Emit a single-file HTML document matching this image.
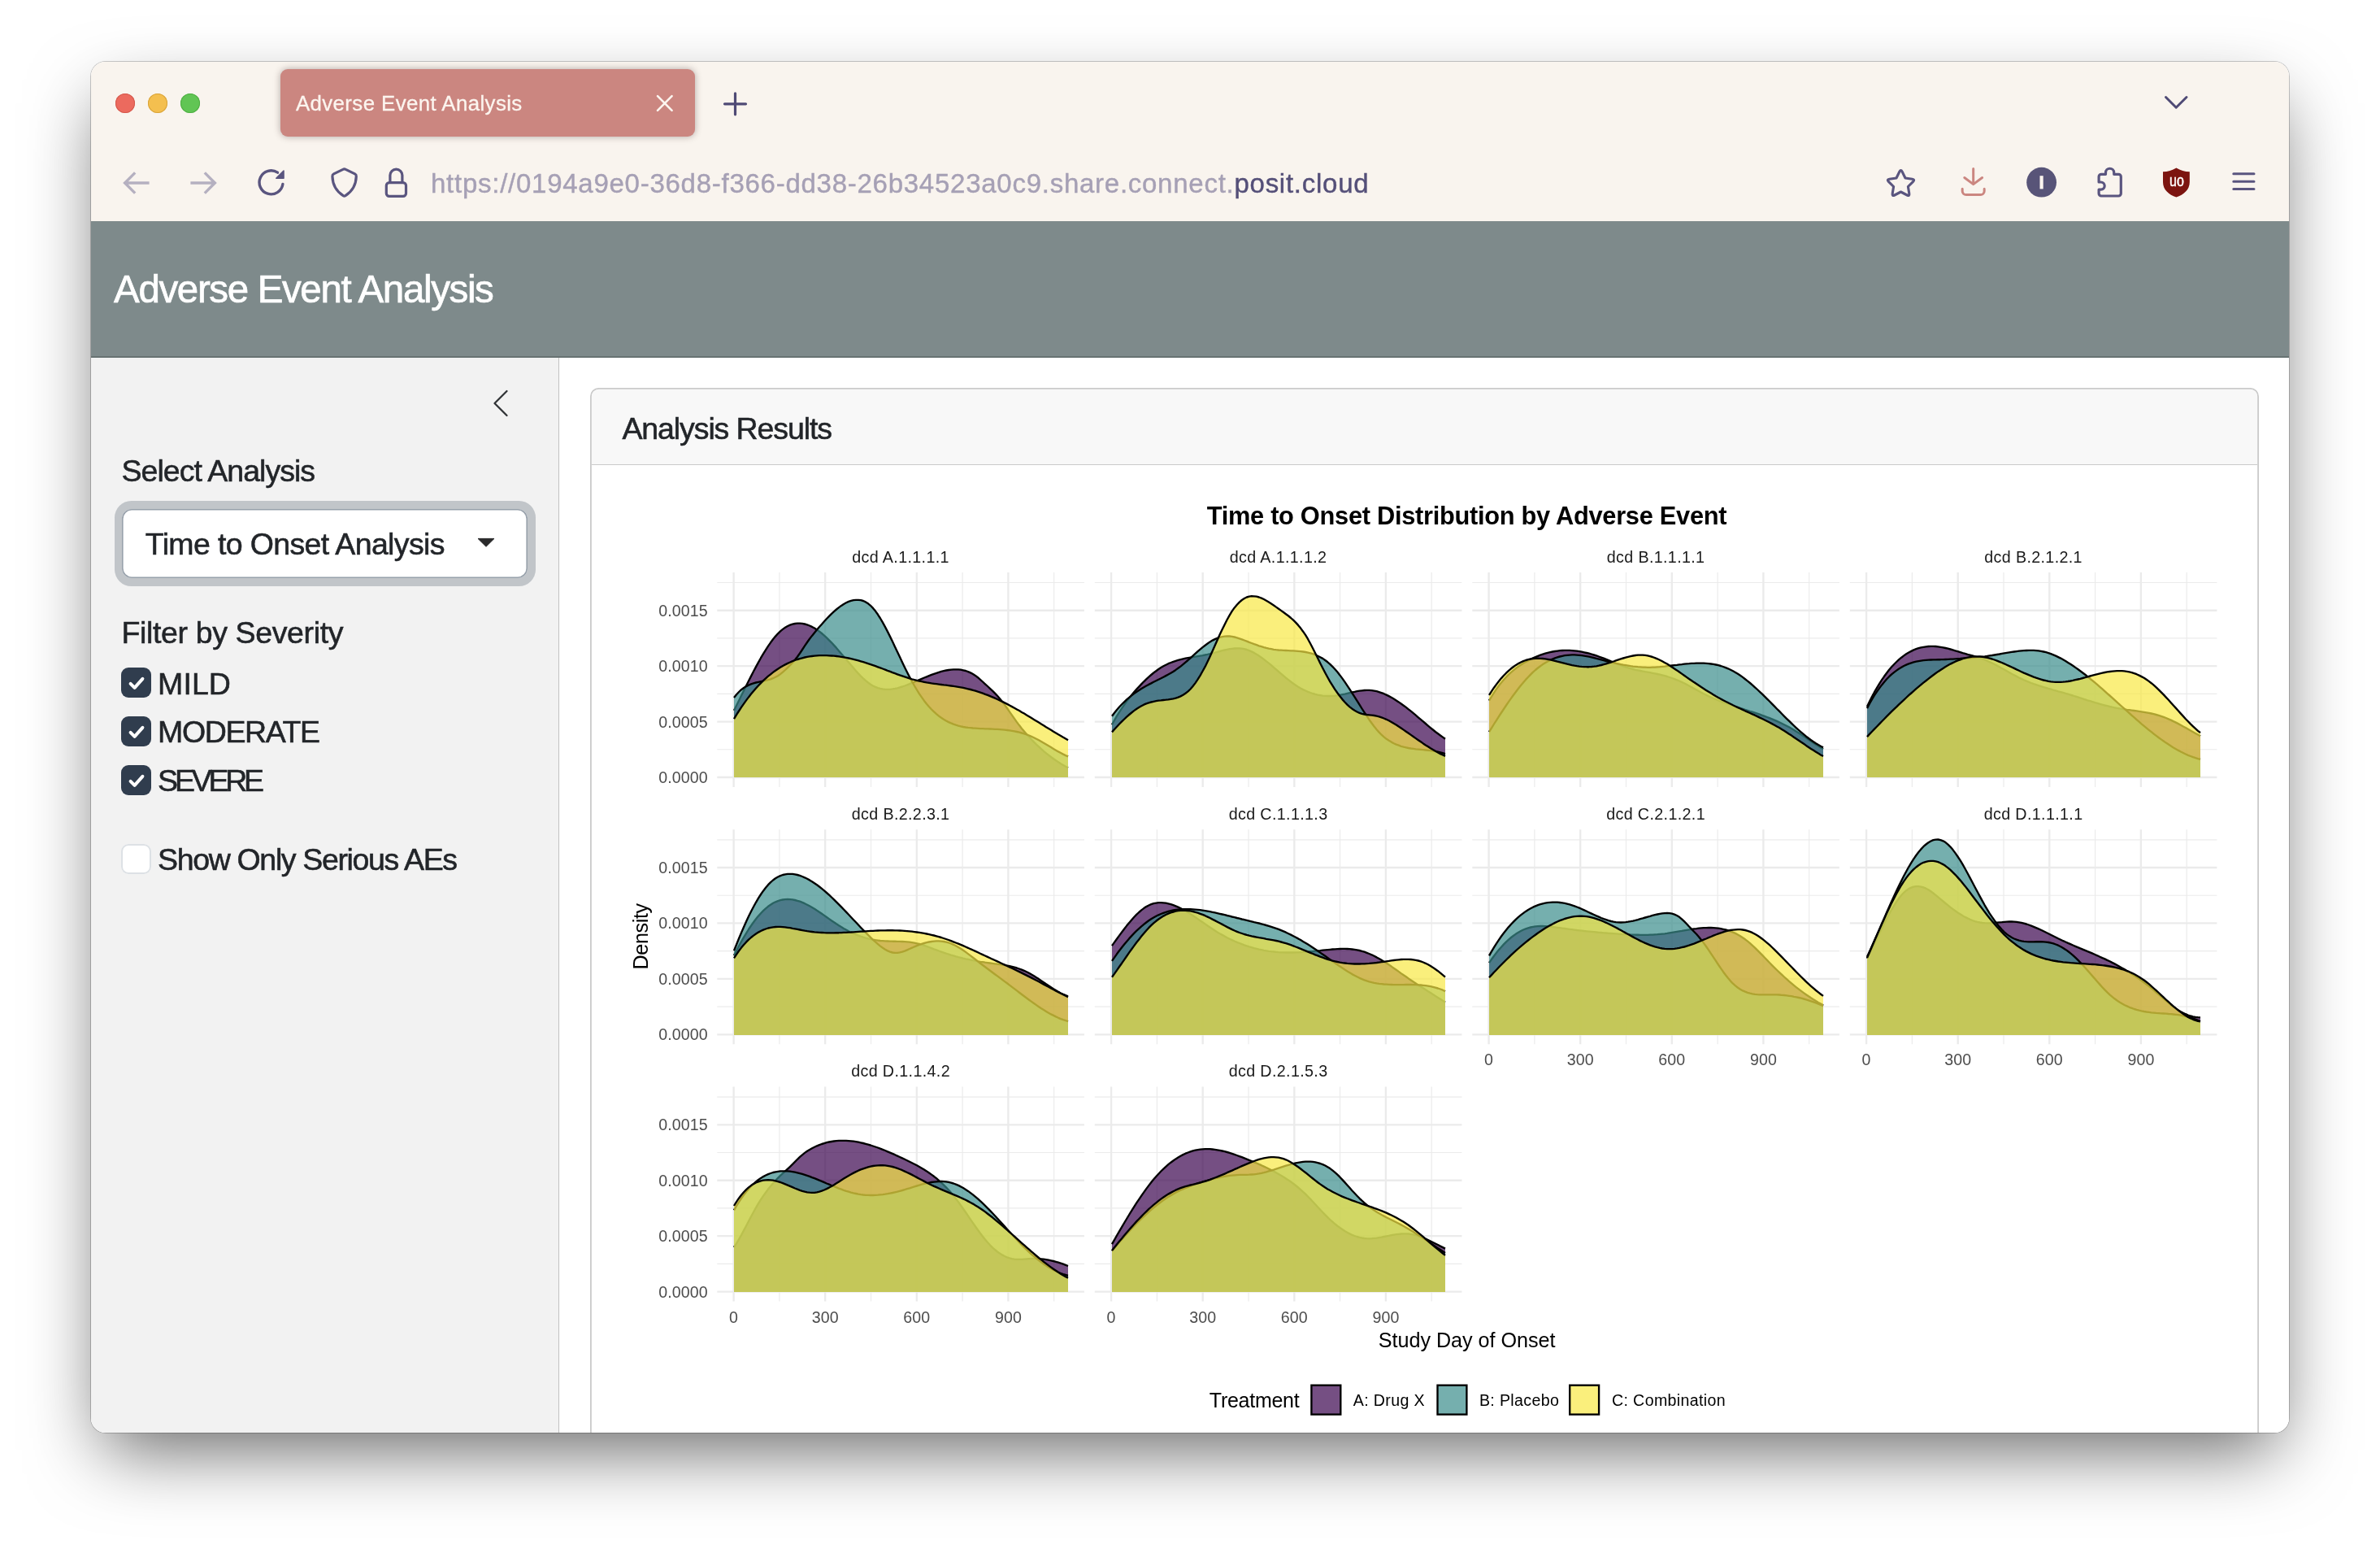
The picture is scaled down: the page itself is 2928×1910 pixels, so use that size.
<!DOCTYPE html>
<html lang="en">
<head>
<meta charset="utf-8">
<title>Adverse Event Analysis</title>
<style>
html,body{margin:0;padding:0;}
body{width:2928px;height:1910px;background:#ffffff;position:relative;overflow:hidden;font-family:"Liberation Sans", Arial, Helvetica, sans-serif;}
.abs{position:absolute;display:block;}
.t{position:absolute;white-space:nowrap;font-family:"Liberation Sans", Arial, Helvetica, sans-serif;}
#shadow{position:absolute;left:112px;top:76px;width:2704px;height:1686px;border-radius:18px;
  box-shadow:0 0 0 1px rgba(0,0,0,0.20),0 36px 90px -15px rgba(0,0,0,0.6);}
#win{position:absolute;left:112px;top:76px;width:2704px;height:1686px;border-radius:18px;overflow:hidden;background:#fff;}
#pg{position:absolute;left:-112px;top:-76px;width:2928px;height:1910px;will-change:transform;}
</style>
</head>
<body>
<div id="shadow"></div>
<div id="win"><div id="pg">
<div class="abs" style="left:112px;top:76px;width:2704px;height:196px;background:#f9f4ee"></div>
<div class="abs" style="left:142px;top:115px;width:24px;height:24px;border-radius:50%;background:#ec6a5e;box-shadow:inset 0 0 0 1px #d4584c"></div>
<div class="abs" style="left:182px;top:115px;width:24px;height:24px;border-radius:50%;background:#f4bf4f;box-shadow:inset 0 0 0 1px #d8a33a"></div>
<div class="abs" style="left:222px;top:115px;width:24px;height:24px;border-radius:50%;background:#61c554;box-shadow:inset 0 0 0 1px #4fae43"></div>
<div class="abs" style="left:345px;top:85px;width:510px;height:83px;border-radius:9px;background:#cb8680;box-shadow:0 0 9px rgba(60,40,40,0.38)"></div>
<div class="t" style="left:363.9px;top:115.3px;font-size:25.80px;line-height:25.80px;color:#fcf5ef;letter-spacing:0.419px;-webkit-text-stroke:0.3px #fcf5ef;">Adverse Event Analysis</div>
<svg class="abs" style="left:112px;top:76px" width="2704" height="196" viewBox="112 76 2704 196" fill="none" stroke-linecap="round" stroke-linejoin="round"><path d="M809 118.2L826.6 135.8M826.6 118.2L809 135.8" stroke="#fcf5ef" stroke-width="2.6"/><path d="M891.5 127.8H917.5M904.5 114.8V140.8" stroke="#4f4a75" stroke-width="3.2"/><path d="M2664.5 119.5L2677.2 132.2L2690 119.5" stroke="#4f4a75" stroke-width="3"/><path d="M183.6 225H154.5M166.2 212.4L153.6 225L166.2 237.6" stroke="#b5b0c0" stroke-width="3.4" stroke-linecap="butt" stroke-linejoin="miter"/><path d="M234.4 225H263.5M251.8 212.4L264.4 225L251.8 237.6" stroke="#b5b0c0" stroke-width="3.4" stroke-linecap="butt" stroke-linejoin="miter"/><path d="M347.9 226.5A14.5 14.5 0 1 1 341.5 212.2" stroke="#5a557f" stroke-width="3.4"/><path d="M349 210V219.2H339.8Z" fill="#5a557f" stroke="#5a557f" stroke-width="1.6"/><path d="M421.9 208.4Q423.6 207.5 425.3 208.4L436.6 213.9Q438.4 214.8 438.3 216.8C438 227.6 433 235.6 425 240.6Q423.6 241.5 422.2 240.6C414.2 235.6 409.2 227.6 408.9 216.8Q408.8 214.8 410.6 213.9Z" stroke="#5a557f" stroke-width="3.2"/><rect x="475.3" y="224.6" width="24.2" height="16.8" rx="3.6" stroke="#5a557f" stroke-width="3.2"/><path d="M479.9 224.3V215.6A7.5 7.5 0 0 1 494.9 215.6V224.3" stroke="#5a557f" stroke-width="3.2"/><path d="M2336.8 211.3Q2338.5 208.0 2340.2 211.3L2344.0 219.0L2352.5 220.3Q2356.2 220.9 2353.6 223.4L2347.4 229.5L2348.8 238.0Q2349.4 241.6 2346.2 240.0L2338.5 236.0L2330.8 240.0Q2327.6 241.6 2328.2 238.0L2329.6 229.5L2323.4 223.4Q2320.8 220.9 2324.5 220.3L2333.0 219.0Z" stroke="#5a557f" stroke-width="3.1"/><path d="M2427.7 207.6V226M2416.8 218.5L2427.7 226.6L2438.6 218.5" stroke="#cb8680" stroke-width="3"/><path d="M2414.2 232.2V235A4.6 4.6 0 0 0 2418.8 239.6H2436.6A4.6 4.6 0 0 0 2441.2 235V232.2" stroke="#cb8680" stroke-width="3"/><circle cx="2511.6" cy="224.2" r="18.4" fill="#585478" stroke="none"/><path d="M2511.6 216.2V232.4" stroke="#fcf5ef" stroke-width="4.2" stroke-linecap="butt"/><path d="M2590.5 214.3V212.3A5.1 5.1 0 0 1 2600.7 212.3V214.3H2606.3A3 3 0 0 1 2609.3 217.3V238A3 3 0 0 1 2606.3 241H2585.1A3 3 0 0 1 2582.1 238V233.2H2584.6A4.6 4.6 0 0 0 2584.6 224H2582.1V217.3A3 3 0 0 1 2585.1 214.3Z" stroke="#5a557f" stroke-width="3.2"/><path d="M2677.4 206.4C2682.5 209.6 2687.8 211 2693.8 211.2V224C2693.8 233.4 2686.6 239.4 2677.4 242.6C2668.2 239.4 2661 233.4 2661 224V211.2C2667 211 2672.3 209.6 2677.4 206.4Z" fill="#7c1410" stroke="none"/><path d="M2747.8 213.7H2773M2747.8 223.3H2773M2747.8 232.6H2773" stroke="#5a557f" stroke-width="3"/></svg>
<div class="t" style="left:2668.6px;top:211.7px;font-size:20.00px;line-height:20.00px;color:#ffffff;letter-spacing:0.000px;-webkit-text-stroke:0.5px #ffffff;transform:scaleX(0.8);transform-origin:0 0;">uo</div>
<div class="t" style="left:530.0px;top:208.9px;font-size:33.00px;line-height:33.00px;color:#a6a0b5;letter-spacing:0.738px;-webkit-text-stroke:0.4px #a6a0b5;">https://0194a9e0-36d8-f366-dd38-26b34523a0c9.share.connect.<span style="color:#544f78;-webkit-text-stroke:0.4px #544f78">posit.cloud</span></div>
<div class="abs" style="left:112px;top:272px;width:2704px;height:167.8px;background:#7e8a8b;box-shadow:inset 0 -2px 0 rgba(60,70,70,0.35)"></div>
<div class="t" style="left:140.1px;top:331.9px;font-size:47.50px;line-height:47.50px;color:#ffffff;letter-spacing:-1.361px;-webkit-text-stroke:0.7px #ffffff;">Adverse Event Analysis</div>
<div class="abs" style="left:112px;top:439.8px;width:575.2px;height:1330px;background:#f2f2f2;border-right:1.7px solid #c2c2c2"></div>
<div class="abs" style="left:688.9px;top:439.8px;width:2127.1px;height:1330px;background:#ffffff"></div>
<svg class="abs" style="left:600px;top:475px" width="40" height="44" viewBox="600 475 40 44" fill="none"><path d="M623.5 481L608.5 496L623.5 511" stroke="#2f3235" stroke-width="2.2" stroke-linecap="round" stroke-linejoin="round"/></svg>
<div class="t" style="left:149.5px;top:561.3px;font-size:37.50px;line-height:37.50px;color:#222529;letter-spacing:-0.973px;-webkit-text-stroke:0.55px #222529;">Select Analysis</div>
<div class="abs" style="left:140.5px;top:616px;width:518px;height:105px;border-radius:20.5px;background:#c1c5c9"></div>
<div class="abs" style="left:150px;top:625.6px;width:499px;height:85.6px;border-radius:12px;background:#fff;box-shadow:inset 0 0 0 1.6px #98a1ab"></div>
<div class="t" style="left:178.8px;top:651.2px;font-size:37.50px;line-height:37.50px;color:#222529;letter-spacing:-0.638px;-webkit-text-stroke:0.55px #222529;">Time to Onset Analysis</div>
<svg class="abs" style="left:580px;top:655px" width="36" height="24" viewBox="580 655 36 24"><path d="M588 662.4H608L598 672.3Z" fill="#2a2a2b" stroke="#2a2a2b" stroke-width="1" stroke-linejoin="round"/></svg>
<div class="t" style="left:149.5px;top:759.6px;font-size:37.50px;line-height:37.50px;color:#222529;letter-spacing:-0.367px;-webkit-text-stroke:0.55px #222529;">Filter by Severity</div>
<div class="abs" style="left:149.1px;top:821.1px;width:36.9px;height:36.9px;border-radius:9px;background:#303d4e"></div>
<svg class="abs" style="left:149.6px;top:821.6px" width="36" height="36" viewBox="0 0 36 36" fill="none"><path d="M10.6 18.8L15.6 23.8L25.4 12.8" stroke="#fff" stroke-width="4" stroke-linecap="round" stroke-linejoin="round"/></svg>
<div class="t" style="left:194.1px;top:822.5px;font-size:37.50px;line-height:37.50px;color:#222529;letter-spacing:0.068px;-webkit-text-stroke:0.55px #222529;">MILD</div>
<div class="abs" style="left:149.1px;top:881.1px;width:36.9px;height:36.9px;border-radius:9px;background:#303d4e"></div>
<svg class="abs" style="left:149.6px;top:881.6px" width="36" height="36" viewBox="0 0 36 36" fill="none"><path d="M10.6 18.8L15.6 23.8L25.4 12.8" stroke="#fff" stroke-width="4" stroke-linecap="round" stroke-linejoin="round"/></svg>
<div class="t" style="left:194.1px;top:882.4px;font-size:37.50px;line-height:37.50px;color:#222529;letter-spacing:-1.391px;-webkit-text-stroke:0.55px #222529;">MODERATE</div>
<div class="abs" style="left:149.1px;top:941.1px;width:36.9px;height:36.9px;border-radius:9px;background:#303d4e"></div>
<svg class="abs" style="left:149.6px;top:941.6px" width="36" height="36" viewBox="0 0 36 36" fill="none"><path d="M10.6 18.8L15.6 23.8L25.4 12.8" stroke="#fff" stroke-width="4" stroke-linecap="round" stroke-linejoin="round"/></svg>
<div class="t" style="left:194.1px;top:942.3px;font-size:37.50px;line-height:37.50px;color:#222529;letter-spacing:-4.230px;-webkit-text-stroke:0.55px #222529;">SEVERE</div>
<div class="abs" style="left:149.3px;top:1038.2px;width:36.4px;height:36.4px;border-radius:9px;background:#fff;box-shadow:inset 0 0 0 2px #dde1e5"></div>
<div class="t" style="left:194.1px;top:1039.0px;font-size:37.50px;line-height:37.50px;color:#222529;letter-spacing:-1.352px;-webkit-text-stroke:0.55px #222529;">Show Only Serious AEs</div>
<div class="abs" style="left:726.2px;top:477.1px;width:2052.6px;height:1320px;border-radius:10.5px;background:#fff;box-shadow:inset 0 0 0 1.8px #cacaca"></div>
<div class="abs" style="left:728px;top:478.9px;width:2049px;height:92.1px;border-radius:8.7px 8.7px 0 0;background:#f8f8f8;border-bottom:1.8px solid #cacaca"></div>
<div class="t" style="left:765.4px;top:508.7px;font-size:37.50px;line-height:37.50px;color:#222529;letter-spacing:-1.094px;-webkit-text-stroke:0.55px #222529;">Analysis Results</div>
<svg class="abs" style="left:740px;top:590px" width="2030" height="1180" viewBox="740 590 2030 1180" font-family='"Liberation Sans", Arial, Helvetica, sans-serif'>
<text x="1804.6" y="645.3" text-anchor="middle" font-size="30.8" font-weight="700" fill="#000" textLength="639.8" lengthAdjust="spacing">Time to Onset Distribution by Adverse Event</text>
<text x="1804.6" y="1656.8" text-anchor="middle" font-size="25.2" fill="#000" textLength="217.6" lengthAdjust="spacing">Study Day of Onset</text>
<text transform="translate(796.8 1151.7) rotate(-90)" text-anchor="middle" font-size="25.2" fill="#000" textLength="81.6" lengthAdjust="spacing">Density</text>
<g><path d="M958.90 704.0V967.9M1071.50 704.0V967.9M1184.10 704.0V967.9M1296.70 704.0V967.9M882.3 921.78H1333.9M882.3 853.36H1333.9M882.3 784.92H1333.9M882.3 716.50H1333.9" stroke="#ebebeb" stroke-width="1.17" fill="none"/><path d="M902.60 704.0V967.9M1015.20 704.0V967.9M1127.80 704.0V967.9M1240.40 704.0V967.9M882.3 956.00H1333.9M882.3 887.57H1333.9M882.3 819.14H1333.9M882.3 750.71H1333.9" stroke="#ebebeb" stroke-width="2.35" fill="none"/><path d="M903.0 873.8L906.0 867.8L909.0 861.7L912.0 855.6L915.0 849.5L918.0 843.5L921.0 837.5L924.0 831.6L927.0 825.7L930.0 820.1L933.0 814.6L936.0 809.2L939.0 804.1L942.0 799.3L945.0 794.6L948.0 790.3L951.0 786.3L954.0 782.6L957.0 779.3L960.0 776.4L963.0 773.9L966.0 771.8L969.0 770.0L972.0 768.7L975.0 767.6L978.0 767.0L981.0 766.6L984.0 766.6L987.0 766.9L990.0 767.5L993.0 768.3L996.0 769.5L999.0 770.9L1002.0 772.6L1005.0 774.5L1008.0 776.6L1011.0 779.0L1014.0 781.6L1017.0 784.3L1020.0 787.3L1023.0 790.3L1026.0 793.6L1029.0 796.9L1032.0 800.4L1035.0 803.9L1038.0 807.4L1041.0 811.0L1044.0 814.6L1047.0 818.1L1050.0 821.6L1053.0 825.1L1056.0 828.4L1059.0 831.5L1062.0 834.4L1065.0 837.1L1068.0 839.5L1071.0 841.7L1074.0 843.5L1077.0 844.9L1080.0 846.1L1083.0 846.9L1086.0 847.5L1089.0 847.8L1092.0 847.9L1095.0 847.8L1098.0 847.4L1101.0 846.9L1104.0 846.3L1107.0 845.4L1110.0 844.5L1113.0 843.5L1116.0 842.4L1119.0 841.2L1122.0 839.9L1125.0 838.7L1128.0 837.4L1131.0 836.1L1134.0 834.8L1137.0 833.5L1140.0 832.3L1143.0 831.1L1146.0 829.9L1149.0 828.8L1152.0 827.8L1155.0 826.8L1158.0 825.9L1161.0 825.2L1164.0 824.5L1167.0 824.0L1170.0 823.6L1173.0 823.4L1176.0 823.3L1179.0 823.4L1182.0 823.7L1185.0 824.3L1188.0 825.0L1191.0 826.1L1194.0 827.4L1197.0 829.0L1200.0 830.9L1203.0 833.2L1206.0 835.8L1209.0 838.5L1212.0 841.3L1215.0 844.0L1218.0 846.8L1221.0 849.6L1224.0 852.6L1227.0 855.8L1230.0 859.2L1233.0 862.9L1236.0 866.9L1239.0 871.0L1242.0 875.3L1245.0 879.6L1248.0 883.9L1251.0 888.1L1254.0 892.1L1257.0 895.9L1260.0 899.5L1263.0 903.0L1266.0 906.3L1269.0 909.5L1272.0 912.6L1275.0 915.6L1278.0 918.4L1281.0 921.1L1284.0 923.8L1287.0 926.3L1290.0 928.7L1293.0 931.0L1296.0 933.2L1299.0 935.3L1302.0 937.3L1305.0 939.2L1308.0 941.0L1311.0 942.8L1314.0 944.4L1314.0 956.0L903.0 956.0Z" fill="#3a044f" fill-opacity="0.7" stroke="none"/><path d="M903.0 873.8L906.0 867.8L909.0 861.7L912.0 855.6L915.0 849.5L918.0 843.5L921.0 837.5L924.0 831.6L927.0 825.7L930.0 820.1L933.0 814.6L936.0 809.2L939.0 804.1L942.0 799.3L945.0 794.6L948.0 790.3L951.0 786.3L954.0 782.6L957.0 779.3L960.0 776.4L963.0 773.9L966.0 771.8L969.0 770.0L972.0 768.7L975.0 767.6L978.0 767.0L981.0 766.6L984.0 766.6L987.0 766.9L990.0 767.5L993.0 768.3L996.0 769.5L999.0 770.9L1002.0 772.6L1005.0 774.5L1008.0 776.6L1011.0 779.0L1014.0 781.6L1017.0 784.3L1020.0 787.3L1023.0 790.3L1026.0 793.6L1029.0 796.9L1032.0 800.4L1035.0 803.9L1038.0 807.4L1041.0 811.0L1044.0 814.6L1047.0 818.1L1050.0 821.6L1053.0 825.1L1056.0 828.4L1059.0 831.5L1062.0 834.4L1065.0 837.1L1068.0 839.5L1071.0 841.7L1074.0 843.5L1077.0 844.9L1080.0 846.1L1083.0 846.9L1086.0 847.5L1089.0 847.8L1092.0 847.9L1095.0 847.8L1098.0 847.4L1101.0 846.9L1104.0 846.3L1107.0 845.4L1110.0 844.5L1113.0 843.5L1116.0 842.4L1119.0 841.2L1122.0 839.9L1125.0 838.7L1128.0 837.4L1131.0 836.1L1134.0 834.8L1137.0 833.5L1140.0 832.3L1143.0 831.1L1146.0 829.9L1149.0 828.8L1152.0 827.8L1155.0 826.8L1158.0 825.9L1161.0 825.2L1164.0 824.5L1167.0 824.0L1170.0 823.6L1173.0 823.4L1176.0 823.3L1179.0 823.4L1182.0 823.7L1185.0 824.3L1188.0 825.0L1191.0 826.1L1194.0 827.4L1197.0 829.0L1200.0 830.9L1203.0 833.2L1206.0 835.8L1209.0 838.5L1212.0 841.3L1215.0 844.0L1218.0 846.8L1221.0 849.6L1224.0 852.6L1227.0 855.8L1230.0 859.2L1233.0 862.9L1236.0 866.9L1239.0 871.0L1242.0 875.3L1245.0 879.6L1248.0 883.9L1251.0 888.1L1254.0 892.1L1257.0 895.9L1260.0 899.5L1263.0 903.0L1266.0 906.3L1269.0 909.5L1272.0 912.6L1275.0 915.6L1278.0 918.4L1281.0 921.1L1284.0 923.8L1287.0 926.3L1290.0 928.7L1293.0 931.0L1296.0 933.2L1299.0 935.3L1302.0 937.3L1305.0 939.2L1308.0 941.0L1311.0 942.8L1314.0 944.4" fill="none" stroke="#000" stroke-width="2.35" stroke-linejoin="round"/><path d="M903.0 858.0L906.0 854.2L909.0 851.0L912.0 848.2L915.0 846.0L918.0 844.1L921.0 842.6L924.0 841.3L927.0 840.3L930.0 839.5L933.0 838.8L936.0 838.2L939.0 837.6L942.0 836.9L945.0 836.2L948.0 835.3L951.0 834.2L954.0 832.8L957.0 831.2L960.0 829.1L963.0 826.7L966.0 824.0L969.0 821.1L972.0 818.1L975.0 814.9L978.0 811.5L981.0 807.7L984.0 803.5L987.0 799.0L990.0 794.4L993.0 790.0L996.0 785.8L999.0 781.9L1002.0 778.2L1005.0 774.6L1008.0 771.1L1011.0 767.7L1014.0 764.3L1017.0 761.0L1020.0 757.9L1023.0 754.9L1026.0 752.1L1029.0 749.5L1032.0 747.1L1035.0 744.9L1038.0 743.0L1041.0 741.3L1044.0 739.9L1047.0 738.9L1050.0 738.1L1053.0 737.8L1056.0 737.8L1059.0 738.2L1062.0 739.0L1065.0 740.4L1068.0 742.3L1071.0 744.8L1074.0 747.9L1077.0 751.6L1080.0 755.8L1083.0 760.5L1086.0 765.6L1089.0 771.1L1092.0 776.9L1095.0 782.9L1098.0 789.1L1101.0 795.4L1104.0 801.8L1107.0 808.1L1110.0 814.5L1113.0 820.7L1116.0 826.7L1119.0 832.6L1122.0 838.2L1125.0 843.5L1128.0 848.5L1131.0 853.3L1134.0 857.7L1137.0 861.9L1140.0 865.7L1143.0 869.2L1146.0 872.5L1149.0 875.4L1152.0 878.1L1155.0 880.6L1158.0 882.8L1161.0 884.8L1164.0 886.5L1167.0 888.1L1170.0 889.4L1173.0 890.6L1176.0 891.7L1179.0 892.6L1182.0 893.3L1185.0 894.0L1188.0 894.5L1191.0 894.9L1194.0 895.2L1197.0 895.5L1200.0 895.7L1203.0 895.9L1206.0 896.1L1209.0 896.2L1212.0 896.3L1215.0 896.4L1218.0 896.5L1221.0 896.6L1224.0 896.8L1227.0 896.9L1230.0 897.1L1233.0 897.4L1236.0 897.7L1239.0 898.0L1242.0 898.4L1245.0 898.8L1248.0 899.4L1251.0 900.0L1254.0 900.7L1257.0 901.5L1260.0 902.4L1263.0 903.4L1266.0 904.5L1269.0 905.8L1272.0 907.2L1275.0 908.7L1278.0 910.3L1281.0 912.0L1284.0 913.7L1287.0 915.5L1290.0 917.3L1293.0 919.1L1296.0 920.9L1299.0 922.7L1302.0 924.4L1305.0 926.0L1308.0 927.6L1311.0 929.1L1314.0 930.4L1314.0 956.0L903.0 956.0Z" fill="#3b8d8b" fill-opacity="0.7" stroke="none"/><path d="M903.0 858.0L906.0 854.2L909.0 851.0L912.0 848.2L915.0 846.0L918.0 844.1L921.0 842.6L924.0 841.3L927.0 840.3L930.0 839.5L933.0 838.8L936.0 838.2L939.0 837.6L942.0 836.9L945.0 836.2L948.0 835.3L951.0 834.2L954.0 832.8L957.0 831.2L960.0 829.1L963.0 826.7L966.0 824.0L969.0 821.1L972.0 818.1L975.0 814.9L978.0 811.5L981.0 807.7L984.0 803.5L987.0 799.0L990.0 794.4L993.0 790.0L996.0 785.8L999.0 781.9L1002.0 778.2L1005.0 774.6L1008.0 771.1L1011.0 767.7L1014.0 764.3L1017.0 761.0L1020.0 757.9L1023.0 754.9L1026.0 752.1L1029.0 749.5L1032.0 747.1L1035.0 744.9L1038.0 743.0L1041.0 741.3L1044.0 739.9L1047.0 738.9L1050.0 738.1L1053.0 737.8L1056.0 737.8L1059.0 738.2L1062.0 739.0L1065.0 740.4L1068.0 742.3L1071.0 744.8L1074.0 747.9L1077.0 751.6L1080.0 755.8L1083.0 760.5L1086.0 765.6L1089.0 771.1L1092.0 776.9L1095.0 782.9L1098.0 789.1L1101.0 795.4L1104.0 801.8L1107.0 808.1L1110.0 814.5L1113.0 820.7L1116.0 826.7L1119.0 832.6L1122.0 838.2L1125.0 843.5L1128.0 848.5L1131.0 853.3L1134.0 857.7L1137.0 861.9L1140.0 865.7L1143.0 869.2L1146.0 872.5L1149.0 875.4L1152.0 878.1L1155.0 880.6L1158.0 882.8L1161.0 884.8L1164.0 886.5L1167.0 888.1L1170.0 889.4L1173.0 890.6L1176.0 891.7L1179.0 892.6L1182.0 893.3L1185.0 894.0L1188.0 894.5L1191.0 894.9L1194.0 895.2L1197.0 895.5L1200.0 895.7L1203.0 895.9L1206.0 896.1L1209.0 896.2L1212.0 896.3L1215.0 896.4L1218.0 896.5L1221.0 896.6L1224.0 896.8L1227.0 896.9L1230.0 897.1L1233.0 897.4L1236.0 897.7L1239.0 898.0L1242.0 898.4L1245.0 898.8L1248.0 899.4L1251.0 900.0L1254.0 900.7L1257.0 901.5L1260.0 902.4L1263.0 903.4L1266.0 904.5L1269.0 905.8L1272.0 907.2L1275.0 908.7L1278.0 910.3L1281.0 912.0L1284.0 913.7L1287.0 915.5L1290.0 917.3L1293.0 919.1L1296.0 920.9L1299.0 922.7L1302.0 924.4L1305.0 926.0L1308.0 927.6L1311.0 929.1L1314.0 930.4" fill="none" stroke="#000" stroke-width="2.35" stroke-linejoin="round"/><path d="M903.0 884.2L906.0 879.2L909.0 874.5L912.0 869.9L915.0 865.6L918.0 861.4L921.0 857.4L924.0 853.6L927.0 850.0L930.0 846.5L933.0 843.2L936.0 840.1L939.0 837.2L942.0 834.4L945.0 831.7L948.0 829.3L951.0 826.9L954.0 824.7L957.0 822.7L960.0 820.8L963.0 819.0L966.0 817.4L969.0 815.9L972.0 814.5L975.0 813.2L978.0 812.0L981.0 811.0L984.0 810.1L987.0 809.3L990.0 808.5L993.0 807.9L996.0 807.4L999.0 807.0L1002.0 806.6L1005.0 806.4L1008.0 806.2L1011.0 806.1L1014.0 806.1L1017.0 806.1L1020.0 806.3L1023.0 806.5L1026.0 806.7L1029.0 807.0L1032.0 807.4L1035.0 807.8L1038.0 808.3L1041.0 808.9L1044.0 809.5L1047.0 810.2L1050.0 810.9L1053.0 811.6L1056.0 812.4L1059.0 813.3L1062.0 814.2L1065.0 815.1L1068.0 816.1L1071.0 817.1L1074.0 818.1L1077.0 819.2L1080.0 820.3L1083.0 821.4L1086.0 822.5L1089.0 823.6L1092.0 824.8L1095.0 825.9L1098.0 827.1L1101.0 828.2L1104.0 829.3L1107.0 830.4L1110.0 831.4L1113.0 832.4L1116.0 833.4L1119.0 834.4L1122.0 835.3L1125.0 836.1L1128.0 836.9L1131.0 837.6L1134.0 838.2L1137.0 838.8L1140.0 839.4L1143.0 839.9L1146.0 840.4L1149.0 840.8L1152.0 841.2L1155.0 841.6L1158.0 842.0L1161.0 842.4L1164.0 842.7L1167.0 843.1L1170.0 843.5L1173.0 843.9L1176.0 844.3L1179.0 844.8L1182.0 845.3L1185.0 845.9L1188.0 846.6L1191.0 847.3L1194.0 848.0L1197.0 848.8L1200.0 849.7L1203.0 850.7L1206.0 851.6L1209.0 852.7L1212.0 853.8L1215.0 854.9L1218.0 856.1L1221.0 857.4L1224.0 858.7L1227.0 860.0L1230.0 861.4L1233.0 862.9L1236.0 864.4L1239.0 865.9L1242.0 867.5L1245.0 869.1L1248.0 870.7L1251.0 872.4L1254.0 874.1L1257.0 875.9L1260.0 877.6L1263.0 879.4L1266.0 881.2L1269.0 883.1L1272.0 884.9L1275.0 886.7L1278.0 888.6L1281.0 890.4L1284.0 892.3L1287.0 894.2L1290.0 896.0L1293.0 897.8L1296.0 899.7L1299.0 901.5L1302.0 903.3L1305.0 905.0L1308.0 906.8L1311.0 908.5L1314.0 910.2L1314.0 956.0L903.0 956.0Z" fill="#f8e845" fill-opacity="0.7" stroke="none"/><path d="M903.0 884.2L906.0 879.2L909.0 874.5L912.0 869.9L915.0 865.6L918.0 861.4L921.0 857.4L924.0 853.6L927.0 850.0L930.0 846.5L933.0 843.2L936.0 840.1L939.0 837.2L942.0 834.4L945.0 831.7L948.0 829.3L951.0 826.9L954.0 824.7L957.0 822.7L960.0 820.8L963.0 819.0L966.0 817.4L969.0 815.9L972.0 814.5L975.0 813.2L978.0 812.0L981.0 811.0L984.0 810.1L987.0 809.3L990.0 808.5L993.0 807.9L996.0 807.4L999.0 807.0L1002.0 806.6L1005.0 806.4L1008.0 806.2L1011.0 806.1L1014.0 806.1L1017.0 806.1L1020.0 806.3L1023.0 806.5L1026.0 806.7L1029.0 807.0L1032.0 807.4L1035.0 807.8L1038.0 808.3L1041.0 808.9L1044.0 809.5L1047.0 810.2L1050.0 810.9L1053.0 811.6L1056.0 812.4L1059.0 813.3L1062.0 814.2L1065.0 815.1L1068.0 816.1L1071.0 817.1L1074.0 818.1L1077.0 819.2L1080.0 820.3L1083.0 821.4L1086.0 822.5L1089.0 823.6L1092.0 824.8L1095.0 825.9L1098.0 827.1L1101.0 828.2L1104.0 829.3L1107.0 830.4L1110.0 831.4L1113.0 832.4L1116.0 833.4L1119.0 834.4L1122.0 835.3L1125.0 836.1L1128.0 836.9L1131.0 837.6L1134.0 838.2L1137.0 838.8L1140.0 839.4L1143.0 839.9L1146.0 840.4L1149.0 840.8L1152.0 841.2L1155.0 841.6L1158.0 842.0L1161.0 842.4L1164.0 842.7L1167.0 843.1L1170.0 843.5L1173.0 843.9L1176.0 844.3L1179.0 844.8L1182.0 845.3L1185.0 845.9L1188.0 846.6L1191.0 847.3L1194.0 848.0L1197.0 848.8L1200.0 849.7L1203.0 850.7L1206.0 851.6L1209.0 852.7L1212.0 853.8L1215.0 854.9L1218.0 856.1L1221.0 857.4L1224.0 858.7L1227.0 860.0L1230.0 861.4L1233.0 862.9L1236.0 864.4L1239.0 865.9L1242.0 867.5L1245.0 869.1L1248.0 870.7L1251.0 872.4L1254.0 874.1L1257.0 875.9L1260.0 877.6L1263.0 879.4L1266.0 881.2L1269.0 883.1L1272.0 884.9L1275.0 886.7L1278.0 888.6L1281.0 890.4L1284.0 892.3L1287.0 894.2L1290.0 896.0L1293.0 897.8L1296.0 899.7L1299.0 901.5L1302.0 903.3L1305.0 905.0L1308.0 906.8L1311.0 908.5L1314.0 910.2" fill="none" stroke="#000" stroke-width="2.35" stroke-linejoin="round"/><text x="1108.1" y="691.8" text-anchor="middle" font-size="19.7" letter-spacing="0.36" fill="#1a1a1a">dcd A.1.1.1.1</text><text x="870.7" y="963.0" text-anchor="end" font-size="19.6" letter-spacing="0.1" fill="#4d4d4d">0.0000</text><text x="870.7" y="894.6" text-anchor="end" font-size="19.6" letter-spacing="0.1" fill="#4d4d4d">0.0005</text><text x="870.7" y="826.1" text-anchor="end" font-size="19.6" letter-spacing="0.1" fill="#4d4d4d">0.0010</text><text x="870.7" y="757.7" text-anchor="end" font-size="19.6" letter-spacing="0.1" fill="#4d4d4d">0.0015</text></g>
<g><path d="M1423.40 704.0V967.9M1536.00 704.0V967.9M1648.60 704.0V967.9M1761.20 704.0V967.9M1346.8 921.78H1798.4M1346.8 853.36H1798.4M1346.8 784.92H1798.4M1346.8 716.50H1798.4" stroke="#ebebeb" stroke-width="1.17" fill="none"/><path d="M1367.10 704.0V967.9M1479.70 704.0V967.9M1592.30 704.0V967.9M1704.90 704.0V967.9M1346.8 956.00H1798.4M1346.8 887.57H1798.4M1346.8 819.14H1798.4M1346.8 750.71H1798.4" stroke="#ebebeb" stroke-width="2.35" fill="none"/><path d="M1368.0 891.3L1371.0 885.9L1374.0 880.7L1377.0 875.8L1380.1 871.2L1383.1 866.8L1386.1 862.6L1389.1 858.7L1392.1 854.9L1395.1 851.3L1398.1 847.9L1401.2 844.6L1404.2 841.4L1407.2 838.3L1410.2 835.4L1413.2 832.6L1416.2 830.0L1419.2 827.5L1422.3 825.2L1425.3 823.0L1428.3 821.0L1431.3 819.3L1434.3 817.7L1437.3 816.2L1440.4 815.0L1443.4 813.8L1446.4 812.8L1449.4 811.9L1452.4 811.1L1455.4 810.4L1458.4 809.7L1461.5 809.1L1464.5 808.6L1467.5 808.1L1470.5 807.6L1473.5 807.1L1476.5 806.6L1479.5 806.1L1482.6 805.5L1485.6 804.9L1488.6 804.2L1491.6 803.4L1494.6 802.7L1497.6 801.8L1500.6 801.0L1503.7 800.2L1506.7 799.5L1509.7 798.8L1512.7 798.2L1515.7 797.8L1518.7 797.5L1521.8 797.4L1524.8 797.4L1527.8 797.7L1530.8 798.2L1533.8 799.0L1536.8 800.1L1539.8 801.4L1542.9 802.9L1545.9 804.7L1548.9 806.6L1551.9 808.7L1554.9 810.9L1557.9 813.3L1560.9 815.7L1564.0 818.2L1567.0 820.8L1570.0 823.4L1573.0 826.0L1576.0 828.6L1579.0 831.2L1582.0 833.7L1585.1 836.1L1588.1 838.5L1591.1 840.7L1594.1 842.8L1597.1 844.7L1600.1 846.5L1603.1 848.1L1606.2 849.5L1609.2 850.8L1612.2 852.0L1615.2 853.0L1618.2 853.9L1621.2 854.6L1624.2 855.1L1627.3 855.6L1630.3 855.9L1633.3 856.0L1636.3 856.0L1639.3 855.9L1642.3 855.7L1645.4 855.3L1648.4 854.8L1651.4 854.2L1654.4 853.6L1657.4 852.9L1660.4 852.2L1663.4 851.5L1666.5 850.9L1669.5 850.2L1672.5 849.7L1675.5 849.3L1678.5 849.0L1681.5 848.9L1684.5 848.9L1687.6 849.1L1690.6 849.6L1693.6 850.2L1696.6 851.1L1699.6 852.1L1702.6 853.2L1705.6 854.6L1708.7 856.1L1711.7 857.7L1714.7 859.5L1717.7 861.4L1720.7 863.4L1723.7 865.5L1726.8 867.7L1729.8 869.9L1732.8 872.3L1735.8 874.7L1738.8 877.2L1741.8 879.7L1744.8 882.3L1747.9 884.9L1750.9 887.4L1753.9 890.0L1756.9 892.6L1759.9 895.1L1762.9 897.5L1765.9 900.0L1769.0 902.3L1772.0 904.5L1775.0 906.6L1778.0 908.7L1778.0 956.0L1368.0 956.0Z" fill="#3a044f" fill-opacity="0.7" stroke="none"/><path d="M1368.0 891.3L1371.0 885.9L1374.0 880.7L1377.0 875.8L1380.1 871.2L1383.1 866.8L1386.1 862.6L1389.1 858.7L1392.1 854.9L1395.1 851.3L1398.1 847.9L1401.2 844.6L1404.2 841.4L1407.2 838.3L1410.2 835.4L1413.2 832.6L1416.2 830.0L1419.2 827.5L1422.3 825.2L1425.3 823.0L1428.3 821.0L1431.3 819.3L1434.3 817.7L1437.3 816.2L1440.4 815.0L1443.4 813.8L1446.4 812.8L1449.4 811.9L1452.4 811.1L1455.4 810.4L1458.4 809.7L1461.5 809.1L1464.5 808.6L1467.5 808.1L1470.5 807.6L1473.5 807.1L1476.5 806.6L1479.5 806.1L1482.6 805.5L1485.6 804.9L1488.6 804.2L1491.6 803.4L1494.6 802.7L1497.6 801.8L1500.6 801.0L1503.7 800.2L1506.7 799.5L1509.7 798.8L1512.7 798.2L1515.7 797.8L1518.7 797.5L1521.8 797.4L1524.8 797.4L1527.8 797.7L1530.8 798.2L1533.8 799.0L1536.8 800.1L1539.8 801.4L1542.9 802.9L1545.9 804.7L1548.9 806.6L1551.9 808.7L1554.9 810.9L1557.9 813.3L1560.9 815.7L1564.0 818.2L1567.0 820.8L1570.0 823.4L1573.0 826.0L1576.0 828.6L1579.0 831.2L1582.0 833.7L1585.1 836.1L1588.1 838.5L1591.1 840.7L1594.1 842.8L1597.1 844.7L1600.1 846.5L1603.1 848.1L1606.2 849.5L1609.2 850.8L1612.2 852.0L1615.2 853.0L1618.2 853.9L1621.2 854.6L1624.2 855.1L1627.3 855.6L1630.3 855.9L1633.3 856.0L1636.3 856.0L1639.3 855.9L1642.3 855.7L1645.4 855.3L1648.4 854.8L1651.4 854.2L1654.4 853.6L1657.4 852.9L1660.4 852.2L1663.4 851.5L1666.5 850.9L1669.5 850.2L1672.5 849.7L1675.5 849.3L1678.5 849.0L1681.5 848.9L1684.5 848.9L1687.6 849.1L1690.6 849.6L1693.6 850.2L1696.6 851.1L1699.6 852.1L1702.6 853.2L1705.6 854.6L1708.7 856.1L1711.7 857.7L1714.7 859.5L1717.7 861.4L1720.7 863.4L1723.7 865.5L1726.8 867.7L1729.8 869.9L1732.8 872.3L1735.8 874.7L1738.8 877.2L1741.8 879.7L1744.8 882.3L1747.9 884.9L1750.9 887.4L1753.9 890.0L1756.9 892.6L1759.9 895.1L1762.9 897.5L1765.9 900.0L1769.0 902.3L1772.0 904.5L1775.0 906.6L1778.0 908.7" fill="none" stroke="#000" stroke-width="2.35" stroke-linejoin="round"/><path d="M1368.0 880.8L1371.0 876.7L1374.0 873.0L1377.0 869.5L1380.1 866.3L1383.1 863.3L1386.1 860.4L1389.1 857.8L1392.1 855.4L1395.1 853.1L1398.1 851.0L1401.2 849.0L1404.2 847.1L1407.2 845.3L1410.2 843.6L1413.2 841.9L1416.2 840.4L1419.2 838.8L1422.3 837.3L1425.3 835.8L1428.3 834.3L1431.3 832.7L1434.3 831.1L1437.3 829.5L1440.4 827.8L1443.4 825.9L1446.4 823.9L1449.4 821.8L1452.4 819.6L1455.4 817.2L1458.4 814.6L1461.5 812.0L1464.5 809.3L1467.5 806.6L1470.5 803.9L1473.5 801.2L1476.5 798.6L1479.5 796.1L1482.6 793.7L1485.6 791.5L1488.6 789.4L1491.6 787.6L1494.6 786.1L1497.6 784.8L1500.6 783.8L1503.7 783.1L1506.7 782.6L1509.7 782.4L1512.7 782.5L1515.7 782.9L1518.7 783.5L1521.8 784.3L1524.8 785.3L1527.8 786.3L1530.8 787.5L1533.8 788.7L1536.8 789.9L1539.8 791.0L1542.9 792.2L1545.9 793.2L1548.9 794.3L1551.9 795.2L1554.9 796.1L1557.9 796.9L1560.9 797.6L1564.0 798.2L1567.0 798.8L1570.0 799.2L1573.0 799.5L1576.0 799.7L1579.0 799.9L1582.0 800.0L1585.1 800.1L1588.1 800.3L1591.1 800.4L1594.1 800.6L1597.1 800.8L1600.1 801.1L1603.1 801.5L1606.2 802.0L1609.2 802.6L1612.2 803.3L1615.2 804.2L1618.2 805.3L1621.2 806.7L1624.2 808.2L1627.3 809.9L1630.3 812.0L1633.3 814.3L1636.3 816.9L1639.3 819.8L1642.3 823.0L1645.4 826.6L1648.4 830.4L1651.4 834.4L1654.4 838.7L1657.4 843.1L1660.4 847.7L1663.4 852.4L1666.5 857.1L1669.5 861.9L1672.5 866.7L1675.5 871.5L1678.5 876.2L1681.5 880.7L1684.5 885.2L1687.6 889.5L1690.6 893.5L1693.6 897.2L1696.6 900.6L1699.6 903.7L1702.6 906.4L1705.6 908.8L1708.7 910.8L1711.7 912.6L1714.7 914.2L1717.7 915.6L1720.7 916.7L1723.7 917.8L1726.8 918.6L1729.8 919.3L1732.8 920.0L1735.8 920.5L1738.8 920.9L1741.8 921.3L1744.8 921.6L1747.9 921.9L1750.9 922.2L1753.9 922.5L1756.9 922.8L1759.9 923.2L1762.9 923.6L1765.9 924.1L1769.0 924.7L1772.0 925.3L1775.0 926.2L1778.0 927.1L1778.0 956.0L1368.0 956.0Z" fill="#3b8d8b" fill-opacity="0.7" stroke="none"/><path d="M1368.0 880.8L1371.0 876.7L1374.0 873.0L1377.0 869.5L1380.1 866.3L1383.1 863.3L1386.1 860.4L1389.1 857.8L1392.1 855.4L1395.1 853.1L1398.1 851.0L1401.2 849.0L1404.2 847.1L1407.2 845.3L1410.2 843.6L1413.2 841.9L1416.2 840.4L1419.2 838.8L1422.3 837.3L1425.3 835.8L1428.3 834.3L1431.3 832.7L1434.3 831.1L1437.3 829.5L1440.4 827.8L1443.4 825.9L1446.4 823.9L1449.4 821.8L1452.4 819.6L1455.4 817.2L1458.4 814.6L1461.5 812.0L1464.5 809.3L1467.5 806.6L1470.5 803.9L1473.5 801.2L1476.5 798.6L1479.5 796.1L1482.6 793.7L1485.6 791.5L1488.6 789.4L1491.6 787.6L1494.6 786.1L1497.6 784.8L1500.6 783.8L1503.7 783.1L1506.7 782.6L1509.7 782.4L1512.7 782.5L1515.7 782.9L1518.7 783.5L1521.8 784.3L1524.8 785.3L1527.8 786.3L1530.8 787.5L1533.8 788.7L1536.8 789.9L1539.8 791.0L1542.9 792.2L1545.9 793.2L1548.9 794.3L1551.9 795.2L1554.9 796.1L1557.9 796.9L1560.9 797.6L1564.0 798.2L1567.0 798.8L1570.0 799.2L1573.0 799.5L1576.0 799.7L1579.0 799.9L1582.0 800.0L1585.1 800.1L1588.1 800.3L1591.1 800.4L1594.1 800.6L1597.1 800.8L1600.1 801.1L1603.1 801.5L1606.2 802.0L1609.2 802.6L1612.2 803.3L1615.2 804.2L1618.2 805.3L1621.2 806.7L1624.2 808.2L1627.3 809.9L1630.3 812.0L1633.3 814.3L1636.3 816.9L1639.3 819.8L1642.3 823.0L1645.4 826.6L1648.4 830.4L1651.4 834.4L1654.4 838.7L1657.4 843.1L1660.4 847.7L1663.4 852.4L1666.5 857.1L1669.5 861.9L1672.5 866.7L1675.5 871.5L1678.5 876.2L1681.5 880.7L1684.5 885.2L1687.6 889.5L1690.6 893.5L1693.6 897.2L1696.6 900.6L1699.6 903.7L1702.6 906.4L1705.6 908.8L1708.7 910.8L1711.7 912.6L1714.7 914.2L1717.7 915.6L1720.7 916.7L1723.7 917.8L1726.8 918.6L1729.8 919.3L1732.8 920.0L1735.8 920.5L1738.8 920.9L1741.8 921.3L1744.8 921.6L1747.9 921.9L1750.9 922.2L1753.9 922.5L1756.9 922.8L1759.9 923.2L1762.9 923.6L1765.9 924.1L1769.0 924.7L1772.0 925.3L1775.0 926.2L1778.0 927.1" fill="none" stroke="#000" stroke-width="2.35" stroke-linejoin="round"/><path d="M1368.0 900.4L1371.0 897.0L1374.0 893.7L1377.0 890.5L1380.1 887.4L1383.1 884.5L1386.1 881.6L1389.1 879.0L1392.1 876.5L1395.1 874.1L1398.1 872.0L1401.2 870.0L1404.2 868.3L1407.2 866.7L1410.2 865.4L1413.2 864.3L1416.2 863.5L1419.2 862.8L1422.3 862.2L1425.3 861.7L1428.3 861.4L1431.3 861.0L1434.3 860.7L1437.3 860.3L1440.4 859.8L1443.4 859.3L1446.4 858.6L1449.4 857.6L1452.4 856.4L1455.4 854.8L1458.4 852.8L1461.5 850.4L1464.5 847.5L1467.5 844.0L1470.5 840.1L1473.5 835.7L1476.5 830.8L1479.5 825.5L1482.6 819.9L1485.6 813.8L1488.6 807.4L1491.6 800.8L1494.6 794.1L1497.6 787.3L1500.6 780.6L1503.7 774.1L1506.7 767.9L1509.7 762.0L1512.7 756.6L1515.7 751.7L1518.7 747.4L1521.8 743.7L1524.8 740.6L1527.8 738.0L1530.8 736.0L1533.8 734.5L1536.8 733.6L1539.8 733.2L1542.9 733.3L1545.9 733.7L1548.9 734.5L1551.9 735.6L1554.9 737.0L1557.9 738.7L1560.9 740.5L1564.0 742.5L1567.0 744.5L1570.0 746.6L1573.0 748.8L1576.0 750.9L1579.0 753.0L1582.0 755.2L1585.1 757.5L1588.1 760.0L1591.1 762.7L1594.1 765.6L1597.1 768.9L1600.1 772.6L1603.1 776.7L1606.2 781.2L1609.2 786.2L1612.2 791.7L1615.2 797.5L1618.2 803.5L1621.2 809.6L1624.2 815.7L1627.3 821.7L1630.3 827.5L1633.3 833.0L1636.3 838.3L1639.3 843.2L1642.3 847.9L1645.4 852.3L1648.4 856.3L1651.4 860.1L1654.4 863.5L1657.4 866.6L1660.4 869.3L1663.4 871.7L1666.5 873.8L1669.5 875.5L1672.5 876.8L1675.5 877.8L1678.5 878.5L1681.5 879.0L1684.5 879.3L1687.6 879.6L1690.6 880.0L1693.6 880.6L1696.6 881.3L1699.6 882.3L1702.6 883.5L1705.6 884.8L1708.7 886.3L1711.7 888.0L1714.7 889.8L1717.7 891.6L1720.7 893.6L1723.7 895.5L1726.8 897.6L1729.8 899.7L1732.8 901.8L1735.8 903.9L1738.8 906.0L1741.8 908.1L1744.8 910.2L1747.9 912.3L1750.9 914.4L1753.9 916.4L1756.9 918.3L1759.9 920.3L1762.9 922.1L1765.9 923.8L1769.0 925.5L1772.0 927.1L1775.0 928.5L1778.0 929.9L1778.0 956.0L1368.0 956.0Z" fill="#f8e845" fill-opacity="0.7" stroke="none"/><path d="M1368.0 900.4L1371.0 897.0L1374.0 893.7L1377.0 890.5L1380.1 887.4L1383.1 884.5L1386.1 881.6L1389.1 879.0L1392.1 876.5L1395.1 874.1L1398.1 872.0L1401.2 870.0L1404.2 868.3L1407.2 866.7L1410.2 865.4L1413.2 864.3L1416.2 863.5L1419.2 862.8L1422.3 862.2L1425.3 861.7L1428.3 861.4L1431.3 861.0L1434.3 860.7L1437.3 860.3L1440.4 859.8L1443.4 859.3L1446.4 858.6L1449.4 857.6L1452.4 856.4L1455.4 854.8L1458.4 852.8L1461.5 850.4L1464.5 847.5L1467.5 844.0L1470.5 840.1L1473.5 835.7L1476.5 830.8L1479.5 825.5L1482.6 819.9L1485.6 813.8L1488.6 807.4L1491.6 800.8L1494.6 794.1L1497.6 787.3L1500.6 780.6L1503.7 774.1L1506.7 767.9L1509.7 762.0L1512.7 756.6L1515.7 751.7L1518.7 747.4L1521.8 743.7L1524.8 740.6L1527.8 738.0L1530.8 736.0L1533.8 734.5L1536.8 733.6L1539.8 733.2L1542.9 733.3L1545.9 733.7L1548.9 734.5L1551.9 735.6L1554.9 737.0L1557.9 738.7L1560.9 740.5L1564.0 742.5L1567.0 744.5L1570.0 746.6L1573.0 748.8L1576.0 750.9L1579.0 753.0L1582.0 755.2L1585.1 757.5L1588.1 760.0L1591.1 762.7L1594.1 765.6L1597.1 768.9L1600.1 772.6L1603.1 776.7L1606.2 781.2L1609.2 786.2L1612.2 791.7L1615.2 797.5L1618.2 803.5L1621.2 809.6L1624.2 815.7L1627.3 821.7L1630.3 827.5L1633.3 833.0L1636.3 838.3L1639.3 843.2L1642.3 847.9L1645.4 852.3L1648.4 856.3L1651.4 860.1L1654.4 863.5L1657.4 866.6L1660.4 869.3L1663.4 871.7L1666.5 873.8L1669.5 875.5L1672.5 876.8L1675.5 877.8L1678.5 878.5L1681.5 879.0L1684.5 879.3L1687.6 879.6L1690.6 880.0L1693.6 880.6L1696.6 881.3L1699.6 882.3L1702.6 883.5L1705.6 884.8L1708.7 886.3L1711.7 888.0L1714.7 889.8L1717.7 891.6L1720.7 893.6L1723.7 895.5L1726.8 897.6L1729.8 899.7L1732.8 901.8L1735.8 903.9L1738.8 906.0L1741.8 908.1L1744.8 910.2L1747.9 912.3L1750.9 914.4L1753.9 916.4L1756.9 918.3L1759.9 920.3L1762.9 922.1L1765.9 923.8L1769.0 925.5L1772.0 927.1L1775.0 928.5L1778.0 929.9" fill="none" stroke="#000" stroke-width="2.35" stroke-linejoin="round"/><text x="1572.6" y="691.8" text-anchor="middle" font-size="19.7" letter-spacing="0.36" fill="#1a1a1a">dcd A.1.1.1.2</text></g>
<g><path d="M1887.90 704.0V967.9M2000.50 704.0V967.9M2113.10 704.0V967.9M2225.70 704.0V967.9M1811.3 921.78H2262.9M1811.3 853.36H2262.9M1811.3 784.92H2262.9M1811.3 716.50H2262.9" stroke="#ebebeb" stroke-width="1.17" fill="none"/><path d="M1831.60 704.0V967.9M1944.20 704.0V967.9M2056.80 704.0V967.9M2169.40 704.0V967.9M1811.3 956.00H2262.9M1811.3 887.57H2262.9M1811.3 819.14H2262.9M1811.3 750.71H2262.9" stroke="#ebebeb" stroke-width="2.35" fill="none"/><path d="M1832.0 861.7L1835.0 856.6L1838.0 851.9L1841.0 847.4L1844.0 843.3L1847.0 839.5L1850.0 836.0L1853.0 832.7L1856.0 829.7L1859.0 826.9L1862.0 824.3L1865.0 821.9L1868.0 819.7L1871.0 817.7L1874.0 815.8L1877.0 814.0L1880.0 812.4L1883.0 810.8L1886.0 809.4L1889.0 808.1L1892.0 806.8L1895.0 805.7L1898.0 804.6L1901.0 803.7L1904.0 802.9L1907.0 802.1L1910.0 801.5L1913.0 801.0L1916.0 800.6L1919.0 800.2L1922.0 800.0L1925.0 799.9L1928.0 799.9L1931.0 799.9L1934.0 800.1L1937.0 800.4L1940.0 800.7L1943.0 801.2L1946.0 801.7L1949.0 802.3L1952.0 803.0L1955.0 803.7L1958.0 804.6L1961.0 805.5L1964.0 806.4L1967.0 807.5L1970.0 808.6L1973.0 809.7L1976.0 810.9L1979.0 812.1L1982.0 813.4L1985.0 814.6L1988.0 815.8L1991.0 817.0L1994.0 818.2L1997.0 819.3L2000.0 820.4L2003.0 821.3L2006.0 822.2L2009.0 823.0L2012.0 823.8L2015.0 824.4L2018.0 825.0L2021.0 825.6L2024.0 826.2L2027.0 826.7L2030.0 827.2L2033.0 827.8L2036.0 828.4L2039.0 829.0L2042.0 829.6L2045.0 830.4L2048.0 831.2L2051.0 832.0L2054.0 833.0L2057.0 834.0L2060.0 835.1L2063.0 836.3L2066.0 837.5L2069.0 838.9L2072.0 840.3L2075.0 841.9L2078.0 843.5L2081.0 845.1L2084.0 846.7L2087.0 848.4L2090.0 850.0L2093.0 851.7L2096.0 853.3L2099.0 854.8L2102.0 856.2L2105.0 857.6L2108.0 859.0L2111.0 860.2L2114.0 861.5L2117.0 862.6L2120.0 863.8L2123.0 864.9L2126.0 866.0L2129.0 867.0L2132.0 868.0L2135.0 869.0L2138.0 870.0L2141.0 870.9L2144.0 871.9L2147.0 872.9L2150.0 873.8L2153.0 874.8L2156.0 875.7L2159.0 876.7L2162.0 877.7L2165.0 878.7L2168.0 879.8L2171.0 880.9L2174.0 882.0L2177.0 883.1L2180.0 884.3L2183.0 885.6L2186.0 886.9L2189.0 888.3L2192.0 889.7L2195.0 891.2L2198.0 892.7L2201.0 894.3L2204.0 896.1L2207.0 897.8L2210.0 899.7L2213.0 901.6L2216.0 903.6L2219.0 905.6L2222.0 907.6L2225.0 909.7L2228.0 911.7L2231.0 913.7L2234.0 915.7L2237.0 917.6L2240.0 919.5L2243.0 921.3L2243.0 956.0L1832.0 956.0Z" fill="#3a044f" fill-opacity="0.7" stroke="none"/><path d="M1832.0 861.7L1835.0 856.6L1838.0 851.9L1841.0 847.4L1844.0 843.3L1847.0 839.5L1850.0 836.0L1853.0 832.7L1856.0 829.7L1859.0 826.9L1862.0 824.3L1865.0 821.9L1868.0 819.7L1871.0 817.7L1874.0 815.8L1877.0 814.0L1880.0 812.4L1883.0 810.8L1886.0 809.4L1889.0 808.1L1892.0 806.8L1895.0 805.7L1898.0 804.6L1901.0 803.7L1904.0 802.9L1907.0 802.1L1910.0 801.5L1913.0 801.0L1916.0 800.6L1919.0 800.2L1922.0 800.0L1925.0 799.9L1928.0 799.9L1931.0 799.9L1934.0 800.1L1937.0 800.4L1940.0 800.7L1943.0 801.2L1946.0 801.7L1949.0 802.3L1952.0 803.0L1955.0 803.7L1958.0 804.6L1961.0 805.5L1964.0 806.4L1967.0 807.5L1970.0 808.6L1973.0 809.7L1976.0 810.9L1979.0 812.1L1982.0 813.4L1985.0 814.6L1988.0 815.8L1991.0 817.0L1994.0 818.2L1997.0 819.3L2000.0 820.4L2003.0 821.3L2006.0 822.2L2009.0 823.0L2012.0 823.8L2015.0 824.4L2018.0 825.0L2021.0 825.6L2024.0 826.2L2027.0 826.7L2030.0 827.2L2033.0 827.8L2036.0 828.4L2039.0 829.0L2042.0 829.6L2045.0 830.4L2048.0 831.2L2051.0 832.0L2054.0 833.0L2057.0 834.0L2060.0 835.1L2063.0 836.3L2066.0 837.5L2069.0 838.9L2072.0 840.3L2075.0 841.9L2078.0 843.5L2081.0 845.1L2084.0 846.7L2087.0 848.4L2090.0 850.0L2093.0 851.7L2096.0 853.3L2099.0 854.8L2102.0 856.2L2105.0 857.6L2108.0 859.0L2111.0 860.2L2114.0 861.5L2117.0 862.6L2120.0 863.8L2123.0 864.9L2126.0 866.0L2129.0 867.0L2132.0 868.0L2135.0 869.0L2138.0 870.0L2141.0 870.9L2144.0 871.9L2147.0 872.9L2150.0 873.8L2153.0 874.8L2156.0 875.7L2159.0 876.7L2162.0 877.7L2165.0 878.7L2168.0 879.8L2171.0 880.9L2174.0 882.0L2177.0 883.1L2180.0 884.3L2183.0 885.6L2186.0 886.9L2189.0 888.3L2192.0 889.7L2195.0 891.2L2198.0 892.7L2201.0 894.3L2204.0 896.1L2207.0 897.8L2210.0 899.7L2213.0 901.6L2216.0 903.6L2219.0 905.6L2222.0 907.6L2225.0 909.7L2228.0 911.7L2231.0 913.7L2234.0 915.7L2237.0 917.6L2240.0 919.5L2243.0 921.3" fill="none" stroke="#000" stroke-width="2.35" stroke-linejoin="round"/><path d="M1832.0 900.1L1835.0 895.3L1838.0 890.5L1841.0 885.8L1844.0 881.1L1847.0 876.5L1850.0 872.0L1853.0 867.5L1856.0 863.1L1859.0 858.9L1862.0 854.7L1865.0 850.7L1868.0 846.8L1871.0 843.0L1874.0 839.4L1877.0 835.9L1880.0 832.7L1883.0 829.6L1886.0 826.7L1889.0 824.0L1892.0 821.5L1895.0 819.2L1898.0 817.1L1901.0 815.2L1904.0 813.5L1907.0 811.9L1910.0 810.6L1913.0 809.4L1916.0 808.4L1919.0 807.5L1922.0 806.8L1925.0 806.2L1928.0 805.8L1931.0 805.6L1934.0 805.4L1937.0 805.4L1940.0 805.6L1943.0 805.8L1946.0 806.2L1949.0 806.6L1952.0 807.1L1955.0 807.7L1958.0 808.4L1961.0 809.1L1964.0 809.9L1967.0 810.6L1970.0 811.4L1973.0 812.2L1976.0 813.0L1979.0 813.8L1982.0 814.5L1985.0 815.2L1988.0 815.9L1991.0 816.5L1994.0 817.1L1997.0 817.7L2000.0 818.2L2003.0 818.7L2006.0 819.2L2009.0 819.6L2012.0 819.9L2015.0 820.2L2018.0 820.4L2021.0 820.6L2024.0 820.7L2027.0 820.8L2030.0 820.8L2033.0 820.7L2036.0 820.6L2039.0 820.4L2042.0 820.2L2045.0 819.9L2048.0 819.6L2051.0 819.2L2054.0 818.9L2057.0 818.5L2060.0 818.1L2063.0 817.8L2066.0 817.4L2069.0 817.1L2072.0 816.7L2075.0 816.4L2078.0 816.2L2081.0 815.9L2084.0 815.8L2087.0 815.6L2090.0 815.6L2093.0 815.6L2096.0 815.7L2099.0 815.8L2102.0 816.1L2105.0 816.5L2108.0 816.9L2111.0 817.5L2114.0 818.2L2117.0 819.0L2120.0 820.0L2123.0 821.1L2126.0 822.3L2129.0 823.7L2132.0 825.2L2135.0 826.9L2138.0 828.8L2141.0 830.8L2144.0 832.9L2147.0 835.2L2150.0 837.6L2153.0 840.0L2156.0 842.6L2159.0 845.3L2162.0 848.0L2165.0 850.8L2168.0 853.7L2171.0 856.6L2174.0 859.6L2177.0 862.5L2180.0 865.6L2183.0 868.6L2186.0 871.7L2189.0 874.7L2192.0 877.8L2195.0 880.8L2198.0 883.8L2201.0 886.7L2204.0 889.6L2207.0 892.5L2210.0 895.3L2213.0 898.0L2216.0 900.7L2219.0 903.2L2222.0 905.7L2225.0 908.0L2228.0 910.2L2231.0 912.3L2234.0 914.3L2237.0 916.1L2240.0 917.8L2243.0 919.3L2243.0 956.0L1832.0 956.0Z" fill="#3b8d8b" fill-opacity="0.7" stroke="none"/><path d="M1832.0 900.1L1835.0 895.3L1838.0 890.5L1841.0 885.8L1844.0 881.1L1847.0 876.5L1850.0 872.0L1853.0 867.5L1856.0 863.1L1859.0 858.9L1862.0 854.7L1865.0 850.7L1868.0 846.8L1871.0 843.0L1874.0 839.4L1877.0 835.9L1880.0 832.7L1883.0 829.6L1886.0 826.7L1889.0 824.0L1892.0 821.5L1895.0 819.2L1898.0 817.1L1901.0 815.2L1904.0 813.5L1907.0 811.9L1910.0 810.6L1913.0 809.4L1916.0 808.4L1919.0 807.5L1922.0 806.8L1925.0 806.2L1928.0 805.8L1931.0 805.6L1934.0 805.4L1937.0 805.4L1940.0 805.6L1943.0 805.8L1946.0 806.2L1949.0 806.6L1952.0 807.1L1955.0 807.7L1958.0 808.4L1961.0 809.1L1964.0 809.9L1967.0 810.6L1970.0 811.4L1973.0 812.2L1976.0 813.0L1979.0 813.8L1982.0 814.5L1985.0 815.2L1988.0 815.9L1991.0 816.5L1994.0 817.1L1997.0 817.7L2000.0 818.2L2003.0 818.7L2006.0 819.2L2009.0 819.6L2012.0 819.9L2015.0 820.2L2018.0 820.4L2021.0 820.6L2024.0 820.7L2027.0 820.8L2030.0 820.8L2033.0 820.7L2036.0 820.6L2039.0 820.4L2042.0 820.2L2045.0 819.9L2048.0 819.6L2051.0 819.2L2054.0 818.9L2057.0 818.5L2060.0 818.1L2063.0 817.8L2066.0 817.4L2069.0 817.1L2072.0 816.7L2075.0 816.4L2078.0 816.2L2081.0 815.9L2084.0 815.8L2087.0 815.6L2090.0 815.6L2093.0 815.6L2096.0 815.7L2099.0 815.8L2102.0 816.1L2105.0 816.5L2108.0 816.9L2111.0 817.5L2114.0 818.2L2117.0 819.0L2120.0 820.0L2123.0 821.1L2126.0 822.3L2129.0 823.7L2132.0 825.2L2135.0 826.9L2138.0 828.8L2141.0 830.8L2144.0 832.9L2147.0 835.2L2150.0 837.6L2153.0 840.0L2156.0 842.6L2159.0 845.3L2162.0 848.0L2165.0 850.8L2168.0 853.7L2171.0 856.6L2174.0 859.6L2177.0 862.5L2180.0 865.6L2183.0 868.6L2186.0 871.7L2189.0 874.7L2192.0 877.8L2195.0 880.8L2198.0 883.8L2201.0 886.7L2204.0 889.6L2207.0 892.5L2210.0 895.3L2213.0 898.0L2216.0 900.7L2219.0 903.2L2222.0 905.7L2225.0 908.0L2228.0 910.2L2231.0 912.3L2234.0 914.3L2237.0 916.1L2240.0 917.8L2243.0 919.3" fill="none" stroke="#000" stroke-width="2.35" stroke-linejoin="round"/><path d="M1832.0 854.8L1835.0 850.1L1838.0 845.7L1841.0 841.6L1844.0 837.7L1847.0 834.1L1850.0 830.8L1853.0 827.7L1856.0 824.9L1859.0 822.3L1862.0 820.0L1865.0 817.9L1868.0 816.1L1871.0 814.5L1874.0 813.1L1877.0 812.0L1880.0 811.1L1883.0 810.5L1886.0 810.0L1889.0 809.8L1892.0 809.7L1895.0 809.8L1898.0 810.0L1901.0 810.4L1904.0 810.9L1907.0 811.4L1910.0 812.1L1913.0 812.8L1916.0 813.6L1919.0 814.3L1922.0 815.1L1925.0 815.9L1928.0 816.7L1931.0 817.4L1934.0 818.1L1937.0 818.7L1940.0 819.2L1943.0 819.6L1946.0 819.9L1949.0 820.1L1952.0 820.2L1955.0 820.2L1958.0 820.0L1961.0 819.7L1964.0 819.3L1967.0 818.7L1970.0 818.0L1973.0 817.2L1976.0 816.4L1979.0 815.4L1982.0 814.5L1985.0 813.5L1988.0 812.4L1991.0 811.4L1994.0 810.4L1997.0 809.5L2000.0 808.6L2003.0 807.8L2006.0 807.1L2009.0 806.5L2012.0 806.0L2015.0 805.7L2018.0 805.6L2021.0 805.7L2024.0 805.9L2027.0 806.4L2030.0 807.1L2033.0 808.0L2036.0 809.1L2039.0 810.3L2042.0 811.7L2045.0 813.2L2048.0 814.9L2051.0 816.6L2054.0 818.5L2057.0 820.4L2060.0 822.4L2063.0 824.4L2066.0 826.5L2069.0 828.6L2072.0 830.7L2075.0 832.9L2078.0 835.0L2081.0 837.0L2084.0 839.1L2087.0 841.1L2090.0 843.1L2093.0 845.1L2096.0 847.0L2099.0 848.9L2102.0 850.8L2105.0 852.6L2108.0 854.4L2111.0 856.2L2114.0 857.9L2117.0 859.6L2120.0 861.2L2123.0 862.8L2126.0 864.3L2129.0 865.8L2132.0 867.3L2135.0 868.7L2138.0 870.1L2141.0 871.5L2144.0 872.9L2147.0 874.3L2150.0 875.6L2153.0 877.0L2156.0 878.4L2159.0 879.7L2162.0 881.1L2165.0 882.6L2168.0 884.0L2171.0 885.5L2174.0 887.0L2177.0 888.5L2180.0 890.1L2183.0 891.7L2186.0 893.4L2189.0 895.1L2192.0 896.9L2195.0 898.8L2198.0 900.7L2201.0 902.7L2204.0 904.6L2207.0 906.7L2210.0 908.7L2213.0 910.7L2216.0 912.8L2219.0 914.8L2222.0 916.9L2225.0 918.9L2228.0 920.9L2231.0 922.8L2234.0 924.7L2237.0 926.6L2240.0 928.4L2243.0 930.1L2243.0 956.0L1832.0 956.0Z" fill="#f8e845" fill-opacity="0.7" stroke="none"/><path d="M1832.0 854.8L1835.0 850.1L1838.0 845.7L1841.0 841.6L1844.0 837.7L1847.0 834.1L1850.0 830.8L1853.0 827.7L1856.0 824.9L1859.0 822.3L1862.0 820.0L1865.0 817.9L1868.0 816.1L1871.0 814.5L1874.0 813.1L1877.0 812.0L1880.0 811.1L1883.0 810.5L1886.0 810.0L1889.0 809.8L1892.0 809.7L1895.0 809.8L1898.0 810.0L1901.0 810.4L1904.0 810.9L1907.0 811.4L1910.0 812.1L1913.0 812.8L1916.0 813.6L1919.0 814.3L1922.0 815.1L1925.0 815.9L1928.0 816.7L1931.0 817.4L1934.0 818.1L1937.0 818.7L1940.0 819.2L1943.0 819.6L1946.0 819.9L1949.0 820.1L1952.0 820.2L1955.0 820.2L1958.0 820.0L1961.0 819.7L1964.0 819.3L1967.0 818.7L1970.0 818.0L1973.0 817.2L1976.0 816.4L1979.0 815.4L1982.0 814.5L1985.0 813.5L1988.0 812.4L1991.0 811.4L1994.0 810.4L1997.0 809.5L2000.0 808.6L2003.0 807.8L2006.0 807.1L2009.0 806.5L2012.0 806.0L2015.0 805.7L2018.0 805.6L2021.0 805.7L2024.0 805.9L2027.0 806.4L2030.0 807.1L2033.0 808.0L2036.0 809.1L2039.0 810.3L2042.0 811.7L2045.0 813.2L2048.0 814.9L2051.0 816.6L2054.0 818.5L2057.0 820.4L2060.0 822.4L2063.0 824.4L2066.0 826.5L2069.0 828.6L2072.0 830.7L2075.0 832.9L2078.0 835.0L2081.0 837.0L2084.0 839.1L2087.0 841.1L2090.0 843.1L2093.0 845.1L2096.0 847.0L2099.0 848.9L2102.0 850.8L2105.0 852.6L2108.0 854.4L2111.0 856.2L2114.0 857.9L2117.0 859.6L2120.0 861.2L2123.0 862.8L2126.0 864.3L2129.0 865.8L2132.0 867.3L2135.0 868.7L2138.0 870.1L2141.0 871.5L2144.0 872.9L2147.0 874.3L2150.0 875.6L2153.0 877.0L2156.0 878.4L2159.0 879.7L2162.0 881.1L2165.0 882.6L2168.0 884.0L2171.0 885.5L2174.0 887.0L2177.0 888.5L2180.0 890.1L2183.0 891.7L2186.0 893.4L2189.0 895.1L2192.0 896.9L2195.0 898.8L2198.0 900.7L2201.0 902.7L2204.0 904.6L2207.0 906.7L2210.0 908.7L2213.0 910.7L2216.0 912.8L2219.0 914.8L2222.0 916.9L2225.0 918.9L2228.0 920.9L2231.0 922.8L2234.0 924.7L2237.0 926.6L2240.0 928.4L2243.0 930.1" fill="none" stroke="#000" stroke-width="2.35" stroke-linejoin="round"/><text x="2037.1" y="691.8" text-anchor="middle" font-size="19.7" letter-spacing="0.36" fill="#1a1a1a">dcd B.1.1.1.1</text></g>
<g><path d="M2352.40 704.0V967.9M2465.00 704.0V967.9M2577.60 704.0V967.9M2690.20 704.0V967.9M2275.8 921.78H2727.4M2275.8 853.36H2727.4M2275.8 784.92H2727.4M2275.8 716.50H2727.4" stroke="#ebebeb" stroke-width="1.17" fill="none"/><path d="M2296.10 704.0V967.9M2408.70 704.0V967.9M2521.30 704.0V967.9M2633.90 704.0V967.9M2275.8 956.00H2727.4M2275.8 887.57H2727.4M2275.8 819.14H2727.4M2275.8 750.71H2727.4" stroke="#ebebeb" stroke-width="2.35" fill="none"/><path d="M2297.0 869.1L2300.0 862.8L2303.0 856.8L2306.0 851.2L2309.1 845.9L2312.1 840.9L2315.1 836.2L2318.1 831.8L2321.1 827.7L2324.1 823.8L2327.1 820.3L2330.2 817.0L2333.2 814.0L2336.2 811.2L2339.2 808.7L2342.2 806.4L2345.2 804.3L2348.2 802.5L2351.3 800.9L2354.3 799.4L2357.3 798.2L2360.3 797.2L2363.3 796.4L2366.3 795.8L2369.4 795.3L2372.4 795.0L2375.4 794.9L2378.4 794.9L2381.4 795.0L2384.4 795.3L2387.4 795.8L2390.5 796.3L2393.5 797.0L2396.5 797.7L2399.5 798.5L2402.5 799.4L2405.5 800.3L2408.5 801.2L2411.6 802.2L2414.6 803.1L2417.6 803.9L2420.6 804.8L2423.6 805.6L2426.6 806.5L2429.6 807.4L2432.7 808.3L2435.7 809.3L2438.7 810.3L2441.7 811.5L2444.7 812.7L2447.7 814.1L2450.8 815.5L2453.8 817.0L2456.8 818.6L2459.8 820.2L2462.8 821.9L2465.8 823.6L2468.8 825.3L2471.9 827.0L2474.9 828.7L2477.9 830.3L2480.9 831.9L2483.9 833.5L2486.9 834.9L2489.9 836.3L2493.0 837.6L2496.0 838.8L2499.0 840.0L2502.0 841.1L2505.0 842.1L2508.0 843.2L2511.0 844.1L2514.1 845.1L2517.1 846.0L2520.1 846.9L2523.1 847.7L2526.1 848.6L2529.1 849.4L2532.1 850.3L2535.2 851.1L2538.2 851.9L2541.2 852.8L2544.2 853.7L2547.2 854.6L2550.2 855.5L2553.2 856.5L2556.3 857.4L2559.3 858.4L2562.3 859.3L2565.3 860.3L2568.3 861.3L2571.3 862.2L2574.4 863.1L2577.4 864.1L2580.4 864.9L2583.4 865.8L2586.4 866.7L2589.4 867.5L2592.4 868.2L2595.5 869.0L2598.5 869.7L2601.5 870.3L2604.5 870.9L2607.5 871.4L2610.5 871.9L2613.5 872.3L2616.6 872.8L2619.6 873.2L2622.6 873.6L2625.6 874.0L2628.6 874.4L2631.6 874.8L2634.6 875.3L2637.7 875.8L2640.7 876.3L2643.7 876.9L2646.7 877.5L2649.7 878.2L2652.7 879.0L2655.8 879.8L2658.8 880.8L2661.8 881.8L2664.8 883.0L2667.8 884.3L2670.8 885.6L2673.8 887.1L2676.9 888.6L2679.9 890.1L2682.9 891.7L2685.9 893.4L2688.9 895.1L2691.9 896.8L2694.9 898.5L2698.0 900.2L2701.0 901.9L2704.0 903.6L2707.0 905.3L2707.0 956.0L2297.0 956.0Z" fill="#3a044f" fill-opacity="0.7" stroke="none"/><path d="M2297.0 869.1L2300.0 862.8L2303.0 856.8L2306.0 851.2L2309.1 845.9L2312.1 840.9L2315.1 836.2L2318.1 831.8L2321.1 827.7L2324.1 823.8L2327.1 820.3L2330.2 817.0L2333.2 814.0L2336.2 811.2L2339.2 808.7L2342.2 806.4L2345.2 804.3L2348.2 802.5L2351.3 800.9L2354.3 799.4L2357.3 798.2L2360.3 797.2L2363.3 796.4L2366.3 795.8L2369.4 795.3L2372.4 795.0L2375.4 794.9L2378.4 794.9L2381.4 795.0L2384.4 795.3L2387.4 795.8L2390.5 796.3L2393.5 797.0L2396.5 797.7L2399.5 798.5L2402.5 799.4L2405.5 800.3L2408.5 801.2L2411.6 802.2L2414.6 803.1L2417.6 803.9L2420.6 804.8L2423.6 805.6L2426.6 806.5L2429.6 807.4L2432.7 808.3L2435.7 809.3L2438.7 810.3L2441.7 811.5L2444.7 812.7L2447.7 814.1L2450.8 815.5L2453.8 817.0L2456.8 818.6L2459.8 820.2L2462.8 821.9L2465.8 823.6L2468.8 825.3L2471.9 827.0L2474.9 828.7L2477.9 830.3L2480.9 831.9L2483.9 833.5L2486.9 834.9L2489.9 836.3L2493.0 837.6L2496.0 838.8L2499.0 840.0L2502.0 841.1L2505.0 842.1L2508.0 843.2L2511.0 844.1L2514.1 845.1L2517.1 846.0L2520.1 846.9L2523.1 847.7L2526.1 848.6L2529.1 849.4L2532.1 850.3L2535.2 851.1L2538.2 851.9L2541.2 852.8L2544.2 853.7L2547.2 854.6L2550.2 855.5L2553.2 856.5L2556.3 857.4L2559.3 858.4L2562.3 859.3L2565.3 860.3L2568.3 861.3L2571.3 862.2L2574.4 863.1L2577.4 864.1L2580.4 864.9L2583.4 865.8L2586.4 866.7L2589.4 867.5L2592.4 868.2L2595.5 869.0L2598.5 869.7L2601.5 870.3L2604.5 870.9L2607.5 871.4L2610.5 871.9L2613.5 872.3L2616.6 872.8L2619.6 873.2L2622.6 873.6L2625.6 874.0L2628.6 874.4L2631.6 874.8L2634.6 875.3L2637.7 875.8L2640.7 876.3L2643.7 876.9L2646.7 877.5L2649.7 878.2L2652.7 879.0L2655.8 879.8L2658.8 880.8L2661.8 881.8L2664.8 883.0L2667.8 884.3L2670.8 885.6L2673.8 887.1L2676.9 888.6L2679.9 890.1L2682.9 891.7L2685.9 893.4L2688.9 895.1L2691.9 896.8L2694.9 898.5L2698.0 900.2L2701.0 901.9L2704.0 903.6L2707.0 905.3" fill="none" stroke="#000" stroke-width="2.35" stroke-linejoin="round"/><path d="M2297.0 871.1L2300.0 865.4L2303.0 860.1L2306.0 855.2L2309.1 850.6L2312.1 846.3L2315.1 842.4L2318.1 838.7L2321.1 835.3L2324.1 832.2L2327.1 829.4L2330.2 826.9L2333.2 824.6L2336.2 822.5L2339.2 820.7L2342.2 819.0L2345.2 817.6L2348.2 816.4L2351.3 815.3L2354.3 814.4L2357.3 813.7L2360.3 813.1L2363.3 812.6L2366.3 812.2L2369.4 811.9L2372.4 811.7L2375.4 811.5L2378.4 811.4L2381.4 811.3L2384.4 811.2L2387.4 811.2L2390.5 811.1L2393.5 811.0L2396.5 810.9L2399.5 810.7L2402.5 810.6L2405.5 810.4L2408.5 810.2L2411.6 810.0L2414.6 809.7L2417.6 809.5L2420.6 809.3L2423.6 809.0L2426.6 808.8L2429.6 808.5L2432.7 808.2L2435.7 807.9L2438.7 807.6L2441.7 807.3L2444.7 806.9L2447.7 806.4L2450.8 806.0L2453.8 805.5L2456.8 805.0L2459.8 804.5L2462.8 803.9L2465.8 803.4L2468.8 802.9L2471.9 802.4L2474.9 801.9L2477.9 801.5L2480.9 801.1L2483.9 800.7L2486.9 800.4L2489.9 800.2L2493.0 800.0L2496.0 799.9L2499.0 799.9L2502.0 799.9L2505.0 800.1L2508.0 800.4L2511.0 800.9L2514.1 801.5L2517.1 802.2L2520.1 803.1L2523.1 804.1L2526.1 805.3L2529.1 806.6L2532.1 808.1L2535.2 809.6L2538.2 811.3L2541.2 813.0L2544.2 814.9L2547.2 816.8L2550.2 818.8L2553.2 820.9L2556.3 823.0L2559.3 825.2L2562.3 827.5L2565.3 829.8L2568.3 832.2L2571.3 834.7L2574.4 837.1L2577.4 839.7L2580.4 842.2L2583.4 844.8L2586.4 847.4L2589.4 850.1L2592.4 852.8L2595.5 855.5L2598.5 858.2L2601.5 860.9L2604.5 863.6L2607.5 866.3L2610.5 869.0L2613.5 871.7L2616.6 874.4L2619.6 877.1L2622.6 879.8L2625.6 882.4L2628.6 885.1L2631.6 887.7L2634.6 890.3L2637.7 892.8L2640.7 895.3L2643.7 897.8L2646.7 900.2L2649.7 902.6L2652.7 904.9L2655.8 907.2L2658.8 909.4L2661.8 911.5L2664.8 913.6L2667.8 915.6L2670.8 917.5L2673.8 919.4L2676.9 921.2L2679.9 922.9L2682.9 924.5L2685.9 926.0L2688.9 927.5L2691.9 928.8L2694.9 930.0L2698.0 931.2L2701.0 932.2L2704.0 933.1L2707.0 933.9L2707.0 956.0L2297.0 956.0Z" fill="#3b8d8b" fill-opacity="0.7" stroke="none"/><path d="M2297.0 871.1L2300.0 865.4L2303.0 860.1L2306.0 855.2L2309.1 850.6L2312.1 846.3L2315.1 842.4L2318.1 838.7L2321.1 835.3L2324.1 832.2L2327.1 829.4L2330.2 826.9L2333.2 824.6L2336.2 822.5L2339.2 820.7L2342.2 819.0L2345.2 817.6L2348.2 816.4L2351.3 815.3L2354.3 814.4L2357.3 813.7L2360.3 813.1L2363.3 812.6L2366.3 812.2L2369.4 811.9L2372.4 811.7L2375.4 811.5L2378.4 811.4L2381.4 811.3L2384.4 811.2L2387.4 811.2L2390.5 811.1L2393.5 811.0L2396.5 810.9L2399.5 810.7L2402.5 810.6L2405.5 810.4L2408.5 810.2L2411.6 810.0L2414.6 809.7L2417.6 809.5L2420.6 809.3L2423.6 809.0L2426.6 808.8L2429.6 808.5L2432.7 808.2L2435.7 807.9L2438.7 807.6L2441.7 807.3L2444.7 806.9L2447.7 806.4L2450.8 806.0L2453.8 805.5L2456.8 805.0L2459.8 804.5L2462.8 803.9L2465.8 803.4L2468.8 802.9L2471.9 802.4L2474.9 801.9L2477.9 801.5L2480.9 801.1L2483.9 800.7L2486.9 800.4L2489.9 800.2L2493.0 800.0L2496.0 799.9L2499.0 799.9L2502.0 799.9L2505.0 800.1L2508.0 800.4L2511.0 800.9L2514.1 801.5L2517.1 802.2L2520.1 803.1L2523.1 804.1L2526.1 805.3L2529.1 806.6L2532.1 808.1L2535.2 809.6L2538.2 811.3L2541.2 813.0L2544.2 814.9L2547.2 816.8L2550.2 818.8L2553.2 820.9L2556.3 823.0L2559.3 825.2L2562.3 827.5L2565.3 829.8L2568.3 832.2L2571.3 834.7L2574.4 837.1L2577.4 839.7L2580.4 842.2L2583.4 844.8L2586.4 847.4L2589.4 850.1L2592.4 852.8L2595.5 855.5L2598.5 858.2L2601.5 860.9L2604.5 863.6L2607.5 866.3L2610.5 869.0L2613.5 871.7L2616.6 874.4L2619.6 877.1L2622.6 879.8L2625.6 882.4L2628.6 885.1L2631.6 887.7L2634.6 890.3L2637.7 892.8L2640.7 895.3L2643.7 897.8L2646.7 900.2L2649.7 902.6L2652.7 904.9L2655.8 907.2L2658.8 909.4L2661.8 911.5L2664.8 913.6L2667.8 915.6L2670.8 917.5L2673.8 919.4L2676.9 921.2L2679.9 922.9L2682.9 924.5L2685.9 926.0L2688.9 927.5L2691.9 928.8L2694.9 930.0L2698.0 931.2L2701.0 932.2L2704.0 933.1L2707.0 933.9" fill="none" stroke="#000" stroke-width="2.35" stroke-linejoin="round"/><path d="M2297.0 906.1L2300.0 902.9L2303.0 899.8L2306.0 896.6L2309.1 893.5L2312.1 890.4L2315.1 887.3L2318.1 884.2L2321.1 881.2L2324.1 878.2L2327.1 875.2L2330.2 872.2L2333.2 869.3L2336.2 866.4L2339.2 863.6L2342.2 860.8L2345.2 858.0L2348.2 855.2L2351.3 852.5L2354.3 849.9L2357.3 847.2L2360.3 844.7L2363.3 842.1L2366.3 839.6L2369.4 837.2L2372.4 834.8L2375.4 832.5L2378.4 830.2L2381.4 828.0L2384.4 825.9L2387.4 823.9L2390.5 821.9L2393.5 820.0L2396.5 818.3L2399.5 816.6L2402.5 815.1L2405.5 813.7L2408.5 812.4L2411.6 811.3L2414.6 810.2L2417.6 809.4L2420.6 808.7L2423.6 808.1L2426.6 807.7L2429.6 807.5L2432.7 807.4L2435.7 807.5L2438.7 807.9L2441.7 808.3L2444.7 808.9L2447.7 809.7L2450.8 810.5L2453.8 811.5L2456.8 812.6L2459.8 813.8L2462.8 815.0L2465.8 816.3L2468.8 817.7L2471.9 819.1L2474.9 820.5L2477.9 821.9L2480.9 823.4L2483.9 824.8L2486.9 826.2L2489.9 827.6L2493.0 828.9L2496.0 830.2L2499.0 831.4L2502.0 832.6L2505.0 833.7L2508.0 834.7L2511.0 835.6L2514.1 836.5L2517.1 837.2L2520.1 837.8L2523.1 838.3L2526.1 838.6L2529.1 838.8L2532.1 838.9L2535.2 838.8L2538.2 838.7L2541.2 838.4L2544.2 838.0L2547.2 837.5L2550.2 836.9L2553.2 836.2L2556.3 835.5L2559.3 834.8L2562.3 834.0L2565.3 833.2L2568.3 832.3L2571.3 831.5L2574.4 830.7L2577.4 829.9L2580.4 829.1L2583.4 828.3L2586.4 827.6L2589.4 827.0L2592.4 826.4L2595.5 826.0L2598.5 825.6L2601.5 825.3L2604.5 825.1L2607.5 825.1L2610.5 825.2L2613.5 825.4L2616.6 825.8L2619.6 826.4L2622.6 827.1L2625.6 828.1L2628.6 829.2L2631.6 830.6L2634.6 832.1L2637.7 833.8L2640.7 835.8L2643.7 837.9L2646.7 840.2L2649.7 842.7L2652.7 845.4L2655.8 848.3L2658.8 851.3L2661.8 854.4L2664.8 857.6L2667.8 860.8L2670.8 864.2L2673.8 867.5L2676.9 870.9L2679.9 874.3L2682.9 877.6L2685.9 880.9L2688.9 884.2L2691.9 887.3L2694.9 890.4L2698.0 893.3L2701.0 896.1L2704.0 898.8L2707.0 901.2L2707.0 956.0L2297.0 956.0Z" fill="#f8e845" fill-opacity="0.7" stroke="none"/><path d="M2297.0 906.1L2300.0 902.9L2303.0 899.8L2306.0 896.6L2309.1 893.5L2312.1 890.4L2315.1 887.3L2318.1 884.2L2321.1 881.2L2324.1 878.2L2327.1 875.2L2330.2 872.2L2333.2 869.3L2336.2 866.4L2339.2 863.6L2342.2 860.8L2345.2 858.0L2348.2 855.2L2351.3 852.5L2354.3 849.9L2357.3 847.2L2360.3 844.7L2363.3 842.1L2366.3 839.6L2369.4 837.2L2372.4 834.8L2375.4 832.5L2378.4 830.2L2381.4 828.0L2384.4 825.9L2387.4 823.9L2390.5 821.9L2393.5 820.0L2396.5 818.3L2399.5 816.6L2402.5 815.1L2405.5 813.7L2408.5 812.4L2411.6 811.3L2414.6 810.2L2417.6 809.4L2420.6 808.7L2423.6 808.1L2426.6 807.7L2429.6 807.5L2432.7 807.4L2435.7 807.5L2438.7 807.9L2441.7 808.3L2444.7 808.9L2447.7 809.7L2450.8 810.5L2453.8 811.5L2456.8 812.6L2459.8 813.8L2462.8 815.0L2465.8 816.3L2468.8 817.7L2471.9 819.1L2474.9 820.5L2477.9 821.9L2480.9 823.4L2483.9 824.8L2486.9 826.2L2489.9 827.6L2493.0 828.9L2496.0 830.2L2499.0 831.4L2502.0 832.6L2505.0 833.7L2508.0 834.7L2511.0 835.6L2514.1 836.5L2517.1 837.2L2520.1 837.8L2523.1 838.3L2526.1 838.6L2529.1 838.8L2532.1 838.9L2535.2 838.8L2538.2 838.7L2541.2 838.4L2544.2 838.0L2547.2 837.5L2550.2 836.9L2553.2 836.2L2556.3 835.5L2559.3 834.8L2562.3 834.0L2565.3 833.2L2568.3 832.3L2571.3 831.5L2574.4 830.7L2577.4 829.9L2580.4 829.1L2583.4 828.3L2586.4 827.6L2589.4 827.0L2592.4 826.4L2595.5 826.0L2598.5 825.6L2601.5 825.3L2604.5 825.1L2607.5 825.1L2610.5 825.2L2613.5 825.4L2616.6 825.8L2619.6 826.4L2622.6 827.1L2625.6 828.1L2628.6 829.2L2631.6 830.6L2634.6 832.1L2637.7 833.8L2640.7 835.8L2643.7 837.9L2646.7 840.2L2649.7 842.7L2652.7 845.4L2655.8 848.3L2658.8 851.3L2661.8 854.4L2664.8 857.6L2667.8 860.8L2670.8 864.2L2673.8 867.5L2676.9 870.9L2679.9 874.3L2682.9 877.6L2685.9 880.9L2688.9 884.2L2691.9 887.3L2694.9 890.4L2698.0 893.3L2701.0 896.1L2704.0 898.8L2707.0 901.2" fill="none" stroke="#000" stroke-width="2.35" stroke-linejoin="round"/><text x="2501.6" y="691.8" text-anchor="middle" font-size="19.7" letter-spacing="0.36" fill="#1a1a1a">dcd B.2.1.2.1</text></g>
<g><path d="M958.90 1020.3V1284.2M1071.50 1020.3V1284.2M1184.10 1020.3V1284.2M1296.70 1020.3V1284.2M882.3 1238.09H1333.9M882.3 1169.65H1333.9M882.3 1101.22H1333.9M882.3 1032.79H1333.9" stroke="#ebebeb" stroke-width="1.17" fill="none"/><path d="M902.60 1020.3V1284.2M1015.20 1020.3V1284.2M1127.80 1020.3V1284.2M1240.40 1020.3V1284.2M882.3 1272.30H1333.9M882.3 1203.87H1333.9M882.3 1135.44H1333.9M882.3 1067.01H1333.9" stroke="#ebebeb" stroke-width="2.35" fill="none"/><path d="M903.0 1175.1L906.0 1169.2L909.0 1163.5L912.0 1158.0L915.0 1152.8L918.0 1147.8L921.0 1143.0L924.0 1138.5L927.0 1134.3L930.0 1130.3L933.0 1126.6L936.0 1123.2L939.0 1120.1L942.0 1117.3L945.0 1114.8L948.0 1112.7L951.0 1110.8L954.0 1109.3L957.0 1108.1L960.0 1107.2L963.0 1106.5L966.0 1106.1L969.0 1106.0L972.0 1106.1L975.0 1106.4L978.0 1107.0L981.0 1107.8L984.0 1108.7L987.0 1109.9L990.0 1111.2L993.0 1112.7L996.0 1114.3L999.0 1116.0L1002.0 1117.8L1005.0 1119.8L1008.0 1121.7L1011.0 1123.8L1014.0 1125.9L1017.0 1128.0L1020.0 1130.1L1023.0 1132.2L1026.0 1134.2L1029.0 1136.3L1032.0 1138.2L1035.0 1140.1L1038.0 1141.9L1041.0 1143.6L1044.0 1145.2L1047.0 1146.7L1050.0 1148.1L1053.0 1149.4L1056.0 1150.6L1059.0 1151.7L1062.0 1152.7L1065.0 1153.6L1068.0 1154.4L1071.0 1155.1L1074.0 1155.7L1077.0 1156.2L1080.0 1156.6L1083.0 1157.0L1086.0 1157.2L1089.0 1157.4L1092.0 1157.5L1095.0 1157.6L1098.0 1157.7L1101.0 1157.7L1104.0 1157.8L1107.0 1157.9L1110.0 1158.0L1113.0 1158.2L1116.0 1158.4L1119.0 1158.7L1122.0 1159.1L1125.0 1159.6L1128.0 1160.3L1131.0 1161.0L1134.0 1161.9L1137.0 1162.9L1140.0 1163.9L1143.0 1165.0L1146.0 1166.1L1149.0 1167.3L1152.0 1168.4L1155.0 1169.5L1158.0 1170.6L1161.0 1171.7L1164.0 1172.7L1167.0 1173.6L1170.0 1174.6L1173.0 1175.4L1176.0 1176.3L1179.0 1177.1L1182.0 1177.8L1185.0 1178.6L1188.0 1179.3L1191.0 1179.9L1194.0 1180.6L1197.0 1181.2L1200.0 1181.7L1203.0 1182.3L1206.0 1182.8L1209.0 1183.2L1212.0 1183.7L1215.0 1184.1L1218.0 1184.5L1221.0 1184.9L1224.0 1185.3L1227.0 1185.7L1230.0 1186.1L1233.0 1186.5L1236.0 1187.0L1239.0 1187.6L1242.0 1188.2L1245.0 1188.8L1248.0 1189.6L1251.0 1190.5L1254.0 1191.5L1257.0 1192.6L1260.0 1193.8L1263.0 1195.2L1266.0 1196.8L1269.0 1198.5L1272.0 1200.3L1275.0 1202.2L1278.0 1204.1L1281.0 1206.2L1284.0 1208.2L1287.0 1210.3L1290.0 1212.3L1293.0 1214.3L1296.0 1216.3L1299.0 1218.1L1302.0 1219.9L1305.0 1221.5L1308.0 1222.9L1311.0 1224.2L1314.0 1225.3L1314.0 1273.0L903.0 1273.0Z" fill="#3a044f" fill-opacity="0.7" stroke="none"/><path d="M903.0 1175.1L906.0 1169.2L909.0 1163.5L912.0 1158.0L915.0 1152.8L918.0 1147.8L921.0 1143.0L924.0 1138.5L927.0 1134.3L930.0 1130.3L933.0 1126.6L936.0 1123.2L939.0 1120.1L942.0 1117.3L945.0 1114.8L948.0 1112.7L951.0 1110.8L954.0 1109.3L957.0 1108.1L960.0 1107.2L963.0 1106.5L966.0 1106.1L969.0 1106.0L972.0 1106.1L975.0 1106.4L978.0 1107.0L981.0 1107.8L984.0 1108.7L987.0 1109.9L990.0 1111.2L993.0 1112.7L996.0 1114.3L999.0 1116.0L1002.0 1117.8L1005.0 1119.8L1008.0 1121.7L1011.0 1123.8L1014.0 1125.9L1017.0 1128.0L1020.0 1130.1L1023.0 1132.2L1026.0 1134.2L1029.0 1136.3L1032.0 1138.2L1035.0 1140.1L1038.0 1141.9L1041.0 1143.6L1044.0 1145.2L1047.0 1146.7L1050.0 1148.1L1053.0 1149.4L1056.0 1150.6L1059.0 1151.7L1062.0 1152.7L1065.0 1153.6L1068.0 1154.4L1071.0 1155.1L1074.0 1155.7L1077.0 1156.2L1080.0 1156.6L1083.0 1157.0L1086.0 1157.2L1089.0 1157.4L1092.0 1157.5L1095.0 1157.6L1098.0 1157.7L1101.0 1157.7L1104.0 1157.8L1107.0 1157.9L1110.0 1158.0L1113.0 1158.2L1116.0 1158.4L1119.0 1158.7L1122.0 1159.1L1125.0 1159.6L1128.0 1160.3L1131.0 1161.0L1134.0 1161.9L1137.0 1162.9L1140.0 1163.9L1143.0 1165.0L1146.0 1166.1L1149.0 1167.3L1152.0 1168.4L1155.0 1169.5L1158.0 1170.6L1161.0 1171.7L1164.0 1172.7L1167.0 1173.6L1170.0 1174.6L1173.0 1175.4L1176.0 1176.3L1179.0 1177.1L1182.0 1177.8L1185.0 1178.6L1188.0 1179.3L1191.0 1179.9L1194.0 1180.6L1197.0 1181.2L1200.0 1181.7L1203.0 1182.3L1206.0 1182.8L1209.0 1183.2L1212.0 1183.7L1215.0 1184.1L1218.0 1184.5L1221.0 1184.9L1224.0 1185.3L1227.0 1185.7L1230.0 1186.1L1233.0 1186.5L1236.0 1187.0L1239.0 1187.6L1242.0 1188.2L1245.0 1188.8L1248.0 1189.6L1251.0 1190.5L1254.0 1191.5L1257.0 1192.6L1260.0 1193.8L1263.0 1195.2L1266.0 1196.8L1269.0 1198.5L1272.0 1200.3L1275.0 1202.2L1278.0 1204.1L1281.0 1206.2L1284.0 1208.2L1287.0 1210.3L1290.0 1212.3L1293.0 1214.3L1296.0 1216.3L1299.0 1218.1L1302.0 1219.9L1305.0 1221.5L1308.0 1222.9L1311.0 1224.2L1314.0 1225.3" fill="none" stroke="#000" stroke-width="2.35" stroke-linejoin="round"/><path d="M903.0 1169.3L906.0 1161.7L909.0 1154.3L912.0 1147.1L915.0 1140.2L918.0 1133.5L921.0 1127.1L924.0 1121.0L927.0 1115.3L930.0 1109.8L933.0 1104.7L936.0 1100.0L939.0 1095.7L942.0 1091.8L945.0 1088.2L948.0 1085.2L951.0 1082.5L954.0 1080.3L957.0 1078.5L960.0 1077.1L963.0 1076.0L966.0 1075.3L969.0 1074.9L972.0 1074.8L975.0 1074.9L978.0 1075.4L981.0 1076.0L984.0 1076.9L987.0 1078.0L990.0 1079.3L993.0 1080.8L996.0 1082.4L999.0 1084.2L1002.0 1086.2L1005.0 1088.3L1008.0 1090.5L1011.0 1092.9L1014.0 1095.4L1017.0 1098.0L1020.0 1100.7L1023.0 1103.5L1026.0 1106.4L1029.0 1109.3L1032.0 1112.3L1035.0 1115.4L1038.0 1118.5L1041.0 1121.6L1044.0 1124.8L1047.0 1128.0L1050.0 1131.2L1053.0 1134.3L1056.0 1137.5L1059.0 1140.7L1062.0 1143.8L1065.0 1146.9L1068.0 1149.9L1071.0 1152.9L1074.0 1155.8L1077.0 1158.5L1080.0 1161.2L1083.0 1163.6L1086.0 1165.8L1089.0 1167.8L1092.0 1169.4L1095.0 1170.6L1098.0 1171.5L1101.0 1171.9L1104.0 1171.8L1107.0 1171.4L1110.0 1170.6L1113.0 1169.6L1116.0 1168.3L1119.0 1167.0L1122.0 1165.7L1125.0 1164.3L1128.0 1163.1L1131.0 1162.0L1134.0 1160.9L1137.0 1160.0L1140.0 1159.2L1143.0 1158.5L1146.0 1158.0L1149.0 1157.6L1152.0 1157.4L1155.0 1157.4L1158.0 1157.6L1161.0 1158.0L1164.0 1158.6L1167.0 1159.4L1170.0 1160.5L1173.0 1161.8L1176.0 1163.3L1179.0 1165.0L1182.0 1166.8L1185.0 1168.8L1188.0 1170.9L1191.0 1173.1L1194.0 1175.4L1197.0 1177.7L1200.0 1180.0L1203.0 1182.4L1206.0 1184.7L1209.0 1187.0L1212.0 1189.3L1215.0 1191.5L1218.0 1193.7L1221.0 1196.0L1224.0 1198.2L1227.0 1200.4L1230.0 1202.6L1233.0 1204.9L1236.0 1207.1L1239.0 1209.3L1242.0 1211.6L1245.0 1213.9L1248.0 1216.1L1251.0 1218.4L1254.0 1220.7L1257.0 1223.0L1260.0 1225.3L1263.0 1227.5L1266.0 1229.7L1269.0 1231.9L1272.0 1234.0L1275.0 1236.1L1278.0 1238.2L1281.0 1240.2L1284.0 1242.1L1287.0 1243.9L1290.0 1245.7L1293.0 1247.4L1296.0 1248.9L1299.0 1250.4L1302.0 1251.8L1305.0 1253.1L1308.0 1254.2L1311.0 1255.2L1314.0 1256.1L1314.0 1273.0L903.0 1273.0Z" fill="#3b8d8b" fill-opacity="0.7" stroke="none"/><path d="M903.0 1169.3L906.0 1161.7L909.0 1154.3L912.0 1147.1L915.0 1140.2L918.0 1133.5L921.0 1127.1L924.0 1121.0L927.0 1115.3L930.0 1109.8L933.0 1104.7L936.0 1100.0L939.0 1095.7L942.0 1091.8L945.0 1088.2L948.0 1085.2L951.0 1082.5L954.0 1080.3L957.0 1078.5L960.0 1077.1L963.0 1076.0L966.0 1075.3L969.0 1074.9L972.0 1074.8L975.0 1074.9L978.0 1075.4L981.0 1076.0L984.0 1076.9L987.0 1078.0L990.0 1079.3L993.0 1080.8L996.0 1082.4L999.0 1084.2L1002.0 1086.2L1005.0 1088.3L1008.0 1090.5L1011.0 1092.9L1014.0 1095.4L1017.0 1098.0L1020.0 1100.7L1023.0 1103.5L1026.0 1106.4L1029.0 1109.3L1032.0 1112.3L1035.0 1115.4L1038.0 1118.5L1041.0 1121.6L1044.0 1124.8L1047.0 1128.0L1050.0 1131.2L1053.0 1134.3L1056.0 1137.5L1059.0 1140.7L1062.0 1143.8L1065.0 1146.9L1068.0 1149.9L1071.0 1152.9L1074.0 1155.8L1077.0 1158.5L1080.0 1161.2L1083.0 1163.6L1086.0 1165.8L1089.0 1167.8L1092.0 1169.4L1095.0 1170.6L1098.0 1171.5L1101.0 1171.9L1104.0 1171.8L1107.0 1171.4L1110.0 1170.6L1113.0 1169.6L1116.0 1168.3L1119.0 1167.0L1122.0 1165.7L1125.0 1164.3L1128.0 1163.1L1131.0 1162.0L1134.0 1160.9L1137.0 1160.0L1140.0 1159.2L1143.0 1158.5L1146.0 1158.0L1149.0 1157.6L1152.0 1157.4L1155.0 1157.4L1158.0 1157.6L1161.0 1158.0L1164.0 1158.6L1167.0 1159.4L1170.0 1160.5L1173.0 1161.8L1176.0 1163.3L1179.0 1165.0L1182.0 1166.8L1185.0 1168.8L1188.0 1170.9L1191.0 1173.1L1194.0 1175.4L1197.0 1177.7L1200.0 1180.0L1203.0 1182.4L1206.0 1184.7L1209.0 1187.0L1212.0 1189.3L1215.0 1191.5L1218.0 1193.7L1221.0 1196.0L1224.0 1198.2L1227.0 1200.4L1230.0 1202.6L1233.0 1204.9L1236.0 1207.1L1239.0 1209.3L1242.0 1211.6L1245.0 1213.9L1248.0 1216.1L1251.0 1218.4L1254.0 1220.7L1257.0 1223.0L1260.0 1225.3L1263.0 1227.5L1266.0 1229.7L1269.0 1231.9L1272.0 1234.0L1275.0 1236.1L1278.0 1238.2L1281.0 1240.2L1284.0 1242.1L1287.0 1243.9L1290.0 1245.7L1293.0 1247.4L1296.0 1248.9L1299.0 1250.4L1302.0 1251.8L1305.0 1253.1L1308.0 1254.2L1311.0 1255.2L1314.0 1256.1" fill="none" stroke="#000" stroke-width="2.35" stroke-linejoin="round"/><path d="M903.0 1178.4L906.0 1173.8L909.0 1169.5L912.0 1165.6L915.0 1162.0L918.0 1158.7L921.0 1155.7L924.0 1153.0L927.0 1150.6L930.0 1148.5L933.0 1146.6L936.0 1145.0L939.0 1143.6L942.0 1142.5L945.0 1141.5L948.0 1140.8L951.0 1140.3L954.0 1140.0L957.0 1139.9L960.0 1139.9L963.0 1140.1L966.0 1140.4L969.0 1140.8L972.0 1141.2L975.0 1141.8L978.0 1142.3L981.0 1142.9L984.0 1143.5L987.0 1144.1L990.0 1144.7L993.0 1145.2L996.0 1145.6L999.0 1146.0L1002.0 1146.4L1005.0 1146.6L1008.0 1146.9L1011.0 1147.0L1014.0 1147.2L1017.0 1147.3L1020.0 1147.3L1023.0 1147.3L1026.0 1147.3L1029.0 1147.2L1032.0 1147.2L1035.0 1147.1L1038.0 1146.9L1041.0 1146.8L1044.0 1146.6L1047.0 1146.5L1050.0 1146.3L1053.0 1146.1L1056.0 1145.9L1059.0 1145.7L1062.0 1145.5L1065.0 1145.3L1068.0 1145.1L1071.0 1144.9L1074.0 1144.8L1077.0 1144.6L1080.0 1144.5L1083.0 1144.4L1086.0 1144.3L1089.0 1144.3L1092.0 1144.2L1095.0 1144.2L1098.0 1144.2L1101.0 1144.3L1104.0 1144.4L1107.0 1144.5L1110.0 1144.7L1113.0 1144.9L1116.0 1145.1L1119.0 1145.4L1122.0 1145.7L1125.0 1146.1L1128.0 1146.5L1131.0 1146.9L1134.0 1147.4L1137.0 1147.9L1140.0 1148.5L1143.0 1149.1L1146.0 1149.8L1149.0 1150.5L1152.0 1151.3L1155.0 1152.1L1158.0 1153.0L1161.0 1154.0L1164.0 1155.0L1167.0 1156.0L1170.0 1157.1L1173.0 1158.3L1176.0 1159.5L1179.0 1160.7L1182.0 1161.9L1185.0 1163.2L1188.0 1164.5L1191.0 1165.8L1194.0 1167.2L1197.0 1168.5L1200.0 1169.9L1203.0 1171.3L1206.0 1172.7L1209.0 1174.1L1212.0 1175.5L1215.0 1176.9L1218.0 1178.3L1221.0 1179.7L1224.0 1181.0L1227.0 1182.4L1230.0 1183.8L1233.0 1185.2L1236.0 1186.6L1239.0 1188.0L1242.0 1189.4L1245.0 1190.8L1248.0 1192.2L1251.0 1193.7L1254.0 1195.1L1257.0 1196.6L1260.0 1198.1L1263.0 1199.6L1266.0 1201.1L1269.0 1202.6L1272.0 1204.2L1275.0 1205.8L1278.0 1207.3L1281.0 1209.0L1284.0 1210.6L1287.0 1212.2L1290.0 1213.8L1293.0 1215.4L1296.0 1217.0L1299.0 1218.6L1302.0 1220.1L1305.0 1221.7L1308.0 1223.2L1311.0 1224.7L1314.0 1226.2L1314.0 1273.0L903.0 1273.0Z" fill="#f8e845" fill-opacity="0.7" stroke="none"/><path d="M903.0 1178.4L906.0 1173.8L909.0 1169.5L912.0 1165.6L915.0 1162.0L918.0 1158.7L921.0 1155.7L924.0 1153.0L927.0 1150.6L930.0 1148.5L933.0 1146.6L936.0 1145.0L939.0 1143.6L942.0 1142.5L945.0 1141.5L948.0 1140.8L951.0 1140.3L954.0 1140.0L957.0 1139.9L960.0 1139.9L963.0 1140.1L966.0 1140.4L969.0 1140.8L972.0 1141.2L975.0 1141.8L978.0 1142.3L981.0 1142.9L984.0 1143.5L987.0 1144.1L990.0 1144.7L993.0 1145.2L996.0 1145.6L999.0 1146.0L1002.0 1146.4L1005.0 1146.6L1008.0 1146.9L1011.0 1147.0L1014.0 1147.2L1017.0 1147.3L1020.0 1147.3L1023.0 1147.3L1026.0 1147.3L1029.0 1147.2L1032.0 1147.2L1035.0 1147.1L1038.0 1146.9L1041.0 1146.8L1044.0 1146.6L1047.0 1146.5L1050.0 1146.3L1053.0 1146.1L1056.0 1145.9L1059.0 1145.7L1062.0 1145.5L1065.0 1145.3L1068.0 1145.1L1071.0 1144.9L1074.0 1144.8L1077.0 1144.6L1080.0 1144.5L1083.0 1144.4L1086.0 1144.3L1089.0 1144.3L1092.0 1144.2L1095.0 1144.2L1098.0 1144.2L1101.0 1144.3L1104.0 1144.4L1107.0 1144.5L1110.0 1144.7L1113.0 1144.9L1116.0 1145.1L1119.0 1145.4L1122.0 1145.7L1125.0 1146.1L1128.0 1146.5L1131.0 1146.9L1134.0 1147.4L1137.0 1147.9L1140.0 1148.5L1143.0 1149.1L1146.0 1149.8L1149.0 1150.5L1152.0 1151.3L1155.0 1152.1L1158.0 1153.0L1161.0 1154.0L1164.0 1155.0L1167.0 1156.0L1170.0 1157.1L1173.0 1158.3L1176.0 1159.5L1179.0 1160.7L1182.0 1161.9L1185.0 1163.2L1188.0 1164.5L1191.0 1165.8L1194.0 1167.2L1197.0 1168.5L1200.0 1169.9L1203.0 1171.3L1206.0 1172.7L1209.0 1174.1L1212.0 1175.5L1215.0 1176.9L1218.0 1178.3L1221.0 1179.7L1224.0 1181.0L1227.0 1182.4L1230.0 1183.8L1233.0 1185.2L1236.0 1186.6L1239.0 1188.0L1242.0 1189.4L1245.0 1190.8L1248.0 1192.2L1251.0 1193.7L1254.0 1195.1L1257.0 1196.6L1260.0 1198.1L1263.0 1199.6L1266.0 1201.1L1269.0 1202.6L1272.0 1204.2L1275.0 1205.8L1278.0 1207.3L1281.0 1209.0L1284.0 1210.6L1287.0 1212.2L1290.0 1213.8L1293.0 1215.4L1296.0 1217.0L1299.0 1218.6L1302.0 1220.1L1305.0 1221.7L1308.0 1223.2L1311.0 1224.7L1314.0 1226.2" fill="none" stroke="#000" stroke-width="2.35" stroke-linejoin="round"/><text x="1108.1" y="1008.1" text-anchor="middle" font-size="19.7" letter-spacing="0.36" fill="#1a1a1a">dcd B.2.2.3.1</text><text x="870.7" y="1279.3" text-anchor="end" font-size="19.6" letter-spacing="0.1" fill="#4d4d4d">0.0000</text><text x="870.7" y="1210.9" text-anchor="end" font-size="19.6" letter-spacing="0.1" fill="#4d4d4d">0.0005</text><text x="870.7" y="1142.4" text-anchor="end" font-size="19.6" letter-spacing="0.1" fill="#4d4d4d">0.0010</text><text x="870.7" y="1074.0" text-anchor="end" font-size="19.6" letter-spacing="0.1" fill="#4d4d4d">0.0015</text></g>
<g><path d="M1423.40 1020.3V1284.2M1536.00 1020.3V1284.2M1648.60 1020.3V1284.2M1761.20 1020.3V1284.2M1346.8 1238.09H1798.4M1346.8 1169.65H1798.4M1346.8 1101.22H1798.4M1346.8 1032.79H1798.4" stroke="#ebebeb" stroke-width="1.17" fill="none"/><path d="M1367.10 1020.3V1284.2M1479.70 1020.3V1284.2M1592.30 1020.3V1284.2M1704.90 1020.3V1284.2M1346.8 1272.30H1798.4M1346.8 1203.87H1798.4M1346.8 1135.44H1798.4M1346.8 1067.01H1798.4" stroke="#ebebeb" stroke-width="2.35" fill="none"/><path d="M1368.0 1163.1L1371.0 1158.9L1374.0 1154.7L1377.0 1150.6L1380.1 1146.5L1383.1 1142.5L1386.1 1138.6L1389.1 1134.9L1392.1 1131.4L1395.1 1128.0L1398.1 1124.9L1401.2 1122.0L1404.2 1119.4L1407.2 1117.1L1410.2 1115.1L1413.2 1113.5L1416.2 1112.2L1419.2 1111.2L1422.3 1110.6L1425.3 1110.2L1428.3 1110.1L1431.3 1110.3L1434.3 1110.6L1437.3 1111.3L1440.4 1112.1L1443.4 1113.1L1446.4 1114.3L1449.4 1115.6L1452.4 1117.1L1455.4 1118.7L1458.4 1120.4L1461.5 1122.2L1464.5 1124.1L1467.5 1126.0L1470.5 1128.0L1473.5 1130.1L1476.5 1132.2L1479.5 1134.3L1482.6 1136.4L1485.6 1138.5L1488.6 1140.5L1491.6 1142.5L1494.6 1144.5L1497.6 1146.4L1500.6 1148.2L1503.7 1149.9L1506.7 1151.6L1509.7 1153.2L1512.7 1154.7L1515.7 1156.1L1518.7 1157.5L1521.8 1158.8L1524.8 1160.0L1527.8 1161.2L1530.8 1162.3L1533.8 1163.3L1536.8 1164.3L1539.8 1165.2L1542.9 1166.1L1545.9 1166.8L1548.9 1167.6L1551.9 1168.2L1554.9 1168.8L1557.9 1169.3L1560.9 1169.8L1564.0 1170.2L1567.0 1170.5L1570.0 1170.8L1573.0 1171.1L1576.0 1171.3L1579.0 1171.4L1582.0 1171.5L1585.1 1171.5L1588.1 1171.5L1591.1 1171.5L1594.1 1171.4L1597.1 1171.3L1600.1 1171.1L1603.1 1170.9L1606.2 1170.7L1609.2 1170.5L1612.2 1170.2L1615.2 1170.0L1618.2 1169.7L1621.2 1169.4L1624.2 1169.1L1627.3 1168.7L1630.3 1168.4L1633.3 1168.1L1636.3 1167.8L1639.3 1167.5L1642.3 1167.3L1645.4 1167.1L1648.4 1167.0L1651.4 1166.9L1654.4 1166.9L1657.4 1167.0L1660.4 1167.2L1663.4 1167.5L1666.5 1167.9L1669.5 1168.4L1672.5 1169.0L1675.5 1169.8L1678.5 1170.7L1681.5 1171.8L1684.5 1173.0L1687.6 1174.3L1690.6 1175.8L1693.6 1177.4L1696.6 1179.1L1699.6 1180.8L1702.6 1182.7L1705.6 1184.6L1708.7 1186.6L1711.7 1188.6L1714.7 1190.7L1717.7 1192.8L1720.7 1194.9L1723.7 1197.1L1726.8 1199.2L1729.8 1201.3L1732.8 1203.4L1735.8 1205.4L1738.8 1207.4L1741.8 1209.4L1744.8 1211.4L1747.9 1213.4L1750.9 1215.3L1753.9 1217.2L1756.9 1219.2L1759.9 1221.1L1762.9 1223.0L1765.9 1224.9L1769.0 1226.9L1772.0 1228.8L1775.0 1230.8L1778.0 1232.8L1778.0 1273.0L1368.0 1273.0Z" fill="#3a044f" fill-opacity="0.7" stroke="none"/><path d="M1368.0 1163.1L1371.0 1158.9L1374.0 1154.7L1377.0 1150.6L1380.1 1146.5L1383.1 1142.5L1386.1 1138.6L1389.1 1134.9L1392.1 1131.4L1395.1 1128.0L1398.1 1124.9L1401.2 1122.0L1404.2 1119.4L1407.2 1117.1L1410.2 1115.1L1413.2 1113.5L1416.2 1112.2L1419.2 1111.2L1422.3 1110.6L1425.3 1110.2L1428.3 1110.1L1431.3 1110.3L1434.3 1110.6L1437.3 1111.3L1440.4 1112.1L1443.4 1113.1L1446.4 1114.3L1449.4 1115.6L1452.4 1117.1L1455.4 1118.7L1458.4 1120.4L1461.5 1122.2L1464.5 1124.1L1467.5 1126.0L1470.5 1128.0L1473.5 1130.1L1476.5 1132.2L1479.5 1134.3L1482.6 1136.4L1485.6 1138.5L1488.6 1140.5L1491.6 1142.5L1494.6 1144.5L1497.6 1146.4L1500.6 1148.2L1503.7 1149.9L1506.7 1151.6L1509.7 1153.2L1512.7 1154.7L1515.7 1156.1L1518.7 1157.5L1521.8 1158.8L1524.8 1160.0L1527.8 1161.2L1530.8 1162.3L1533.8 1163.3L1536.8 1164.3L1539.8 1165.2L1542.9 1166.1L1545.9 1166.8L1548.9 1167.6L1551.9 1168.2L1554.9 1168.8L1557.9 1169.3L1560.9 1169.8L1564.0 1170.2L1567.0 1170.5L1570.0 1170.8L1573.0 1171.1L1576.0 1171.3L1579.0 1171.4L1582.0 1171.5L1585.1 1171.5L1588.1 1171.5L1591.1 1171.5L1594.1 1171.4L1597.1 1171.3L1600.1 1171.1L1603.1 1170.9L1606.2 1170.7L1609.2 1170.5L1612.2 1170.2L1615.2 1170.0L1618.2 1169.7L1621.2 1169.4L1624.2 1169.1L1627.3 1168.7L1630.3 1168.4L1633.3 1168.1L1636.3 1167.8L1639.3 1167.5L1642.3 1167.3L1645.4 1167.1L1648.4 1167.0L1651.4 1166.9L1654.4 1166.9L1657.4 1167.0L1660.4 1167.2L1663.4 1167.5L1666.5 1167.9L1669.5 1168.4L1672.5 1169.0L1675.5 1169.8L1678.5 1170.7L1681.5 1171.8L1684.5 1173.0L1687.6 1174.3L1690.6 1175.8L1693.6 1177.4L1696.6 1179.1L1699.6 1180.8L1702.6 1182.7L1705.6 1184.6L1708.7 1186.6L1711.7 1188.6L1714.7 1190.7L1717.7 1192.8L1720.7 1194.9L1723.7 1197.1L1726.8 1199.2L1729.8 1201.3L1732.8 1203.4L1735.8 1205.4L1738.8 1207.4L1741.8 1209.4L1744.8 1211.4L1747.9 1213.4L1750.9 1215.3L1753.9 1217.2L1756.9 1219.2L1759.9 1221.1L1762.9 1223.0L1765.9 1224.9L1769.0 1226.9L1772.0 1228.8L1775.0 1230.8L1778.0 1232.8" fill="none" stroke="#000" stroke-width="2.35" stroke-linejoin="round"/><path d="M1368.0 1181.9L1371.0 1177.6L1374.0 1173.3L1377.0 1169.3L1380.1 1165.3L1383.1 1161.5L1386.1 1157.9L1389.1 1154.4L1392.1 1151.1L1395.1 1147.9L1398.1 1144.9L1401.2 1142.1L1404.2 1139.4L1407.2 1136.9L1410.2 1134.5L1413.2 1132.3L1416.2 1130.3L1419.2 1128.5L1422.3 1126.8L1425.3 1125.3L1428.3 1124.0L1431.3 1122.8L1434.3 1121.8L1437.3 1120.9L1440.4 1120.1L1443.4 1119.5L1446.4 1119.0L1449.4 1118.6L1452.4 1118.3L1455.4 1118.2L1458.4 1118.1L1461.5 1118.1L1464.5 1118.2L1467.5 1118.3L1470.5 1118.6L1473.5 1118.9L1476.5 1119.2L1479.5 1119.6L1482.6 1120.1L1485.6 1120.6L1488.6 1121.2L1491.6 1121.8L1494.6 1122.4L1497.6 1123.1L1500.6 1123.8L1503.7 1124.5L1506.7 1125.2L1509.7 1126.0L1512.7 1126.7L1515.7 1127.5L1518.7 1128.2L1521.8 1129.0L1524.8 1129.7L1527.8 1130.5L1530.8 1131.2L1533.8 1131.9L1536.8 1132.6L1539.8 1133.3L1542.9 1134.1L1545.9 1134.8L1548.9 1135.5L1551.9 1136.3L1554.9 1137.1L1557.9 1138.0L1560.9 1138.8L1564.0 1139.8L1567.0 1140.8L1570.0 1141.8L1573.0 1142.9L1576.0 1144.1L1579.0 1145.4L1582.0 1146.7L1585.1 1148.2L1588.1 1149.6L1591.1 1151.2L1594.1 1152.8L1597.1 1154.4L1600.1 1156.1L1603.1 1157.9L1606.2 1159.7L1609.2 1161.6L1612.2 1163.5L1615.2 1165.5L1618.2 1167.5L1621.2 1169.5L1624.2 1171.6L1627.3 1173.7L1630.3 1175.8L1633.3 1178.0L1636.3 1180.1L1639.3 1182.3L1642.3 1184.4L1645.4 1186.5L1648.4 1188.6L1651.4 1190.6L1654.4 1192.6L1657.4 1194.5L1660.4 1196.3L1663.4 1198.1L1666.5 1199.7L1669.5 1201.3L1672.5 1202.8L1675.5 1204.1L1678.5 1205.3L1681.5 1206.4L1684.5 1207.3L1687.6 1208.1L1690.6 1208.8L1693.6 1209.4L1696.6 1209.9L1699.6 1210.2L1702.6 1210.5L1705.6 1210.7L1708.7 1210.9L1711.7 1211.0L1714.7 1211.1L1717.7 1211.1L1720.7 1211.1L1723.7 1211.1L1726.8 1211.1L1729.8 1211.0L1732.8 1211.0L1735.8 1211.0L1738.8 1211.1L1741.8 1211.2L1744.8 1211.3L1747.9 1211.5L1750.9 1211.8L1753.9 1212.2L1756.9 1212.6L1759.9 1213.2L1762.9 1213.8L1765.9 1214.6L1769.0 1215.5L1772.0 1216.5L1775.0 1217.7L1778.0 1219.1L1778.0 1273.0L1368.0 1273.0Z" fill="#3b8d8b" fill-opacity="0.7" stroke="none"/><path d="M1368.0 1181.9L1371.0 1177.6L1374.0 1173.3L1377.0 1169.3L1380.1 1165.3L1383.1 1161.5L1386.1 1157.9L1389.1 1154.4L1392.1 1151.1L1395.1 1147.9L1398.1 1144.9L1401.2 1142.1L1404.2 1139.4L1407.2 1136.9L1410.2 1134.5L1413.2 1132.3L1416.2 1130.3L1419.2 1128.5L1422.3 1126.8L1425.3 1125.3L1428.3 1124.0L1431.3 1122.8L1434.3 1121.8L1437.3 1120.9L1440.4 1120.1L1443.4 1119.5L1446.4 1119.0L1449.4 1118.6L1452.4 1118.3L1455.4 1118.2L1458.4 1118.1L1461.5 1118.1L1464.5 1118.2L1467.5 1118.3L1470.5 1118.6L1473.5 1118.9L1476.5 1119.2L1479.5 1119.6L1482.6 1120.1L1485.6 1120.6L1488.6 1121.2L1491.6 1121.8L1494.6 1122.4L1497.6 1123.1L1500.6 1123.8L1503.7 1124.5L1506.7 1125.2L1509.7 1126.0L1512.7 1126.7L1515.7 1127.5L1518.7 1128.2L1521.8 1129.0L1524.8 1129.7L1527.8 1130.5L1530.8 1131.2L1533.8 1131.9L1536.8 1132.6L1539.8 1133.3L1542.9 1134.1L1545.9 1134.8L1548.9 1135.5L1551.9 1136.3L1554.9 1137.1L1557.9 1138.0L1560.9 1138.8L1564.0 1139.8L1567.0 1140.8L1570.0 1141.8L1573.0 1142.9L1576.0 1144.1L1579.0 1145.4L1582.0 1146.7L1585.1 1148.2L1588.1 1149.6L1591.1 1151.2L1594.1 1152.8L1597.1 1154.4L1600.1 1156.1L1603.1 1157.9L1606.2 1159.7L1609.2 1161.6L1612.2 1163.5L1615.2 1165.5L1618.2 1167.5L1621.2 1169.5L1624.2 1171.6L1627.3 1173.7L1630.3 1175.8L1633.3 1178.0L1636.3 1180.1L1639.3 1182.3L1642.3 1184.4L1645.4 1186.5L1648.4 1188.6L1651.4 1190.6L1654.4 1192.6L1657.4 1194.5L1660.4 1196.3L1663.4 1198.1L1666.5 1199.7L1669.5 1201.3L1672.5 1202.8L1675.5 1204.1L1678.5 1205.3L1681.5 1206.4L1684.5 1207.3L1687.6 1208.1L1690.6 1208.8L1693.6 1209.4L1696.6 1209.9L1699.6 1210.2L1702.6 1210.5L1705.6 1210.7L1708.7 1210.9L1711.7 1211.0L1714.7 1211.1L1717.7 1211.1L1720.7 1211.1L1723.7 1211.1L1726.8 1211.1L1729.8 1211.0L1732.8 1211.0L1735.8 1211.0L1738.8 1211.1L1741.8 1211.2L1744.8 1211.3L1747.9 1211.5L1750.9 1211.8L1753.9 1212.2L1756.9 1212.6L1759.9 1213.2L1762.9 1213.8L1765.9 1214.6L1769.0 1215.5L1772.0 1216.5L1775.0 1217.7L1778.0 1219.1" fill="none" stroke="#000" stroke-width="2.35" stroke-linejoin="round"/><path d="M1368.0 1201.7L1371.0 1197.6L1374.0 1193.3L1377.0 1189.0L1380.1 1184.7L1383.1 1180.3L1386.1 1176.0L1389.1 1171.7L1392.1 1167.5L1395.1 1163.4L1398.1 1159.3L1401.2 1155.4L1404.2 1151.6L1407.2 1148.0L1410.2 1144.5L1413.2 1141.2L1416.2 1138.2L1419.2 1135.4L1422.3 1132.8L1425.3 1130.5L1428.3 1128.5L1431.3 1126.6L1434.3 1125.0L1437.3 1123.6L1440.4 1122.4L1443.4 1121.5L1446.4 1120.7L1449.4 1120.2L1452.4 1119.9L1455.4 1119.7L1458.4 1119.8L1461.5 1120.0L1464.5 1120.4L1467.5 1121.0L1470.5 1121.8L1473.5 1122.7L1476.5 1123.8L1479.5 1124.9L1482.6 1126.2L1485.6 1127.6L1488.6 1129.0L1491.6 1130.6L1494.6 1132.1L1497.6 1133.7L1500.6 1135.3L1503.7 1136.9L1506.7 1138.5L1509.7 1140.1L1512.7 1141.6L1515.7 1143.1L1518.7 1144.5L1521.8 1145.8L1524.8 1147.0L1527.8 1148.0L1530.8 1149.0L1533.8 1149.9L1536.8 1150.7L1539.8 1151.4L1542.9 1152.0L1545.9 1152.6L1548.9 1153.2L1551.9 1153.7L1554.9 1154.2L1557.9 1154.8L1560.9 1155.3L1564.0 1155.8L1567.0 1156.4L1570.0 1157.0L1573.0 1157.7L1576.0 1158.5L1579.0 1159.3L1582.0 1160.2L1585.1 1161.2L1588.1 1162.2L1591.1 1163.3L1594.1 1164.5L1597.1 1165.6L1600.1 1166.8L1603.1 1168.1L1606.2 1169.3L1609.2 1170.6L1612.2 1171.8L1615.2 1173.0L1618.2 1174.3L1621.2 1175.4L1624.2 1176.6L1627.3 1177.7L1630.3 1178.8L1633.3 1179.8L1636.3 1180.7L1639.3 1181.6L1642.3 1182.3L1645.4 1183.0L1648.4 1183.6L1651.4 1184.1L1654.4 1184.5L1657.4 1184.9L1660.4 1185.1L1663.4 1185.3L1666.5 1185.5L1669.5 1185.5L1672.5 1185.5L1675.5 1185.4L1678.5 1185.3L1681.5 1185.1L1684.5 1184.9L1687.6 1184.6L1690.6 1184.3L1693.6 1184.0L1696.6 1183.6L1699.6 1183.2L1702.6 1182.8L1705.6 1182.3L1708.7 1181.9L1711.7 1181.4L1714.7 1181.0L1717.7 1180.6L1720.7 1180.3L1723.7 1180.0L1726.8 1179.8L1729.8 1179.8L1732.8 1179.8L1735.8 1180.0L1738.8 1180.3L1741.8 1180.8L1744.8 1181.5L1747.9 1182.4L1750.9 1183.5L1753.9 1184.8L1756.9 1186.3L1759.9 1188.0L1762.9 1189.9L1765.9 1192.0L1769.0 1194.2L1772.0 1196.6L1775.0 1199.1L1778.0 1201.6L1778.0 1273.0L1368.0 1273.0Z" fill="#f8e845" fill-opacity="0.7" stroke="none"/><path d="M1368.0 1201.7L1371.0 1197.6L1374.0 1193.3L1377.0 1189.0L1380.1 1184.7L1383.1 1180.3L1386.1 1176.0L1389.1 1171.7L1392.1 1167.5L1395.1 1163.4L1398.1 1159.3L1401.2 1155.4L1404.2 1151.6L1407.2 1148.0L1410.2 1144.5L1413.2 1141.2L1416.2 1138.2L1419.2 1135.4L1422.3 1132.8L1425.3 1130.5L1428.3 1128.5L1431.3 1126.6L1434.3 1125.0L1437.3 1123.6L1440.4 1122.4L1443.4 1121.5L1446.4 1120.7L1449.4 1120.2L1452.4 1119.9L1455.4 1119.7L1458.4 1119.8L1461.5 1120.0L1464.5 1120.4L1467.5 1121.0L1470.5 1121.8L1473.5 1122.7L1476.5 1123.8L1479.5 1124.9L1482.6 1126.2L1485.6 1127.6L1488.6 1129.0L1491.6 1130.6L1494.6 1132.1L1497.6 1133.7L1500.6 1135.3L1503.7 1136.9L1506.7 1138.5L1509.7 1140.1L1512.7 1141.6L1515.7 1143.1L1518.7 1144.5L1521.8 1145.8L1524.8 1147.0L1527.8 1148.0L1530.8 1149.0L1533.8 1149.9L1536.8 1150.7L1539.8 1151.4L1542.9 1152.0L1545.9 1152.6L1548.9 1153.2L1551.9 1153.7L1554.9 1154.2L1557.9 1154.8L1560.9 1155.3L1564.0 1155.8L1567.0 1156.4L1570.0 1157.0L1573.0 1157.7L1576.0 1158.5L1579.0 1159.3L1582.0 1160.2L1585.1 1161.2L1588.1 1162.2L1591.1 1163.3L1594.1 1164.5L1597.1 1165.6L1600.1 1166.8L1603.1 1168.1L1606.2 1169.3L1609.2 1170.6L1612.2 1171.8L1615.2 1173.0L1618.2 1174.3L1621.2 1175.4L1624.2 1176.6L1627.3 1177.7L1630.3 1178.8L1633.3 1179.8L1636.3 1180.7L1639.3 1181.6L1642.3 1182.3L1645.4 1183.0L1648.4 1183.6L1651.4 1184.1L1654.4 1184.5L1657.4 1184.9L1660.4 1185.1L1663.4 1185.3L1666.5 1185.5L1669.5 1185.5L1672.5 1185.5L1675.5 1185.4L1678.5 1185.3L1681.5 1185.1L1684.5 1184.9L1687.6 1184.6L1690.6 1184.3L1693.6 1184.0L1696.6 1183.6L1699.6 1183.2L1702.6 1182.8L1705.6 1182.3L1708.7 1181.9L1711.7 1181.4L1714.7 1181.0L1717.7 1180.6L1720.7 1180.3L1723.7 1180.0L1726.8 1179.8L1729.8 1179.8L1732.8 1179.8L1735.8 1180.0L1738.8 1180.3L1741.8 1180.8L1744.8 1181.5L1747.9 1182.4L1750.9 1183.5L1753.9 1184.8L1756.9 1186.3L1759.9 1188.0L1762.9 1189.9L1765.9 1192.0L1769.0 1194.2L1772.0 1196.6L1775.0 1199.1L1778.0 1201.6" fill="none" stroke="#000" stroke-width="2.35" stroke-linejoin="round"/><text x="1572.6" y="1008.1" text-anchor="middle" font-size="19.7" letter-spacing="0.36" fill="#1a1a1a">dcd C.1.1.1.3</text></g>
<g><path d="M1887.90 1020.3V1284.2M2000.50 1020.3V1284.2M2113.10 1020.3V1284.2M2225.70 1020.3V1284.2M1811.3 1238.09H2262.9M1811.3 1169.65H2262.9M1811.3 1101.22H2262.9M1811.3 1032.79H2262.9" stroke="#ebebeb" stroke-width="1.17" fill="none"/><path d="M1831.60 1020.3V1284.2M1944.20 1020.3V1284.2M2056.80 1020.3V1284.2M2169.40 1020.3V1284.2M1811.3 1272.30H2262.9M1811.3 1203.87H2262.9M1811.3 1135.44H2262.9M1811.3 1067.01H2262.9" stroke="#ebebeb" stroke-width="2.35" fill="none"/><path d="M1832.0 1184.1L1835.0 1179.8L1838.0 1175.7L1841.0 1171.8L1844.0 1168.1L1847.0 1164.7L1850.0 1161.4L1853.0 1158.4L1856.0 1155.6L1859.0 1153.0L1862.0 1150.7L1865.0 1148.6L1868.0 1146.7L1871.0 1145.0L1874.0 1143.5L1877.0 1142.3L1880.0 1141.3L1883.0 1140.5L1886.0 1139.9L1889.0 1139.4L1892.0 1139.2L1895.0 1139.0L1898.0 1139.0L1901.0 1139.1L1904.0 1139.4L1907.0 1139.6L1910.0 1140.0L1913.0 1140.4L1916.0 1140.8L1919.0 1141.2L1922.0 1141.6L1925.0 1142.0L1928.0 1142.4L1931.0 1142.8L1934.0 1143.2L1937.0 1143.6L1940.0 1144.0L1943.0 1144.3L1946.0 1144.6L1949.0 1145.0L1952.0 1145.3L1955.0 1145.6L1958.0 1145.9L1961.0 1146.2L1964.0 1146.5L1967.0 1146.8L1970.0 1147.0L1973.0 1147.3L1976.0 1147.5L1979.0 1147.8L1982.0 1148.0L1985.0 1148.2L1988.0 1148.4L1991.0 1148.6L1994.0 1148.8L1997.0 1149.0L2000.0 1149.2L2003.0 1149.3L2006.0 1149.5L2009.0 1149.6L2012.0 1149.7L2015.0 1149.7L2018.0 1149.8L2021.0 1149.8L2024.0 1149.8L2027.0 1149.8L2030.0 1149.7L2033.0 1149.6L2036.0 1149.4L2039.0 1149.2L2042.0 1148.9L2045.0 1148.6L2048.0 1148.3L2051.0 1147.9L2054.0 1147.4L2057.0 1146.9L2060.0 1146.4L2063.0 1145.9L2066.0 1145.4L2069.0 1144.9L2072.0 1144.3L2075.0 1143.8L2078.0 1143.3L2081.0 1142.9L2084.0 1142.4L2087.0 1142.1L2090.0 1141.7L2093.0 1141.4L2096.0 1141.2L2099.0 1141.1L2102.0 1141.0L2105.0 1141.0L2108.0 1141.2L2111.0 1141.4L2114.0 1141.7L2117.0 1142.2L2120.0 1142.8L2123.0 1143.5L2126.0 1144.3L2129.0 1145.4L2132.0 1146.6L2135.0 1147.9L2138.0 1149.5L2141.0 1151.2L2144.0 1153.2L2147.0 1155.3L2150.0 1157.7L2153.0 1160.2L2156.0 1162.9L2159.0 1165.7L2162.0 1168.7L2165.0 1171.7L2168.0 1174.7L2171.0 1177.8L2174.0 1180.9L2177.0 1184.0L2180.0 1187.1L2183.0 1190.1L2186.0 1193.0L2189.0 1195.9L2192.0 1198.7L2195.0 1201.5L2198.0 1204.2L2201.0 1206.8L2204.0 1209.4L2207.0 1211.9L2210.0 1214.3L2213.0 1216.6L2216.0 1218.9L2219.0 1221.1L2222.0 1223.2L2225.0 1225.3L2228.0 1227.3L2231.0 1229.2L2234.0 1231.1L2237.0 1232.9L2240.0 1234.6L2243.0 1236.3L2243.0 1273.0L1832.0 1273.0Z" fill="#3a044f" fill-opacity="0.7" stroke="none"/><path d="M1832.0 1184.1L1835.0 1179.8L1838.0 1175.7L1841.0 1171.8L1844.0 1168.1L1847.0 1164.7L1850.0 1161.4L1853.0 1158.4L1856.0 1155.6L1859.0 1153.0L1862.0 1150.7L1865.0 1148.6L1868.0 1146.7L1871.0 1145.0L1874.0 1143.5L1877.0 1142.3L1880.0 1141.3L1883.0 1140.5L1886.0 1139.9L1889.0 1139.4L1892.0 1139.2L1895.0 1139.0L1898.0 1139.0L1901.0 1139.1L1904.0 1139.4L1907.0 1139.6L1910.0 1140.0L1913.0 1140.4L1916.0 1140.8L1919.0 1141.2L1922.0 1141.6L1925.0 1142.0L1928.0 1142.4L1931.0 1142.8L1934.0 1143.2L1937.0 1143.6L1940.0 1144.0L1943.0 1144.3L1946.0 1144.6L1949.0 1145.0L1952.0 1145.3L1955.0 1145.6L1958.0 1145.9L1961.0 1146.2L1964.0 1146.5L1967.0 1146.8L1970.0 1147.0L1973.0 1147.3L1976.0 1147.5L1979.0 1147.8L1982.0 1148.0L1985.0 1148.2L1988.0 1148.4L1991.0 1148.6L1994.0 1148.8L1997.0 1149.0L2000.0 1149.2L2003.0 1149.3L2006.0 1149.5L2009.0 1149.6L2012.0 1149.7L2015.0 1149.7L2018.0 1149.8L2021.0 1149.8L2024.0 1149.8L2027.0 1149.8L2030.0 1149.7L2033.0 1149.6L2036.0 1149.4L2039.0 1149.2L2042.0 1148.9L2045.0 1148.6L2048.0 1148.3L2051.0 1147.9L2054.0 1147.4L2057.0 1146.9L2060.0 1146.4L2063.0 1145.9L2066.0 1145.4L2069.0 1144.9L2072.0 1144.3L2075.0 1143.8L2078.0 1143.3L2081.0 1142.9L2084.0 1142.4L2087.0 1142.1L2090.0 1141.7L2093.0 1141.4L2096.0 1141.2L2099.0 1141.1L2102.0 1141.0L2105.0 1141.0L2108.0 1141.2L2111.0 1141.4L2114.0 1141.7L2117.0 1142.2L2120.0 1142.8L2123.0 1143.5L2126.0 1144.3L2129.0 1145.4L2132.0 1146.6L2135.0 1147.9L2138.0 1149.5L2141.0 1151.2L2144.0 1153.2L2147.0 1155.3L2150.0 1157.7L2153.0 1160.2L2156.0 1162.9L2159.0 1165.7L2162.0 1168.7L2165.0 1171.7L2168.0 1174.7L2171.0 1177.8L2174.0 1180.9L2177.0 1184.0L2180.0 1187.1L2183.0 1190.1L2186.0 1193.0L2189.0 1195.9L2192.0 1198.7L2195.0 1201.5L2198.0 1204.2L2201.0 1206.8L2204.0 1209.4L2207.0 1211.9L2210.0 1214.3L2213.0 1216.6L2216.0 1218.9L2219.0 1221.1L2222.0 1223.2L2225.0 1225.3L2228.0 1227.3L2231.0 1229.2L2234.0 1231.1L2237.0 1232.9L2240.0 1234.6L2243.0 1236.3" fill="none" stroke="#000" stroke-width="2.35" stroke-linejoin="round"/><path d="M1832.0 1175.3L1835.0 1170.1L1838.0 1165.1L1841.0 1160.3L1844.0 1155.8L1847.0 1151.5L1850.0 1147.5L1853.0 1143.7L1856.0 1140.1L1859.0 1136.7L1862.0 1133.6L1865.0 1130.6L1868.0 1127.9L1871.0 1125.4L1874.0 1123.1L1877.0 1120.9L1880.0 1119.0L1883.0 1117.3L1886.0 1115.7L1889.0 1114.4L1892.0 1113.2L1895.0 1112.2L1898.0 1111.3L1901.0 1110.7L1904.0 1110.2L1907.0 1109.8L1910.0 1109.6L1913.0 1109.6L1916.0 1109.7L1919.0 1110.0L1922.0 1110.4L1925.0 1110.9L1928.0 1111.6L1931.0 1112.4L1934.0 1113.3L1937.0 1114.3L1940.0 1115.5L1943.0 1116.7L1946.0 1118.0L1949.0 1119.4L1952.0 1120.8L1955.0 1122.2L1958.0 1123.6L1961.0 1125.0L1964.0 1126.4L1967.0 1127.7L1970.0 1129.0L1973.0 1130.2L1976.0 1131.2L1979.0 1132.2L1982.0 1133.0L1985.0 1133.6L1988.0 1134.1L1991.0 1134.4L1994.0 1134.5L1997.0 1134.4L2000.0 1134.1L2003.0 1133.7L2006.0 1133.2L2009.0 1132.6L2012.0 1131.9L2015.0 1131.1L2018.0 1130.2L2021.0 1129.4L2024.0 1128.5L2027.0 1127.6L2030.0 1126.8L2033.0 1125.9L2036.0 1125.2L2039.0 1124.5L2042.0 1123.9L2045.0 1123.4L2048.0 1123.1L2051.0 1123.0L2054.0 1123.2L2057.0 1123.7L2060.0 1124.6L2063.0 1126.0L2066.0 1127.8L2069.0 1130.3L2072.0 1133.1L2075.0 1136.2L2078.0 1139.5L2081.0 1142.6L2084.0 1145.7L2087.0 1148.8L2090.0 1152.2L2093.0 1155.9L2096.0 1159.9L2099.0 1164.0L2102.0 1168.4L2105.0 1172.9L2108.0 1177.4L2111.0 1181.9L2114.0 1186.5L2117.0 1190.9L2120.0 1195.2L2123.0 1199.3L2126.0 1203.1L2129.0 1206.6L2132.0 1209.7L2135.0 1212.4L2138.0 1214.7L2141.0 1216.7L2144.0 1218.4L2147.0 1219.7L2150.0 1220.8L2153.0 1221.7L2156.0 1222.3L2159.0 1222.8L2162.0 1223.1L2165.0 1223.3L2168.0 1223.4L2171.0 1223.4L2174.0 1223.4L2177.0 1223.3L2180.0 1223.3L2183.0 1223.3L2186.0 1223.4L2189.0 1223.5L2192.0 1223.8L2195.0 1224.0L2198.0 1224.4L2201.0 1224.8L2204.0 1225.2L2207.0 1225.8L2210.0 1226.3L2213.0 1227.0L2216.0 1227.7L2219.0 1228.5L2222.0 1229.4L2225.0 1230.3L2228.0 1231.3L2231.0 1232.3L2234.0 1233.4L2237.0 1234.6L2240.0 1235.9L2243.0 1237.2L2243.0 1273.0L1832.0 1273.0Z" fill="#3b8d8b" fill-opacity="0.7" stroke="none"/><path d="M1832.0 1175.3L1835.0 1170.1L1838.0 1165.1L1841.0 1160.3L1844.0 1155.8L1847.0 1151.5L1850.0 1147.5L1853.0 1143.7L1856.0 1140.1L1859.0 1136.7L1862.0 1133.6L1865.0 1130.6L1868.0 1127.9L1871.0 1125.4L1874.0 1123.1L1877.0 1120.9L1880.0 1119.0L1883.0 1117.3L1886.0 1115.7L1889.0 1114.4L1892.0 1113.2L1895.0 1112.2L1898.0 1111.3L1901.0 1110.7L1904.0 1110.2L1907.0 1109.8L1910.0 1109.6L1913.0 1109.6L1916.0 1109.7L1919.0 1110.0L1922.0 1110.4L1925.0 1110.9L1928.0 1111.6L1931.0 1112.4L1934.0 1113.3L1937.0 1114.3L1940.0 1115.5L1943.0 1116.7L1946.0 1118.0L1949.0 1119.4L1952.0 1120.8L1955.0 1122.2L1958.0 1123.6L1961.0 1125.0L1964.0 1126.4L1967.0 1127.7L1970.0 1129.0L1973.0 1130.2L1976.0 1131.2L1979.0 1132.2L1982.0 1133.0L1985.0 1133.6L1988.0 1134.1L1991.0 1134.4L1994.0 1134.5L1997.0 1134.4L2000.0 1134.1L2003.0 1133.7L2006.0 1133.2L2009.0 1132.6L2012.0 1131.9L2015.0 1131.1L2018.0 1130.2L2021.0 1129.4L2024.0 1128.5L2027.0 1127.6L2030.0 1126.8L2033.0 1125.9L2036.0 1125.2L2039.0 1124.5L2042.0 1123.9L2045.0 1123.4L2048.0 1123.1L2051.0 1123.0L2054.0 1123.2L2057.0 1123.7L2060.0 1124.6L2063.0 1126.0L2066.0 1127.8L2069.0 1130.3L2072.0 1133.1L2075.0 1136.2L2078.0 1139.5L2081.0 1142.6L2084.0 1145.7L2087.0 1148.8L2090.0 1152.2L2093.0 1155.9L2096.0 1159.9L2099.0 1164.0L2102.0 1168.4L2105.0 1172.9L2108.0 1177.4L2111.0 1181.9L2114.0 1186.5L2117.0 1190.9L2120.0 1195.2L2123.0 1199.3L2126.0 1203.1L2129.0 1206.6L2132.0 1209.7L2135.0 1212.4L2138.0 1214.7L2141.0 1216.7L2144.0 1218.4L2147.0 1219.7L2150.0 1220.8L2153.0 1221.7L2156.0 1222.3L2159.0 1222.8L2162.0 1223.1L2165.0 1223.3L2168.0 1223.4L2171.0 1223.4L2174.0 1223.4L2177.0 1223.3L2180.0 1223.3L2183.0 1223.3L2186.0 1223.4L2189.0 1223.5L2192.0 1223.8L2195.0 1224.0L2198.0 1224.4L2201.0 1224.8L2204.0 1225.2L2207.0 1225.8L2210.0 1226.3L2213.0 1227.0L2216.0 1227.7L2219.0 1228.5L2222.0 1229.4L2225.0 1230.3L2228.0 1231.3L2231.0 1232.3L2234.0 1233.4L2237.0 1234.6L2240.0 1235.9L2243.0 1237.2" fill="none" stroke="#000" stroke-width="2.35" stroke-linejoin="round"/><path d="M1832.0 1202.3L1835.0 1199.1L1838.0 1195.8L1841.0 1192.7L1844.0 1189.5L1847.0 1186.5L1850.0 1183.5L1853.0 1180.5L1856.0 1177.6L1859.0 1174.7L1862.0 1171.9L1865.0 1169.2L1868.0 1166.5L1871.0 1163.9L1874.0 1161.4L1877.0 1158.9L1880.0 1156.5L1883.0 1154.1L1886.0 1151.9L1889.0 1149.7L1892.0 1147.5L1895.0 1145.5L1898.0 1143.5L1901.0 1141.6L1904.0 1139.8L1907.0 1138.1L1910.0 1136.5L1913.0 1134.9L1916.0 1133.5L1919.0 1132.2L1922.0 1131.1L1925.0 1130.0L1928.0 1129.1L1931.0 1128.3L1934.0 1127.7L1937.0 1127.2L1940.0 1126.9L1943.0 1126.7L1946.0 1126.7L1949.0 1126.9L1952.0 1127.2L1955.0 1127.7L1958.0 1128.4L1961.0 1129.1L1964.0 1130.1L1967.0 1131.1L1970.0 1132.2L1973.0 1133.5L1976.0 1134.8L1979.0 1136.2L1982.0 1137.7L1985.0 1139.2L1988.0 1140.8L1991.0 1142.4L1994.0 1144.1L1997.0 1145.8L2000.0 1147.4L2003.0 1149.1L2006.0 1150.8L2009.0 1152.4L2012.0 1154.0L2015.0 1155.5L2018.0 1157.1L2021.0 1158.5L2024.0 1159.9L2027.0 1161.1L2030.0 1162.3L2033.0 1163.4L2036.0 1164.4L2039.0 1165.2L2042.0 1165.9L2045.0 1166.5L2048.0 1166.9L2051.0 1167.1L2054.0 1167.2L2057.0 1167.1L2060.0 1166.8L2063.0 1166.4L2066.0 1165.9L2069.0 1165.2L2072.0 1164.5L2075.0 1163.6L2078.0 1162.7L2081.0 1161.6L2084.0 1160.6L2087.0 1159.4L2090.0 1158.2L2093.0 1157.0L2096.0 1155.7L2099.0 1154.5L2102.0 1153.2L2105.0 1152.0L2108.0 1150.7L2111.0 1149.5L2114.0 1148.4L2117.0 1147.3L2120.0 1146.3L2123.0 1145.4L2126.0 1144.7L2129.0 1144.0L2132.0 1143.6L2135.0 1143.3L2138.0 1143.1L2141.0 1143.2L2144.0 1143.5L2147.0 1144.0L2150.0 1144.8L2153.0 1145.9L2156.0 1147.2L2159.0 1148.8L2162.0 1150.5L2165.0 1152.5L2168.0 1154.7L2171.0 1157.1L2174.0 1159.6L2177.0 1162.2L2180.0 1165.0L2183.0 1167.9L2186.0 1170.8L2189.0 1173.8L2192.0 1176.9L2195.0 1180.0L2198.0 1183.1L2201.0 1186.2L2204.0 1189.3L2207.0 1192.4L2210.0 1195.5L2213.0 1198.5L2216.0 1201.5L2219.0 1204.4L2222.0 1207.3L2225.0 1210.1L2228.0 1212.8L2231.0 1215.4L2234.0 1218.0L2237.0 1220.4L2240.0 1222.7L2243.0 1224.9L2243.0 1273.0L1832.0 1273.0Z" fill="#f8e845" fill-opacity="0.7" stroke="none"/><path d="M1832.0 1202.3L1835.0 1199.1L1838.0 1195.8L1841.0 1192.7L1844.0 1189.5L1847.0 1186.5L1850.0 1183.5L1853.0 1180.5L1856.0 1177.6L1859.0 1174.7L1862.0 1171.9L1865.0 1169.2L1868.0 1166.5L1871.0 1163.9L1874.0 1161.4L1877.0 1158.9L1880.0 1156.5L1883.0 1154.1L1886.0 1151.9L1889.0 1149.7L1892.0 1147.5L1895.0 1145.5L1898.0 1143.5L1901.0 1141.6L1904.0 1139.8L1907.0 1138.1L1910.0 1136.5L1913.0 1134.9L1916.0 1133.5L1919.0 1132.2L1922.0 1131.1L1925.0 1130.0L1928.0 1129.1L1931.0 1128.3L1934.0 1127.7L1937.0 1127.2L1940.0 1126.9L1943.0 1126.7L1946.0 1126.7L1949.0 1126.9L1952.0 1127.2L1955.0 1127.7L1958.0 1128.4L1961.0 1129.1L1964.0 1130.1L1967.0 1131.1L1970.0 1132.2L1973.0 1133.5L1976.0 1134.8L1979.0 1136.2L1982.0 1137.7L1985.0 1139.2L1988.0 1140.8L1991.0 1142.4L1994.0 1144.1L1997.0 1145.8L2000.0 1147.4L2003.0 1149.1L2006.0 1150.8L2009.0 1152.4L2012.0 1154.0L2015.0 1155.5L2018.0 1157.1L2021.0 1158.5L2024.0 1159.9L2027.0 1161.1L2030.0 1162.3L2033.0 1163.4L2036.0 1164.4L2039.0 1165.2L2042.0 1165.9L2045.0 1166.5L2048.0 1166.9L2051.0 1167.1L2054.0 1167.2L2057.0 1167.1L2060.0 1166.8L2063.0 1166.4L2066.0 1165.9L2069.0 1165.2L2072.0 1164.5L2075.0 1163.6L2078.0 1162.7L2081.0 1161.6L2084.0 1160.6L2087.0 1159.4L2090.0 1158.2L2093.0 1157.0L2096.0 1155.7L2099.0 1154.5L2102.0 1153.2L2105.0 1152.0L2108.0 1150.7L2111.0 1149.5L2114.0 1148.4L2117.0 1147.3L2120.0 1146.3L2123.0 1145.4L2126.0 1144.7L2129.0 1144.0L2132.0 1143.6L2135.0 1143.3L2138.0 1143.1L2141.0 1143.2L2144.0 1143.5L2147.0 1144.0L2150.0 1144.8L2153.0 1145.9L2156.0 1147.2L2159.0 1148.8L2162.0 1150.5L2165.0 1152.5L2168.0 1154.7L2171.0 1157.1L2174.0 1159.6L2177.0 1162.2L2180.0 1165.0L2183.0 1167.9L2186.0 1170.8L2189.0 1173.8L2192.0 1176.9L2195.0 1180.0L2198.0 1183.1L2201.0 1186.2L2204.0 1189.3L2207.0 1192.4L2210.0 1195.5L2213.0 1198.5L2216.0 1201.5L2219.0 1204.4L2222.0 1207.3L2225.0 1210.1L2228.0 1212.8L2231.0 1215.4L2234.0 1218.0L2237.0 1220.4L2240.0 1222.7L2243.0 1224.9" fill="none" stroke="#000" stroke-width="2.35" stroke-linejoin="round"/><text x="2037.1" y="1008.1" text-anchor="middle" font-size="19.7" letter-spacing="0.36" fill="#1a1a1a">dcd C.2.1.2.1</text><text x="1831.6" y="1310.2" text-anchor="middle" font-size="19.6" letter-spacing="0.1" fill="#4d4d4d">0</text><text x="1944.2" y="1310.2" text-anchor="middle" font-size="19.6" letter-spacing="0.1" fill="#4d4d4d">300</text><text x="2056.8" y="1310.2" text-anchor="middle" font-size="19.6" letter-spacing="0.1" fill="#4d4d4d">600</text><text x="2169.4" y="1310.2" text-anchor="middle" font-size="19.6" letter-spacing="0.1" fill="#4d4d4d">900</text></g>
<g><path d="M2352.40 1020.3V1284.2M2465.00 1020.3V1284.2M2577.60 1020.3V1284.2M2690.20 1020.3V1284.2M2275.8 1238.09H2727.4M2275.8 1169.65H2727.4M2275.8 1101.22H2727.4M2275.8 1032.79H2727.4" stroke="#ebebeb" stroke-width="1.17" fill="none"/><path d="M2296.10 1020.3V1284.2M2408.70 1020.3V1284.2M2521.30 1020.3V1284.2M2633.90 1020.3V1284.2M2275.8 1272.30H2727.4M2275.8 1203.87H2727.4M2275.8 1135.44H2727.4M2275.8 1067.01H2727.4" stroke="#ebebeb" stroke-width="2.35" fill="none"/><path d="M2297.0 1178.8L2300.0 1172.8L2303.0 1166.7L2306.0 1160.5L2309.1 1154.2L2312.1 1148.0L2315.1 1141.8L2318.1 1135.7L2321.1 1129.8L2324.1 1124.2L2327.1 1118.8L2330.2 1113.7L2333.2 1109.0L2336.2 1104.8L2339.2 1101.0L2342.2 1097.8L2345.2 1095.2L2348.2 1093.1L2351.3 1091.6L2354.3 1090.6L2357.3 1090.1L2360.3 1090.1L2363.3 1090.6L2366.3 1091.4L2369.4 1092.7L2372.4 1094.3L2375.4 1096.3L2378.4 1098.5L2381.4 1100.9L2384.4 1103.4L2387.4 1105.9L2390.5 1108.5L2393.5 1111.0L2396.5 1113.4L2399.5 1115.8L2402.5 1118.1L2405.5 1120.3L2408.5 1122.4L2411.6 1124.3L2414.6 1126.2L2417.6 1127.9L2420.6 1129.4L2423.6 1130.8L2426.6 1132.0L2429.6 1133.1L2432.7 1133.9L2435.7 1134.5L2438.7 1135.0L2441.7 1135.2L2444.7 1135.3L2447.7 1135.3L2450.8 1135.1L2453.8 1134.9L2456.8 1134.6L2459.8 1134.3L2462.8 1134.1L2465.8 1133.8L2468.8 1133.6L2471.9 1133.5L2474.9 1133.5L2477.9 1133.6L2480.9 1133.9L2483.9 1134.3L2486.9 1134.9L2489.9 1135.7L2493.0 1136.5L2496.0 1137.5L2499.0 1138.6L2502.0 1139.8L2505.0 1141.1L2508.0 1142.4L2511.0 1143.8L2514.1 1145.3L2517.1 1146.8L2520.1 1148.3L2523.1 1149.8L2526.1 1151.3L2529.1 1152.8L2532.1 1154.3L2535.2 1155.7L2538.2 1157.2L2541.2 1158.5L2544.2 1159.9L2547.2 1161.2L2550.2 1162.5L2553.2 1163.8L2556.3 1165.1L2559.3 1166.4L2562.3 1167.6L2565.3 1168.9L2568.3 1170.2L2571.3 1171.4L2574.4 1172.7L2577.4 1174.0L2580.4 1175.3L2583.4 1176.7L2586.4 1178.1L2589.4 1179.4L2592.4 1180.9L2595.5 1182.3L2598.5 1183.9L2601.5 1185.4L2604.5 1187.0L2607.5 1188.7L2610.5 1190.4L2613.5 1192.1L2616.6 1193.9L2619.6 1195.8L2622.6 1197.7L2625.6 1199.7L2628.6 1201.7L2631.6 1203.8L2634.6 1206.0L2637.7 1208.2L2640.7 1210.5L2643.7 1212.9L2646.7 1215.4L2649.7 1217.9L2652.7 1220.5L2655.8 1223.1L2658.8 1225.7L2661.8 1228.4L2664.8 1230.9L2667.8 1233.4L2670.8 1235.9L2673.8 1238.2L2676.9 1240.4L2679.9 1242.4L2682.9 1244.2L2685.9 1245.8L2688.9 1247.2L2691.9 1248.5L2694.9 1249.5L2698.0 1250.3L2701.0 1250.8L2704.0 1251.2L2707.0 1251.3L2707.0 1273.0L2297.0 1273.0Z" fill="#3a044f" fill-opacity="0.7" stroke="none"/><path d="M2297.0 1178.8L2300.0 1172.8L2303.0 1166.7L2306.0 1160.5L2309.1 1154.2L2312.1 1148.0L2315.1 1141.8L2318.1 1135.7L2321.1 1129.8L2324.1 1124.2L2327.1 1118.8L2330.2 1113.7L2333.2 1109.0L2336.2 1104.8L2339.2 1101.0L2342.2 1097.8L2345.2 1095.2L2348.2 1093.1L2351.3 1091.6L2354.3 1090.6L2357.3 1090.1L2360.3 1090.1L2363.3 1090.6L2366.3 1091.4L2369.4 1092.7L2372.4 1094.3L2375.4 1096.3L2378.4 1098.5L2381.4 1100.9L2384.4 1103.4L2387.4 1105.9L2390.5 1108.5L2393.5 1111.0L2396.5 1113.4L2399.5 1115.8L2402.5 1118.1L2405.5 1120.3L2408.5 1122.4L2411.6 1124.3L2414.6 1126.2L2417.6 1127.9L2420.6 1129.4L2423.6 1130.8L2426.6 1132.0L2429.6 1133.1L2432.7 1133.9L2435.7 1134.5L2438.7 1135.0L2441.7 1135.2L2444.7 1135.3L2447.7 1135.3L2450.8 1135.1L2453.8 1134.9L2456.8 1134.6L2459.8 1134.3L2462.8 1134.1L2465.8 1133.8L2468.8 1133.6L2471.9 1133.5L2474.9 1133.5L2477.9 1133.6L2480.9 1133.9L2483.9 1134.3L2486.9 1134.9L2489.9 1135.7L2493.0 1136.5L2496.0 1137.5L2499.0 1138.6L2502.0 1139.8L2505.0 1141.1L2508.0 1142.4L2511.0 1143.8L2514.1 1145.3L2517.1 1146.8L2520.1 1148.3L2523.1 1149.8L2526.1 1151.3L2529.1 1152.8L2532.1 1154.3L2535.2 1155.7L2538.2 1157.2L2541.2 1158.5L2544.2 1159.9L2547.2 1161.2L2550.2 1162.5L2553.2 1163.8L2556.3 1165.1L2559.3 1166.4L2562.3 1167.6L2565.3 1168.9L2568.3 1170.2L2571.3 1171.4L2574.4 1172.7L2577.4 1174.0L2580.4 1175.3L2583.4 1176.7L2586.4 1178.1L2589.4 1179.4L2592.4 1180.9L2595.5 1182.3L2598.5 1183.9L2601.5 1185.4L2604.5 1187.0L2607.5 1188.7L2610.5 1190.4L2613.5 1192.1L2616.6 1193.9L2619.6 1195.8L2622.6 1197.7L2625.6 1199.7L2628.6 1201.7L2631.6 1203.8L2634.6 1206.0L2637.7 1208.2L2640.7 1210.5L2643.7 1212.9L2646.7 1215.4L2649.7 1217.9L2652.7 1220.5L2655.8 1223.1L2658.8 1225.7L2661.8 1228.4L2664.8 1230.9L2667.8 1233.4L2670.8 1235.9L2673.8 1238.2L2676.9 1240.4L2679.9 1242.4L2682.9 1244.2L2685.9 1245.8L2688.9 1247.2L2691.9 1248.5L2694.9 1249.5L2698.0 1250.3L2701.0 1250.8L2704.0 1251.2L2707.0 1251.3" fill="none" stroke="#000" stroke-width="2.35" stroke-linejoin="round"/><path d="M2297.0 1176.7L2300.0 1170.2L2303.0 1163.5L2306.0 1156.7L2309.1 1149.8L2312.1 1142.9L2315.1 1136.0L2318.1 1129.1L2321.1 1122.2L2324.1 1115.4L2327.1 1108.7L2330.2 1102.1L2333.2 1095.6L2336.2 1089.3L2339.2 1083.2L2342.2 1077.3L2345.2 1071.7L2348.2 1066.3L2351.3 1061.2L2354.3 1056.4L2357.3 1052.0L2360.3 1048.0L2363.3 1044.4L2366.3 1041.2L2369.4 1038.5L2372.4 1036.2L2375.4 1034.5L2378.4 1033.2L2381.4 1032.6L2384.4 1032.5L2387.4 1033.1L2390.5 1034.3L2393.5 1036.1L2396.5 1038.6L2399.5 1041.6L2402.5 1045.1L2405.5 1049.1L2408.5 1053.5L2411.6 1058.2L2414.6 1063.2L2417.6 1068.5L2420.6 1074.0L2423.6 1079.6L2426.6 1085.3L2429.6 1091.0L2432.7 1096.7L2435.7 1102.4L2438.7 1107.9L2441.7 1113.3L2444.7 1118.4L2447.7 1123.3L2450.8 1127.9L2453.8 1132.2L2456.8 1136.2L2459.8 1139.9L2462.8 1143.3L2465.8 1146.3L2468.8 1148.9L2471.9 1151.1L2474.9 1153.0L2477.9 1154.5L2480.9 1155.7L2483.9 1156.7L2486.9 1157.4L2489.9 1157.8L2493.0 1158.1L2496.0 1158.3L2499.0 1158.3L2502.0 1158.3L2505.0 1158.2L2508.0 1158.2L2511.0 1158.2L2514.1 1158.3L2517.1 1158.6L2520.1 1159.0L2523.1 1159.6L2526.1 1160.4L2529.1 1161.5L2532.1 1162.7L2535.2 1164.2L2538.2 1165.9L2541.2 1167.9L2544.2 1170.0L2547.2 1172.4L2550.2 1174.9L2553.2 1177.7L2556.3 1180.6L2559.3 1183.7L2562.3 1186.9L2565.3 1190.2L2568.3 1193.6L2571.3 1197.1L2574.4 1200.6L2577.4 1204.1L2580.4 1207.5L2583.4 1210.9L2586.4 1214.2L2589.4 1217.4L2592.4 1220.4L2595.5 1223.3L2598.5 1225.9L2601.5 1228.3L2604.5 1230.5L2607.5 1232.5L2610.5 1234.3L2613.5 1236.0L2616.6 1237.4L2619.6 1238.8L2622.6 1239.9L2625.6 1241.0L2628.6 1241.9L2631.6 1242.7L2634.6 1243.4L2637.7 1244.0L2640.7 1244.5L2643.7 1244.9L2646.7 1245.3L2649.7 1245.6L2652.7 1245.9L2655.8 1246.1L2658.8 1246.3L2661.8 1246.5L2664.8 1246.7L2667.8 1247.0L2670.8 1247.2L2673.8 1247.5L2676.9 1247.8L2679.9 1248.2L2682.9 1248.7L2685.9 1249.3L2688.9 1250.0L2691.9 1250.7L2694.9 1251.6L2698.0 1252.5L2701.0 1253.6L2704.0 1254.8L2707.0 1256.0L2707.0 1273.0L2297.0 1273.0Z" fill="#3b8d8b" fill-opacity="0.7" stroke="none"/><path d="M2297.0 1176.7L2300.0 1170.2L2303.0 1163.5L2306.0 1156.7L2309.1 1149.8L2312.1 1142.9L2315.1 1136.0L2318.1 1129.1L2321.1 1122.2L2324.1 1115.4L2327.1 1108.7L2330.2 1102.1L2333.2 1095.6L2336.2 1089.3L2339.2 1083.2L2342.2 1077.3L2345.2 1071.7L2348.2 1066.3L2351.3 1061.2L2354.3 1056.4L2357.3 1052.0L2360.3 1048.0L2363.3 1044.4L2366.3 1041.2L2369.4 1038.5L2372.4 1036.2L2375.4 1034.5L2378.4 1033.2L2381.4 1032.6L2384.4 1032.5L2387.4 1033.1L2390.5 1034.3L2393.5 1036.1L2396.5 1038.6L2399.5 1041.6L2402.5 1045.1L2405.5 1049.1L2408.5 1053.5L2411.6 1058.2L2414.6 1063.2L2417.6 1068.5L2420.6 1074.0L2423.6 1079.6L2426.6 1085.3L2429.6 1091.0L2432.7 1096.7L2435.7 1102.4L2438.7 1107.9L2441.7 1113.3L2444.7 1118.4L2447.7 1123.3L2450.8 1127.9L2453.8 1132.2L2456.8 1136.2L2459.8 1139.9L2462.8 1143.3L2465.8 1146.3L2468.8 1148.9L2471.9 1151.1L2474.9 1153.0L2477.9 1154.5L2480.9 1155.7L2483.9 1156.7L2486.9 1157.4L2489.9 1157.8L2493.0 1158.1L2496.0 1158.3L2499.0 1158.3L2502.0 1158.3L2505.0 1158.2L2508.0 1158.2L2511.0 1158.2L2514.1 1158.3L2517.1 1158.6L2520.1 1159.0L2523.1 1159.6L2526.1 1160.4L2529.1 1161.5L2532.1 1162.7L2535.2 1164.2L2538.2 1165.9L2541.2 1167.9L2544.2 1170.0L2547.2 1172.4L2550.2 1174.9L2553.2 1177.7L2556.3 1180.6L2559.3 1183.7L2562.3 1186.9L2565.3 1190.2L2568.3 1193.6L2571.3 1197.1L2574.4 1200.6L2577.4 1204.1L2580.4 1207.5L2583.4 1210.9L2586.4 1214.2L2589.4 1217.4L2592.4 1220.4L2595.5 1223.3L2598.5 1225.9L2601.5 1228.3L2604.5 1230.5L2607.5 1232.5L2610.5 1234.3L2613.5 1236.0L2616.6 1237.4L2619.6 1238.8L2622.6 1239.9L2625.6 1241.0L2628.6 1241.9L2631.6 1242.7L2634.6 1243.4L2637.7 1244.0L2640.7 1244.5L2643.7 1244.9L2646.7 1245.3L2649.7 1245.6L2652.7 1245.9L2655.8 1246.1L2658.8 1246.3L2661.8 1246.5L2664.8 1246.7L2667.8 1247.0L2670.8 1247.2L2673.8 1247.5L2676.9 1247.8L2679.9 1248.2L2682.9 1248.7L2685.9 1249.3L2688.9 1250.0L2691.9 1250.7L2694.9 1251.6L2698.0 1252.5L2701.0 1253.6L2704.0 1254.8L2707.0 1256.0" fill="none" stroke="#000" stroke-width="2.35" stroke-linejoin="round"/><path d="M2297.0 1178.1L2300.0 1171.2L2303.0 1164.3L2306.0 1157.3L2309.1 1150.3L2312.1 1143.4L2315.1 1136.6L2318.1 1129.9L2321.1 1123.3L2324.1 1116.9L2327.1 1110.6L2330.2 1104.7L2333.2 1099.0L2336.2 1093.6L2339.2 1088.5L2342.2 1083.9L2345.2 1079.6L2348.2 1075.7L2351.3 1072.2L2354.3 1069.2L2357.3 1066.5L2360.3 1064.2L2363.3 1062.3L2366.3 1060.8L2369.4 1059.8L2372.4 1059.1L2375.4 1058.8L2378.4 1058.9L2381.4 1059.4L2384.4 1060.2L2387.4 1061.5L2390.5 1063.1L2393.5 1065.1L2396.5 1067.4L2399.5 1069.9L2402.5 1072.8L2405.5 1075.8L2408.5 1079.1L2411.6 1082.6L2414.6 1086.2L2417.6 1089.9L2420.6 1093.8L2423.6 1097.7L2426.6 1101.7L2429.6 1105.7L2432.7 1109.7L2435.7 1113.7L2438.7 1117.6L2441.7 1121.6L2444.7 1125.4L2447.7 1129.2L2450.8 1132.9L2453.8 1136.5L2456.8 1140.0L2459.8 1143.3L2462.8 1146.5L2465.8 1149.6L2468.8 1152.5L2471.9 1155.3L2474.9 1157.8L2477.9 1160.2L2480.9 1162.5L2483.9 1164.6L2486.9 1166.6L2489.9 1168.4L2493.0 1170.1L2496.0 1171.6L2499.0 1173.1L2502.0 1174.4L2505.0 1175.6L2508.0 1176.7L2511.0 1177.7L2514.1 1178.7L2517.1 1179.5L2520.1 1180.2L2523.1 1180.9L2526.1 1181.5L2529.1 1182.0L2532.1 1182.5L2535.2 1182.9L2538.2 1183.3L2541.2 1183.6L2544.2 1183.9L2547.2 1184.2L2550.2 1184.4L2553.2 1184.6L2556.3 1184.8L2559.3 1185.0L2562.3 1185.2L2565.3 1185.4L2568.3 1185.6L2571.3 1185.8L2574.4 1186.0L2577.4 1186.2L2580.4 1186.5L2583.4 1186.8L2586.4 1187.2L2589.4 1187.5L2592.4 1188.0L2595.5 1188.5L2598.5 1189.0L2601.5 1189.7L2604.5 1190.4L2607.5 1191.1L2610.5 1192.0L2613.5 1193.0L2616.6 1194.1L2619.6 1195.2L2622.6 1196.6L2625.6 1198.0L2628.6 1199.7L2631.6 1201.4L2634.6 1203.4L2637.7 1205.5L2640.7 1207.8L2643.7 1210.2L2646.7 1212.8L2649.7 1215.5L2652.7 1218.2L2655.8 1221.0L2658.8 1223.8L2661.8 1226.7L2664.8 1229.5L2667.8 1232.2L2670.8 1235.0L2673.8 1237.6L2676.9 1240.2L2679.9 1242.6L2682.9 1244.9L2685.9 1247.1L2688.9 1249.1L2691.9 1250.9L2694.9 1252.4L2698.0 1253.8L2701.0 1254.9L2704.0 1255.8L2707.0 1256.3L2707.0 1273.0L2297.0 1273.0Z" fill="#f8e845" fill-opacity="0.7" stroke="none"/><path d="M2297.0 1178.1L2300.0 1171.2L2303.0 1164.3L2306.0 1157.3L2309.1 1150.3L2312.1 1143.4L2315.1 1136.6L2318.1 1129.9L2321.1 1123.3L2324.1 1116.9L2327.1 1110.6L2330.2 1104.7L2333.2 1099.0L2336.2 1093.6L2339.2 1088.5L2342.2 1083.9L2345.2 1079.6L2348.2 1075.7L2351.3 1072.2L2354.3 1069.2L2357.3 1066.5L2360.3 1064.2L2363.3 1062.3L2366.3 1060.8L2369.4 1059.8L2372.4 1059.1L2375.4 1058.8L2378.4 1058.9L2381.4 1059.4L2384.4 1060.2L2387.4 1061.5L2390.5 1063.1L2393.5 1065.1L2396.5 1067.4L2399.5 1069.9L2402.5 1072.8L2405.5 1075.8L2408.5 1079.1L2411.6 1082.6L2414.6 1086.2L2417.6 1089.9L2420.6 1093.8L2423.6 1097.7L2426.6 1101.7L2429.6 1105.7L2432.7 1109.7L2435.7 1113.7L2438.7 1117.6L2441.7 1121.6L2444.7 1125.4L2447.7 1129.2L2450.8 1132.9L2453.8 1136.5L2456.8 1140.0L2459.8 1143.3L2462.8 1146.5L2465.8 1149.6L2468.8 1152.5L2471.9 1155.3L2474.9 1157.8L2477.9 1160.2L2480.9 1162.5L2483.9 1164.6L2486.9 1166.6L2489.9 1168.4L2493.0 1170.1L2496.0 1171.6L2499.0 1173.1L2502.0 1174.4L2505.0 1175.6L2508.0 1176.7L2511.0 1177.7L2514.1 1178.7L2517.1 1179.5L2520.1 1180.2L2523.1 1180.9L2526.1 1181.5L2529.1 1182.0L2532.1 1182.5L2535.2 1182.9L2538.2 1183.3L2541.2 1183.6L2544.2 1183.9L2547.2 1184.2L2550.2 1184.4L2553.2 1184.6L2556.3 1184.8L2559.3 1185.0L2562.3 1185.2L2565.3 1185.4L2568.3 1185.6L2571.3 1185.8L2574.4 1186.0L2577.4 1186.2L2580.4 1186.5L2583.4 1186.8L2586.4 1187.2L2589.4 1187.5L2592.4 1188.0L2595.5 1188.5L2598.5 1189.0L2601.5 1189.7L2604.5 1190.4L2607.5 1191.1L2610.5 1192.0L2613.5 1193.0L2616.6 1194.1L2619.6 1195.2L2622.6 1196.6L2625.6 1198.0L2628.6 1199.7L2631.6 1201.4L2634.6 1203.4L2637.7 1205.5L2640.7 1207.8L2643.7 1210.2L2646.7 1212.8L2649.7 1215.5L2652.7 1218.2L2655.8 1221.0L2658.8 1223.8L2661.8 1226.7L2664.8 1229.5L2667.8 1232.2L2670.8 1235.0L2673.8 1237.6L2676.9 1240.2L2679.9 1242.6L2682.9 1244.9L2685.9 1247.1L2688.9 1249.1L2691.9 1250.9L2694.9 1252.4L2698.0 1253.8L2701.0 1254.9L2704.0 1255.8L2707.0 1256.3" fill="none" stroke="#000" stroke-width="2.35" stroke-linejoin="round"/><text x="2501.6" y="1008.1" text-anchor="middle" font-size="19.7" letter-spacing="0.36" fill="#1a1a1a">dcd D.1.1.1.1</text><text x="2296.1" y="1310.2" text-anchor="middle" font-size="19.6" letter-spacing="0.1" fill="#4d4d4d">0</text><text x="2408.7" y="1310.2" text-anchor="middle" font-size="19.6" letter-spacing="0.1" fill="#4d4d4d">300</text><text x="2521.3" y="1310.2" text-anchor="middle" font-size="19.6" letter-spacing="0.1" fill="#4d4d4d">600</text><text x="2633.9" y="1310.2" text-anchor="middle" font-size="19.6" letter-spacing="0.1" fill="#4d4d4d">900</text></g>
<g><path d="M958.90 1336.6V1600.5M1071.50 1336.6V1600.5M1184.10 1336.6V1600.5M1296.70 1336.6V1600.5M882.3 1554.38H1333.9M882.3 1485.95H1333.9M882.3 1417.52H1333.9M882.3 1349.09H1333.9" stroke="#ebebeb" stroke-width="1.17" fill="none"/><path d="M902.60 1336.6V1600.5M1015.20 1336.6V1600.5M1127.80 1336.6V1600.5M1240.40 1336.6V1600.5M882.3 1588.60H1333.9M882.3 1520.17H1333.9M882.3 1451.74H1333.9M882.3 1383.31H1333.9" stroke="#ebebeb" stroke-width="2.35" fill="none"/><path d="M903.0 1533.9L906.0 1529.3L909.0 1524.3L912.0 1519.0L915.0 1513.4L918.0 1507.7L921.0 1502.0L924.0 1496.2L927.0 1490.7L930.0 1485.3L933.0 1480.2L936.0 1475.4L939.0 1470.9L942.0 1466.7L945.0 1462.6L948.0 1458.9L951.0 1455.3L954.0 1452.0L957.0 1448.9L960.0 1445.9L963.0 1443.1L966.0 1440.4L969.0 1437.6L972.0 1434.8L975.0 1431.9L978.0 1428.9L981.0 1425.8L984.0 1422.9L987.0 1420.3L990.0 1417.9L993.0 1415.8L996.0 1413.9L999.0 1412.2L1002.0 1410.7L1005.0 1409.3L1008.0 1408.1L1011.0 1407.0L1014.0 1406.1L1017.0 1405.2L1020.0 1404.5L1023.0 1404.0L1026.0 1403.5L1029.0 1403.2L1032.0 1402.9L1035.0 1402.8L1038.0 1402.8L1041.0 1402.9L1044.0 1403.1L1047.0 1403.3L1050.0 1403.7L1053.0 1404.2L1056.0 1404.7L1059.0 1405.3L1062.0 1406.0L1065.0 1406.8L1068.0 1407.6L1071.0 1408.5L1074.0 1409.5L1077.0 1410.5L1080.0 1411.5L1083.0 1412.7L1086.0 1413.8L1089.0 1415.0L1092.0 1416.3L1095.0 1417.6L1098.0 1418.9L1101.0 1420.2L1104.0 1421.6L1107.0 1423.0L1110.0 1424.4L1113.0 1425.8L1116.0 1427.2L1119.0 1428.7L1122.0 1430.2L1125.0 1431.7L1128.0 1433.3L1131.0 1435.0L1134.0 1436.7L1137.0 1438.5L1140.0 1440.4L1143.0 1442.5L1146.0 1444.6L1149.0 1446.8L1152.0 1449.2L1155.0 1451.8L1158.0 1454.5L1161.0 1457.3L1164.0 1460.3L1167.0 1463.5L1170.0 1466.9L1173.0 1470.5L1176.0 1474.4L1179.0 1478.3L1182.0 1482.5L1185.0 1486.7L1188.0 1491.0L1191.0 1495.4L1194.0 1499.8L1197.0 1504.1L1200.0 1508.5L1203.0 1512.7L1206.0 1516.8L1209.0 1520.7L1212.0 1524.5L1215.0 1528.0L1218.0 1531.3L1221.0 1534.3L1224.0 1537.0L1227.0 1539.5L1230.0 1541.6L1233.0 1543.4L1236.0 1545.0L1239.0 1546.3L1242.0 1547.3L1245.0 1548.1L1248.0 1548.6L1251.0 1548.8L1254.0 1548.9L1257.0 1548.8L1260.0 1548.6L1263.0 1548.4L1266.0 1548.2L1269.0 1548.0L1272.0 1547.9L1275.0 1548.0L1278.0 1548.1L1281.0 1548.4L1284.0 1548.7L1287.0 1549.1L1290.0 1549.7L1293.0 1550.3L1296.0 1551.0L1299.0 1551.8L1302.0 1552.7L1305.0 1553.6L1308.0 1554.7L1311.0 1555.8L1314.0 1557.0L1314.0 1589.0L903.0 1589.0Z" fill="#3a044f" fill-opacity="0.7" stroke="none"/><path d="M903.0 1533.9L906.0 1529.3L909.0 1524.3L912.0 1519.0L915.0 1513.4L918.0 1507.7L921.0 1502.0L924.0 1496.2L927.0 1490.7L930.0 1485.3L933.0 1480.2L936.0 1475.4L939.0 1470.9L942.0 1466.7L945.0 1462.6L948.0 1458.9L951.0 1455.3L954.0 1452.0L957.0 1448.9L960.0 1445.9L963.0 1443.1L966.0 1440.4L969.0 1437.6L972.0 1434.8L975.0 1431.9L978.0 1428.9L981.0 1425.8L984.0 1422.9L987.0 1420.3L990.0 1417.9L993.0 1415.8L996.0 1413.9L999.0 1412.2L1002.0 1410.7L1005.0 1409.3L1008.0 1408.1L1011.0 1407.0L1014.0 1406.1L1017.0 1405.2L1020.0 1404.5L1023.0 1404.0L1026.0 1403.5L1029.0 1403.2L1032.0 1402.9L1035.0 1402.8L1038.0 1402.8L1041.0 1402.9L1044.0 1403.1L1047.0 1403.3L1050.0 1403.7L1053.0 1404.2L1056.0 1404.7L1059.0 1405.3L1062.0 1406.0L1065.0 1406.8L1068.0 1407.6L1071.0 1408.5L1074.0 1409.5L1077.0 1410.5L1080.0 1411.5L1083.0 1412.7L1086.0 1413.8L1089.0 1415.0L1092.0 1416.3L1095.0 1417.6L1098.0 1418.9L1101.0 1420.2L1104.0 1421.6L1107.0 1423.0L1110.0 1424.4L1113.0 1425.8L1116.0 1427.2L1119.0 1428.7L1122.0 1430.2L1125.0 1431.7L1128.0 1433.3L1131.0 1435.0L1134.0 1436.7L1137.0 1438.5L1140.0 1440.4L1143.0 1442.5L1146.0 1444.6L1149.0 1446.8L1152.0 1449.2L1155.0 1451.8L1158.0 1454.5L1161.0 1457.3L1164.0 1460.3L1167.0 1463.5L1170.0 1466.9L1173.0 1470.5L1176.0 1474.4L1179.0 1478.3L1182.0 1482.5L1185.0 1486.7L1188.0 1491.0L1191.0 1495.4L1194.0 1499.8L1197.0 1504.1L1200.0 1508.5L1203.0 1512.7L1206.0 1516.8L1209.0 1520.7L1212.0 1524.5L1215.0 1528.0L1218.0 1531.3L1221.0 1534.3L1224.0 1537.0L1227.0 1539.5L1230.0 1541.6L1233.0 1543.4L1236.0 1545.0L1239.0 1546.3L1242.0 1547.3L1245.0 1548.1L1248.0 1548.6L1251.0 1548.8L1254.0 1548.9L1257.0 1548.8L1260.0 1548.6L1263.0 1548.4L1266.0 1548.2L1269.0 1548.0L1272.0 1547.9L1275.0 1548.0L1278.0 1548.1L1281.0 1548.4L1284.0 1548.7L1287.0 1549.1L1290.0 1549.7L1293.0 1550.3L1296.0 1551.0L1299.0 1551.8L1302.0 1552.7L1305.0 1553.6L1308.0 1554.7L1311.0 1555.8L1314.0 1557.0" fill="none" stroke="#000" stroke-width="2.35" stroke-linejoin="round"/><path d="M903.0 1488.4L906.0 1483.2L909.0 1478.3L912.0 1473.8L915.0 1469.6L918.0 1465.8L921.0 1462.2L924.0 1459.0L927.0 1456.1L930.0 1453.4L933.0 1451.0L936.0 1448.9L939.0 1447.1L942.0 1445.5L945.0 1444.1L948.0 1443.0L951.0 1442.0L954.0 1441.3L957.0 1440.8L960.0 1440.4L963.0 1440.3L966.0 1440.3L969.0 1440.4L972.0 1440.7L975.0 1441.1L978.0 1441.7L981.0 1442.3L984.0 1443.1L987.0 1443.9L990.0 1444.9L993.0 1445.9L996.0 1446.9L999.0 1448.1L1002.0 1449.2L1005.0 1450.4L1008.0 1451.7L1011.0 1452.9L1014.0 1454.2L1017.0 1455.5L1020.0 1456.7L1023.0 1458.0L1026.0 1459.2L1029.0 1460.4L1032.0 1461.6L1035.0 1462.7L1038.0 1463.8L1041.0 1464.8L1044.0 1465.7L1047.0 1466.6L1050.0 1467.4L1053.0 1468.0L1056.0 1468.6L1059.0 1469.1L1062.0 1469.5L1065.0 1469.8L1068.0 1469.9L1071.0 1470.0L1074.0 1470.0L1077.0 1469.9L1080.0 1469.7L1083.0 1469.4L1086.0 1469.1L1089.0 1468.7L1092.0 1468.2L1095.0 1467.6L1098.0 1467.0L1101.0 1466.3L1104.0 1465.6L1107.0 1464.8L1110.0 1464.0L1113.0 1463.1L1116.0 1462.2L1119.0 1461.3L1122.0 1460.3L1125.0 1459.4L1128.0 1458.5L1131.0 1457.6L1134.0 1456.7L1137.0 1455.9L1140.0 1455.2L1143.0 1454.6L1146.0 1454.0L1149.0 1453.6L1152.0 1453.3L1155.0 1453.1L1158.0 1453.0L1161.0 1453.2L1164.0 1453.4L1167.0 1453.9L1170.0 1454.6L1173.0 1455.5L1176.0 1456.6L1179.0 1457.9L1182.0 1459.4L1185.0 1461.1L1188.0 1462.9L1191.0 1464.9L1194.0 1467.1L1197.0 1469.4L1200.0 1471.9L1203.0 1474.4L1206.0 1477.1L1209.0 1479.9L1212.0 1482.8L1215.0 1485.8L1218.0 1488.9L1221.0 1492.0L1224.0 1495.2L1227.0 1498.5L1230.0 1501.8L1233.0 1505.1L1236.0 1508.4L1239.0 1511.7L1242.0 1515.0L1245.0 1518.3L1248.0 1521.6L1251.0 1524.8L1254.0 1528.0L1257.0 1531.1L1260.0 1534.1L1263.0 1537.0L1266.0 1539.9L1269.0 1542.6L1272.0 1545.2L1275.0 1547.7L1278.0 1550.1L1281.0 1552.4L1284.0 1554.5L1287.0 1556.6L1290.0 1558.5L1293.0 1560.2L1296.0 1561.9L1299.0 1563.4L1302.0 1564.8L1305.0 1566.0L1308.0 1567.1L1311.0 1568.0L1314.0 1568.8L1314.0 1589.0L903.0 1589.0Z" fill="#3b8d8b" fill-opacity="0.7" stroke="none"/><path d="M903.0 1488.4L906.0 1483.2L909.0 1478.3L912.0 1473.8L915.0 1469.6L918.0 1465.8L921.0 1462.2L924.0 1459.0L927.0 1456.1L930.0 1453.4L933.0 1451.0L936.0 1448.9L939.0 1447.1L942.0 1445.5L945.0 1444.1L948.0 1443.0L951.0 1442.0L954.0 1441.3L957.0 1440.8L960.0 1440.4L963.0 1440.3L966.0 1440.3L969.0 1440.4L972.0 1440.7L975.0 1441.1L978.0 1441.7L981.0 1442.3L984.0 1443.1L987.0 1443.9L990.0 1444.9L993.0 1445.9L996.0 1446.9L999.0 1448.1L1002.0 1449.2L1005.0 1450.4L1008.0 1451.7L1011.0 1452.9L1014.0 1454.2L1017.0 1455.5L1020.0 1456.7L1023.0 1458.0L1026.0 1459.2L1029.0 1460.4L1032.0 1461.6L1035.0 1462.7L1038.0 1463.8L1041.0 1464.8L1044.0 1465.7L1047.0 1466.6L1050.0 1467.4L1053.0 1468.0L1056.0 1468.6L1059.0 1469.1L1062.0 1469.5L1065.0 1469.8L1068.0 1469.9L1071.0 1470.0L1074.0 1470.0L1077.0 1469.9L1080.0 1469.7L1083.0 1469.4L1086.0 1469.1L1089.0 1468.7L1092.0 1468.2L1095.0 1467.6L1098.0 1467.0L1101.0 1466.3L1104.0 1465.6L1107.0 1464.8L1110.0 1464.0L1113.0 1463.1L1116.0 1462.2L1119.0 1461.3L1122.0 1460.3L1125.0 1459.4L1128.0 1458.5L1131.0 1457.6L1134.0 1456.7L1137.0 1455.9L1140.0 1455.2L1143.0 1454.6L1146.0 1454.0L1149.0 1453.6L1152.0 1453.3L1155.0 1453.1L1158.0 1453.0L1161.0 1453.2L1164.0 1453.4L1167.0 1453.9L1170.0 1454.6L1173.0 1455.5L1176.0 1456.6L1179.0 1457.9L1182.0 1459.4L1185.0 1461.1L1188.0 1462.9L1191.0 1464.9L1194.0 1467.1L1197.0 1469.4L1200.0 1471.9L1203.0 1474.4L1206.0 1477.1L1209.0 1479.9L1212.0 1482.8L1215.0 1485.8L1218.0 1488.9L1221.0 1492.0L1224.0 1495.2L1227.0 1498.5L1230.0 1501.8L1233.0 1505.1L1236.0 1508.4L1239.0 1511.7L1242.0 1515.0L1245.0 1518.3L1248.0 1521.6L1251.0 1524.8L1254.0 1528.0L1257.0 1531.1L1260.0 1534.1L1263.0 1537.0L1266.0 1539.9L1269.0 1542.6L1272.0 1545.2L1275.0 1547.7L1278.0 1550.1L1281.0 1552.4L1284.0 1554.5L1287.0 1556.6L1290.0 1558.5L1293.0 1560.2L1296.0 1561.9L1299.0 1563.4L1302.0 1564.8L1305.0 1566.0L1308.0 1567.1L1311.0 1568.0L1314.0 1568.8" fill="none" stroke="#000" stroke-width="2.35" stroke-linejoin="round"/><path d="M903.0 1483.0L906.0 1478.1L909.0 1473.7L912.0 1469.7L915.0 1466.2L918.0 1463.1L921.0 1460.4L924.0 1458.1L927.0 1456.1L930.0 1454.5L933.0 1453.3L936.0 1452.3L939.0 1451.7L942.0 1451.3L945.0 1451.2L948.0 1451.3L951.0 1451.7L954.0 1452.3L957.0 1453.1L960.0 1454.0L963.0 1455.1L966.0 1456.3L969.0 1457.6L972.0 1458.9L975.0 1460.2L978.0 1461.5L981.0 1462.7L984.0 1463.8L987.0 1464.8L990.0 1465.7L993.0 1466.3L996.0 1466.7L999.0 1466.9L1002.0 1466.8L1005.0 1466.3L1008.0 1465.6L1011.0 1464.7L1014.0 1463.5L1017.0 1462.1L1020.0 1460.6L1023.0 1458.9L1026.0 1457.2L1029.0 1455.3L1032.0 1453.4L1035.0 1451.5L1038.0 1449.6L1041.0 1447.7L1044.0 1445.9L1047.0 1444.2L1050.0 1442.6L1053.0 1441.1L1056.0 1439.7L1059.0 1438.4L1062.0 1437.3L1065.0 1436.3L1068.0 1435.4L1071.0 1434.6L1074.0 1434.0L1077.0 1433.6L1080.0 1433.3L1083.0 1433.2L1086.0 1433.2L1089.0 1433.4L1092.0 1433.8L1095.0 1434.3L1098.0 1435.0L1101.0 1435.9L1104.0 1436.9L1107.0 1438.0L1110.0 1439.2L1113.0 1440.6L1116.0 1442.0L1119.0 1443.4L1122.0 1444.9L1125.0 1446.5L1128.0 1448.1L1131.0 1449.7L1134.0 1451.3L1137.0 1452.9L1140.0 1454.5L1143.0 1456.0L1146.0 1457.5L1149.0 1458.9L1152.0 1460.2L1155.0 1461.5L1158.0 1462.8L1161.0 1464.1L1164.0 1465.3L1167.0 1466.6L1170.0 1467.8L1173.0 1469.1L1176.0 1470.4L1179.0 1471.7L1182.0 1473.0L1185.0 1474.4L1188.0 1475.8L1191.0 1477.4L1194.0 1479.0L1197.0 1480.6L1200.0 1482.4L1203.0 1484.3L1206.0 1486.2L1209.0 1488.3L1212.0 1490.4L1215.0 1492.7L1218.0 1495.0L1221.0 1497.3L1224.0 1499.8L1227.0 1502.3L1230.0 1504.8L1233.0 1507.4L1236.0 1510.0L1239.0 1512.6L1242.0 1515.3L1245.0 1518.0L1248.0 1520.7L1251.0 1523.4L1254.0 1526.1L1257.0 1528.8L1260.0 1531.4L1263.0 1534.1L1266.0 1536.7L1269.0 1539.3L1272.0 1541.9L1275.0 1544.5L1278.0 1547.0L1281.0 1549.4L1284.0 1551.8L1287.0 1554.1L1290.0 1556.4L1293.0 1558.6L1296.0 1560.8L1299.0 1562.8L1302.0 1564.8L1305.0 1566.7L1308.0 1568.5L1311.0 1570.2L1314.0 1571.8L1314.0 1589.0L903.0 1589.0Z" fill="#f8e845" fill-opacity="0.7" stroke="none"/><path d="M903.0 1483.0L906.0 1478.1L909.0 1473.7L912.0 1469.7L915.0 1466.2L918.0 1463.1L921.0 1460.4L924.0 1458.1L927.0 1456.1L930.0 1454.5L933.0 1453.3L936.0 1452.3L939.0 1451.7L942.0 1451.3L945.0 1451.2L948.0 1451.3L951.0 1451.7L954.0 1452.3L957.0 1453.1L960.0 1454.0L963.0 1455.1L966.0 1456.3L969.0 1457.6L972.0 1458.9L975.0 1460.2L978.0 1461.5L981.0 1462.7L984.0 1463.8L987.0 1464.8L990.0 1465.7L993.0 1466.3L996.0 1466.7L999.0 1466.9L1002.0 1466.8L1005.0 1466.3L1008.0 1465.6L1011.0 1464.7L1014.0 1463.5L1017.0 1462.1L1020.0 1460.6L1023.0 1458.9L1026.0 1457.2L1029.0 1455.3L1032.0 1453.4L1035.0 1451.5L1038.0 1449.6L1041.0 1447.7L1044.0 1445.9L1047.0 1444.2L1050.0 1442.6L1053.0 1441.1L1056.0 1439.7L1059.0 1438.4L1062.0 1437.3L1065.0 1436.3L1068.0 1435.4L1071.0 1434.6L1074.0 1434.0L1077.0 1433.6L1080.0 1433.3L1083.0 1433.2L1086.0 1433.2L1089.0 1433.4L1092.0 1433.8L1095.0 1434.3L1098.0 1435.0L1101.0 1435.9L1104.0 1436.9L1107.0 1438.0L1110.0 1439.2L1113.0 1440.6L1116.0 1442.0L1119.0 1443.4L1122.0 1444.9L1125.0 1446.5L1128.0 1448.1L1131.0 1449.7L1134.0 1451.3L1137.0 1452.9L1140.0 1454.5L1143.0 1456.0L1146.0 1457.5L1149.0 1458.9L1152.0 1460.2L1155.0 1461.5L1158.0 1462.8L1161.0 1464.1L1164.0 1465.3L1167.0 1466.6L1170.0 1467.8L1173.0 1469.1L1176.0 1470.4L1179.0 1471.7L1182.0 1473.0L1185.0 1474.4L1188.0 1475.8L1191.0 1477.4L1194.0 1479.0L1197.0 1480.6L1200.0 1482.4L1203.0 1484.3L1206.0 1486.2L1209.0 1488.3L1212.0 1490.4L1215.0 1492.7L1218.0 1495.0L1221.0 1497.3L1224.0 1499.8L1227.0 1502.3L1230.0 1504.8L1233.0 1507.4L1236.0 1510.0L1239.0 1512.6L1242.0 1515.3L1245.0 1518.0L1248.0 1520.7L1251.0 1523.4L1254.0 1526.1L1257.0 1528.8L1260.0 1531.4L1263.0 1534.1L1266.0 1536.7L1269.0 1539.3L1272.0 1541.9L1275.0 1544.5L1278.0 1547.0L1281.0 1549.4L1284.0 1551.8L1287.0 1554.1L1290.0 1556.4L1293.0 1558.6L1296.0 1560.8L1299.0 1562.8L1302.0 1564.8L1305.0 1566.7L1308.0 1568.5L1311.0 1570.2L1314.0 1571.8" fill="none" stroke="#000" stroke-width="2.35" stroke-linejoin="round"/><text x="1108.1" y="1324.4" text-anchor="middle" font-size="19.7" letter-spacing="0.36" fill="#1a1a1a">dcd D.1.1.4.2</text><text x="870.7" y="1595.6" text-anchor="end" font-size="19.6" letter-spacing="0.1" fill="#4d4d4d">0.0000</text><text x="870.7" y="1527.2" text-anchor="end" font-size="19.6" letter-spacing="0.1" fill="#4d4d4d">0.0005</text><text x="870.7" y="1458.7" text-anchor="end" font-size="19.6" letter-spacing="0.1" fill="#4d4d4d">0.0010</text><text x="870.7" y="1390.3" text-anchor="end" font-size="19.6" letter-spacing="0.1" fill="#4d4d4d">0.0015</text><text x="902.6" y="1626.5" text-anchor="middle" font-size="19.6" letter-spacing="0.1" fill="#4d4d4d">0</text><text x="1015.2" y="1626.5" text-anchor="middle" font-size="19.6" letter-spacing="0.1" fill="#4d4d4d">300</text><text x="1127.8" y="1626.5" text-anchor="middle" font-size="19.6" letter-spacing="0.1" fill="#4d4d4d">600</text><text x="1240.4" y="1626.5" text-anchor="middle" font-size="19.6" letter-spacing="0.1" fill="#4d4d4d">900</text></g>
<g><path d="M1423.40 1336.6V1600.5M1536.00 1336.6V1600.5M1648.60 1336.6V1600.5M1761.20 1336.6V1600.5M1346.8 1554.38H1798.4M1346.8 1485.95H1798.4M1346.8 1417.52H1798.4M1346.8 1349.09H1798.4" stroke="#ebebeb" stroke-width="1.17" fill="none"/><path d="M1367.10 1336.6V1600.5M1479.70 1336.6V1600.5M1592.30 1336.6V1600.5M1704.90 1336.6V1600.5M1346.8 1588.60H1798.4M1346.8 1520.17H1798.4M1346.8 1451.74H1798.4M1346.8 1383.31H1798.4" stroke="#ebebeb" stroke-width="2.35" fill="none"/><path d="M1368.0 1530.1L1371.0 1524.8L1374.0 1519.5L1377.0 1514.3L1380.1 1509.1L1383.1 1504.0L1386.1 1499.0L1389.1 1494.0L1392.1 1489.1L1395.1 1484.4L1398.1 1479.7L1401.2 1475.1L1404.2 1470.6L1407.2 1466.3L1410.2 1462.1L1413.2 1458.1L1416.2 1454.2L1419.2 1450.5L1422.3 1447.0L1425.3 1443.7L1428.3 1440.5L1431.3 1437.6L1434.3 1434.8L1437.3 1432.2L1440.4 1429.7L1443.4 1427.5L1446.4 1425.4L1449.4 1423.5L1452.4 1421.7L1455.4 1420.1L1458.4 1418.7L1461.5 1417.5L1464.5 1416.4L1467.5 1415.4L1470.5 1414.7L1473.5 1414.1L1476.5 1413.6L1479.5 1413.3L1482.6 1413.1L1485.6 1413.1L1488.6 1413.2L1491.6 1413.5L1494.6 1413.8L1497.6 1414.3L1500.6 1414.8L1503.7 1415.5L1506.7 1416.2L1509.7 1417.0L1512.7 1417.9L1515.7 1418.9L1518.7 1419.9L1521.8 1421.0L1524.8 1422.1L1527.8 1423.2L1530.8 1424.4L1533.8 1425.6L1536.8 1426.8L1539.8 1428.0L1542.9 1429.3L1545.9 1430.5L1548.9 1431.9L1551.9 1433.2L1554.9 1434.6L1557.9 1436.0L1560.9 1437.5L1564.0 1439.0L1567.0 1440.6L1570.0 1442.2L1573.0 1443.9L1576.0 1445.7L1579.0 1447.5L1582.0 1449.4L1585.1 1451.4L1588.1 1453.5L1591.1 1455.7L1594.1 1458.0L1597.1 1460.5L1600.1 1463.1L1603.1 1465.8L1606.2 1468.6L1609.2 1471.7L1612.2 1474.8L1615.2 1478.0L1618.2 1481.3L1621.2 1484.5L1624.2 1487.8L1627.3 1491.0L1630.3 1494.1L1633.3 1497.1L1636.3 1500.0L1639.3 1502.7L1642.3 1505.3L1645.4 1507.7L1648.4 1509.9L1651.4 1512.0L1654.4 1514.0L1657.4 1515.8L1660.4 1517.4L1663.4 1518.8L1666.5 1520.0L1669.5 1521.0L1672.5 1521.9L1675.5 1522.5L1678.5 1523.0L1681.5 1523.2L1684.5 1523.3L1687.6 1523.2L1690.6 1522.9L1693.6 1522.6L1696.6 1522.1L1699.6 1521.6L1702.6 1521.0L1705.6 1520.4L1708.7 1519.8L1711.7 1519.2L1714.7 1518.6L1717.7 1518.2L1720.7 1517.8L1723.7 1517.5L1726.8 1517.3L1729.8 1517.3L1732.8 1517.5L1735.8 1517.9L1738.8 1518.4L1741.8 1519.2L1744.8 1520.1L1747.9 1521.2L1750.9 1522.3L1753.9 1523.6L1756.9 1525.0L1759.9 1526.5L1762.9 1528.0L1765.9 1529.5L1769.0 1531.0L1772.0 1532.6L1775.0 1534.1L1778.0 1535.6L1778.0 1589.0L1368.0 1589.0Z" fill="#3a044f" fill-opacity="0.7" stroke="none"/><path d="M1368.0 1530.1L1371.0 1524.8L1374.0 1519.5L1377.0 1514.3L1380.1 1509.1L1383.1 1504.0L1386.1 1499.0L1389.1 1494.0L1392.1 1489.1L1395.1 1484.4L1398.1 1479.7L1401.2 1475.1L1404.2 1470.6L1407.2 1466.3L1410.2 1462.1L1413.2 1458.1L1416.2 1454.2L1419.2 1450.5L1422.3 1447.0L1425.3 1443.7L1428.3 1440.5L1431.3 1437.6L1434.3 1434.8L1437.3 1432.2L1440.4 1429.7L1443.4 1427.5L1446.4 1425.4L1449.4 1423.5L1452.4 1421.7L1455.4 1420.1L1458.4 1418.7L1461.5 1417.5L1464.5 1416.4L1467.5 1415.4L1470.5 1414.7L1473.5 1414.1L1476.5 1413.6L1479.5 1413.3L1482.6 1413.1L1485.6 1413.1L1488.6 1413.2L1491.6 1413.5L1494.6 1413.8L1497.6 1414.3L1500.6 1414.8L1503.7 1415.5L1506.7 1416.2L1509.7 1417.0L1512.7 1417.9L1515.7 1418.9L1518.7 1419.9L1521.8 1421.0L1524.8 1422.1L1527.8 1423.2L1530.8 1424.4L1533.8 1425.6L1536.8 1426.8L1539.8 1428.0L1542.9 1429.3L1545.9 1430.5L1548.9 1431.9L1551.9 1433.2L1554.9 1434.6L1557.9 1436.0L1560.9 1437.5L1564.0 1439.0L1567.0 1440.6L1570.0 1442.2L1573.0 1443.9L1576.0 1445.7L1579.0 1447.5L1582.0 1449.4L1585.1 1451.4L1588.1 1453.5L1591.1 1455.7L1594.1 1458.0L1597.1 1460.5L1600.1 1463.1L1603.1 1465.8L1606.2 1468.6L1609.2 1471.7L1612.2 1474.8L1615.2 1478.0L1618.2 1481.3L1621.2 1484.5L1624.2 1487.8L1627.3 1491.0L1630.3 1494.1L1633.3 1497.1L1636.3 1500.0L1639.3 1502.7L1642.3 1505.3L1645.4 1507.7L1648.4 1509.9L1651.4 1512.0L1654.4 1514.0L1657.4 1515.8L1660.4 1517.4L1663.4 1518.8L1666.5 1520.0L1669.5 1521.0L1672.5 1521.9L1675.5 1522.5L1678.5 1523.0L1681.5 1523.2L1684.5 1523.3L1687.6 1523.2L1690.6 1522.9L1693.6 1522.6L1696.6 1522.1L1699.6 1521.6L1702.6 1521.0L1705.6 1520.4L1708.7 1519.8L1711.7 1519.2L1714.7 1518.6L1717.7 1518.2L1720.7 1517.8L1723.7 1517.5L1726.8 1517.3L1729.8 1517.3L1732.8 1517.5L1735.8 1517.9L1738.8 1518.4L1741.8 1519.2L1744.8 1520.1L1747.9 1521.2L1750.9 1522.3L1753.9 1523.6L1756.9 1525.0L1759.9 1526.5L1762.9 1528.0L1765.9 1529.5L1769.0 1531.0L1772.0 1532.6L1775.0 1534.1L1778.0 1535.6" fill="none" stroke="#000" stroke-width="2.35" stroke-linejoin="round"/><path d="M1368.0 1538.5L1371.0 1535.0L1374.0 1531.4L1377.0 1528.0L1380.1 1524.5L1383.1 1521.2L1386.1 1517.8L1389.1 1514.5L1392.1 1511.3L1395.1 1508.1L1398.1 1505.0L1401.2 1502.0L1404.2 1499.0L1407.2 1496.1L1410.2 1493.3L1413.2 1490.6L1416.2 1487.9L1419.2 1485.4L1422.3 1482.9L1425.3 1480.5L1428.3 1478.2L1431.3 1476.1L1434.3 1474.0L1437.3 1472.1L1440.4 1470.2L1443.4 1468.5L1446.4 1466.8L1449.4 1465.3L1452.4 1463.8L1455.4 1462.4L1458.4 1461.1L1461.5 1459.8L1464.5 1458.6L1467.5 1457.5L1470.5 1456.4L1473.5 1455.4L1476.5 1454.5L1479.5 1453.5L1482.6 1452.6L1485.6 1451.8L1488.6 1451.0L1491.6 1450.2L1494.6 1449.4L1497.6 1448.7L1500.6 1448.1L1503.7 1447.4L1506.7 1446.9L1509.7 1446.4L1512.7 1445.9L1515.7 1445.6L1518.7 1445.3L1521.8 1445.1L1524.8 1444.9L1527.8 1444.9L1530.8 1444.8L1533.8 1444.8L1536.8 1444.7L1539.8 1444.5L1542.9 1444.3L1545.9 1443.9L1548.9 1443.4L1551.9 1442.8L1554.9 1442.1L1557.9 1441.3L1560.9 1440.4L1564.0 1439.5L1567.0 1438.6L1570.0 1437.6L1573.0 1436.6L1576.0 1435.6L1579.0 1434.6L1582.0 1433.7L1585.1 1432.8L1588.1 1431.9L1591.1 1431.1L1594.1 1430.4L1597.1 1429.8L1600.1 1429.3L1603.1 1428.9L1606.2 1428.7L1609.2 1428.6L1612.2 1428.7L1615.2 1428.9L1618.2 1429.4L1621.2 1430.1L1624.2 1431.0L1627.3 1432.1L1630.3 1433.5L1633.3 1435.2L1636.3 1437.1L1639.3 1439.4L1642.3 1441.9L1645.4 1444.7L1648.4 1447.7L1651.4 1450.9L1654.4 1454.1L1657.4 1457.5L1660.4 1460.8L1663.4 1464.2L1666.5 1467.5L1669.5 1470.7L1672.5 1473.8L1675.5 1476.7L1678.5 1479.4L1681.5 1482.0L1684.5 1484.3L1687.6 1486.5L1690.6 1488.5L1693.6 1490.5L1696.6 1492.3L1699.6 1494.0L1702.6 1495.6L1705.6 1497.2L1708.7 1498.8L1711.7 1500.3L1714.7 1501.8L1717.7 1503.3L1720.7 1504.8L1723.7 1506.4L1726.8 1508.0L1729.8 1509.7L1732.8 1511.4L1735.8 1513.2L1738.8 1515.0L1741.8 1516.9L1744.8 1518.9L1747.9 1520.8L1750.9 1522.8L1753.9 1524.8L1756.9 1526.9L1759.9 1528.9L1762.9 1531.0L1765.9 1533.0L1769.0 1535.1L1772.0 1537.1L1775.0 1539.1L1778.0 1541.1L1778.0 1589.0L1368.0 1589.0Z" fill="#3b8d8b" fill-opacity="0.7" stroke="none"/><path d="M1368.0 1538.5L1371.0 1535.0L1374.0 1531.4L1377.0 1528.0L1380.1 1524.5L1383.1 1521.2L1386.1 1517.8L1389.1 1514.5L1392.1 1511.3L1395.1 1508.1L1398.1 1505.0L1401.2 1502.0L1404.2 1499.0L1407.2 1496.1L1410.2 1493.3L1413.2 1490.6L1416.2 1487.9L1419.2 1485.4L1422.3 1482.9L1425.3 1480.5L1428.3 1478.2L1431.3 1476.1L1434.3 1474.0L1437.3 1472.1L1440.4 1470.2L1443.4 1468.5L1446.4 1466.8L1449.4 1465.3L1452.4 1463.8L1455.4 1462.4L1458.4 1461.1L1461.5 1459.8L1464.5 1458.6L1467.5 1457.5L1470.5 1456.4L1473.5 1455.4L1476.5 1454.5L1479.5 1453.5L1482.6 1452.6L1485.6 1451.8L1488.6 1451.0L1491.6 1450.2L1494.6 1449.4L1497.6 1448.7L1500.6 1448.1L1503.7 1447.4L1506.7 1446.9L1509.7 1446.4L1512.7 1445.9L1515.7 1445.6L1518.7 1445.3L1521.8 1445.1L1524.8 1444.9L1527.8 1444.9L1530.8 1444.8L1533.8 1444.8L1536.8 1444.7L1539.8 1444.5L1542.9 1444.3L1545.9 1443.9L1548.9 1443.4L1551.9 1442.8L1554.9 1442.1L1557.9 1441.3L1560.9 1440.4L1564.0 1439.5L1567.0 1438.6L1570.0 1437.6L1573.0 1436.6L1576.0 1435.6L1579.0 1434.6L1582.0 1433.7L1585.1 1432.8L1588.1 1431.9L1591.1 1431.1L1594.1 1430.4L1597.1 1429.8L1600.1 1429.3L1603.1 1428.9L1606.2 1428.7L1609.2 1428.6L1612.2 1428.7L1615.2 1428.9L1618.2 1429.4L1621.2 1430.1L1624.2 1431.0L1627.3 1432.1L1630.3 1433.5L1633.3 1435.2L1636.3 1437.1L1639.3 1439.4L1642.3 1441.9L1645.4 1444.7L1648.4 1447.7L1651.4 1450.9L1654.4 1454.1L1657.4 1457.5L1660.4 1460.8L1663.4 1464.2L1666.5 1467.5L1669.5 1470.7L1672.5 1473.8L1675.5 1476.7L1678.5 1479.4L1681.5 1482.0L1684.5 1484.3L1687.6 1486.5L1690.6 1488.5L1693.6 1490.5L1696.6 1492.3L1699.6 1494.0L1702.6 1495.6L1705.6 1497.2L1708.7 1498.8L1711.7 1500.3L1714.7 1501.8L1717.7 1503.3L1720.7 1504.8L1723.7 1506.4L1726.8 1508.0L1729.8 1509.7L1732.8 1511.4L1735.8 1513.2L1738.8 1515.0L1741.8 1516.9L1744.8 1518.9L1747.9 1520.8L1750.9 1522.8L1753.9 1524.8L1756.9 1526.9L1759.9 1528.9L1762.9 1531.0L1765.9 1533.0L1769.0 1535.1L1772.0 1537.1L1775.0 1539.1L1778.0 1541.1" fill="none" stroke="#000" stroke-width="2.35" stroke-linejoin="round"/><path d="M1368.0 1537.9L1371.0 1534.2L1374.0 1530.5L1377.0 1526.8L1380.1 1523.2L1383.1 1519.6L1386.1 1516.0L1389.1 1512.5L1392.1 1509.1L1395.1 1505.7L1398.1 1502.4L1401.2 1499.2L1404.2 1496.1L1407.2 1493.0L1410.2 1490.1L1413.2 1487.2L1416.2 1484.5L1419.2 1481.8L1422.3 1479.3L1425.3 1476.9L1428.3 1474.6L1431.3 1472.5L1434.3 1470.5L1437.3 1468.6L1440.4 1466.9L1443.4 1465.2L1446.4 1463.7L1449.4 1462.4L1452.4 1461.2L1455.4 1460.1L1458.4 1459.1L1461.5 1458.3L1464.5 1457.5L1467.5 1456.8L1470.5 1456.1L1473.5 1455.3L1476.5 1454.6L1479.5 1453.7L1482.6 1452.8L1485.6 1451.8L1488.6 1450.8L1491.6 1449.7L1494.6 1448.5L1497.6 1447.4L1500.6 1446.1L1503.7 1444.9L1506.7 1443.6L1509.7 1442.2L1512.7 1440.9L1515.7 1439.6L1518.7 1438.2L1521.8 1436.9L1524.8 1435.5L1527.8 1434.2L1530.8 1432.9L1533.8 1431.6L1536.8 1430.3L1539.8 1429.1L1542.9 1428.0L1545.9 1426.9L1548.9 1425.9L1551.9 1425.1L1554.9 1424.4L1557.9 1423.8L1560.9 1423.4L1564.0 1423.1L1567.0 1423.1L1570.0 1423.3L1573.0 1423.6L1576.0 1424.3L1579.0 1425.2L1582.0 1426.3L1585.1 1427.7L1588.1 1429.4L1591.1 1431.2L1594.1 1433.2L1597.1 1435.3L1600.1 1437.5L1603.1 1439.9L1606.2 1442.2L1609.2 1444.7L1612.2 1447.1L1615.2 1449.5L1618.2 1451.9L1621.2 1454.2L1624.2 1456.4L1627.3 1458.5L1630.3 1460.5L1633.3 1462.4L1636.3 1464.1L1639.3 1465.8L1642.3 1467.3L1645.4 1468.8L1648.4 1470.2L1651.4 1471.6L1654.4 1472.8L1657.4 1474.0L1660.4 1475.2L1663.4 1476.3L1666.5 1477.4L1669.5 1478.5L1672.5 1479.5L1675.5 1480.6L1678.5 1481.6L1681.5 1482.6L1684.5 1483.7L1687.6 1484.7L1690.6 1485.8L1693.6 1486.9L1696.6 1488.0L1699.6 1489.2L1702.6 1490.4L1705.6 1491.7L1708.7 1493.1L1711.7 1494.5L1714.7 1496.0L1717.7 1497.5L1720.7 1499.2L1723.7 1500.9L1726.8 1502.8L1729.8 1504.8L1732.8 1506.8L1735.8 1509.0L1738.8 1511.3L1741.8 1513.7L1744.8 1516.2L1747.9 1518.7L1750.9 1521.2L1753.9 1523.8L1756.9 1526.4L1759.9 1529.1L1762.9 1531.6L1765.9 1534.2L1769.0 1536.7L1772.0 1539.2L1775.0 1541.6L1778.0 1543.9L1778.0 1589.0L1368.0 1589.0Z" fill="#f8e845" fill-opacity="0.7" stroke="none"/><path d="M1368.0 1537.9L1371.0 1534.2L1374.0 1530.5L1377.0 1526.8L1380.1 1523.2L1383.1 1519.6L1386.1 1516.0L1389.1 1512.5L1392.1 1509.1L1395.1 1505.7L1398.1 1502.4L1401.2 1499.2L1404.2 1496.1L1407.2 1493.0L1410.2 1490.1L1413.2 1487.2L1416.2 1484.5L1419.2 1481.8L1422.3 1479.3L1425.3 1476.9L1428.3 1474.6L1431.3 1472.5L1434.3 1470.5L1437.3 1468.6L1440.4 1466.9L1443.4 1465.2L1446.4 1463.7L1449.4 1462.4L1452.4 1461.2L1455.4 1460.1L1458.4 1459.1L1461.5 1458.3L1464.5 1457.5L1467.5 1456.8L1470.5 1456.1L1473.5 1455.3L1476.5 1454.6L1479.5 1453.7L1482.6 1452.8L1485.6 1451.8L1488.6 1450.8L1491.6 1449.7L1494.6 1448.5L1497.6 1447.4L1500.6 1446.1L1503.7 1444.9L1506.7 1443.6L1509.7 1442.2L1512.7 1440.9L1515.7 1439.6L1518.7 1438.2L1521.8 1436.9L1524.8 1435.5L1527.8 1434.2L1530.8 1432.9L1533.8 1431.6L1536.8 1430.3L1539.8 1429.1L1542.9 1428.0L1545.9 1426.9L1548.9 1425.9L1551.9 1425.1L1554.9 1424.4L1557.9 1423.8L1560.9 1423.4L1564.0 1423.1L1567.0 1423.1L1570.0 1423.3L1573.0 1423.6L1576.0 1424.3L1579.0 1425.2L1582.0 1426.3L1585.1 1427.7L1588.1 1429.4L1591.1 1431.2L1594.1 1433.2L1597.1 1435.3L1600.1 1437.5L1603.1 1439.9L1606.2 1442.2L1609.2 1444.7L1612.2 1447.1L1615.2 1449.5L1618.2 1451.9L1621.2 1454.2L1624.2 1456.4L1627.3 1458.5L1630.3 1460.5L1633.3 1462.4L1636.3 1464.1L1639.3 1465.8L1642.3 1467.3L1645.4 1468.8L1648.4 1470.2L1651.4 1471.6L1654.4 1472.8L1657.4 1474.0L1660.4 1475.2L1663.4 1476.3L1666.5 1477.4L1669.5 1478.5L1672.5 1479.5L1675.5 1480.6L1678.5 1481.6L1681.5 1482.6L1684.5 1483.7L1687.6 1484.7L1690.6 1485.8L1693.6 1486.9L1696.6 1488.0L1699.6 1489.2L1702.6 1490.4L1705.6 1491.7L1708.7 1493.1L1711.7 1494.5L1714.7 1496.0L1717.7 1497.5L1720.7 1499.2L1723.7 1500.9L1726.8 1502.8L1729.8 1504.8L1732.8 1506.8L1735.8 1509.0L1738.8 1511.3L1741.8 1513.7L1744.8 1516.2L1747.9 1518.7L1750.9 1521.2L1753.9 1523.8L1756.9 1526.4L1759.9 1529.1L1762.9 1531.6L1765.9 1534.2L1769.0 1536.7L1772.0 1539.2L1775.0 1541.6L1778.0 1543.9" fill="none" stroke="#000" stroke-width="2.35" stroke-linejoin="round"/><text x="1572.6" y="1324.4" text-anchor="middle" font-size="19.7" letter-spacing="0.36" fill="#1a1a1a">dcd D.2.1.5.3</text><text x="1367.1" y="1626.5" text-anchor="middle" font-size="19.6" letter-spacing="0.1" fill="#4d4d4d">0</text><text x="1479.7" y="1626.5" text-anchor="middle" font-size="19.6" letter-spacing="0.1" fill="#4d4d4d">300</text><text x="1592.3" y="1626.5" text-anchor="middle" font-size="19.6" letter-spacing="0.1" fill="#4d4d4d">600</text><text x="1704.9" y="1626.5" text-anchor="middle" font-size="19.6" letter-spacing="0.1" fill="#4d4d4d">900</text></g>
<text x="1487.8" y="1730.9" font-size="25" fill="#000" textLength="110.9" lengthAdjust="spacing">Treatment</text>
<rect x="1613.4" y="1703.7" width="35.9" height="35.9" fill="#3a044f" fill-opacity="0.7" stroke="#000" stroke-width="2.35"/>
<text x="1664.8" y="1729.2" font-size="19.6" letter-spacing="0.36" fill="#000">A: Drug X</text>
<rect x="1768.5" y="1703.7" width="35.9" height="35.9" fill="#3b8d8b" fill-opacity="0.7" stroke="#000" stroke-width="2.35"/>
<text x="1819.9" y="1729.2" font-size="19.6" letter-spacing="0.36" fill="#000">B: Placebo</text>
<rect x="1931.2" y="1703.7" width="35.9" height="35.9" fill="#f8e845" fill-opacity="0.7" stroke="#000" stroke-width="2.35"/>
<text x="1983.0" y="1729.2" font-size="19.6" letter-spacing="0.36" fill="#000">C: Combination</text>
</svg>
</div></div>
</body>
</html>
